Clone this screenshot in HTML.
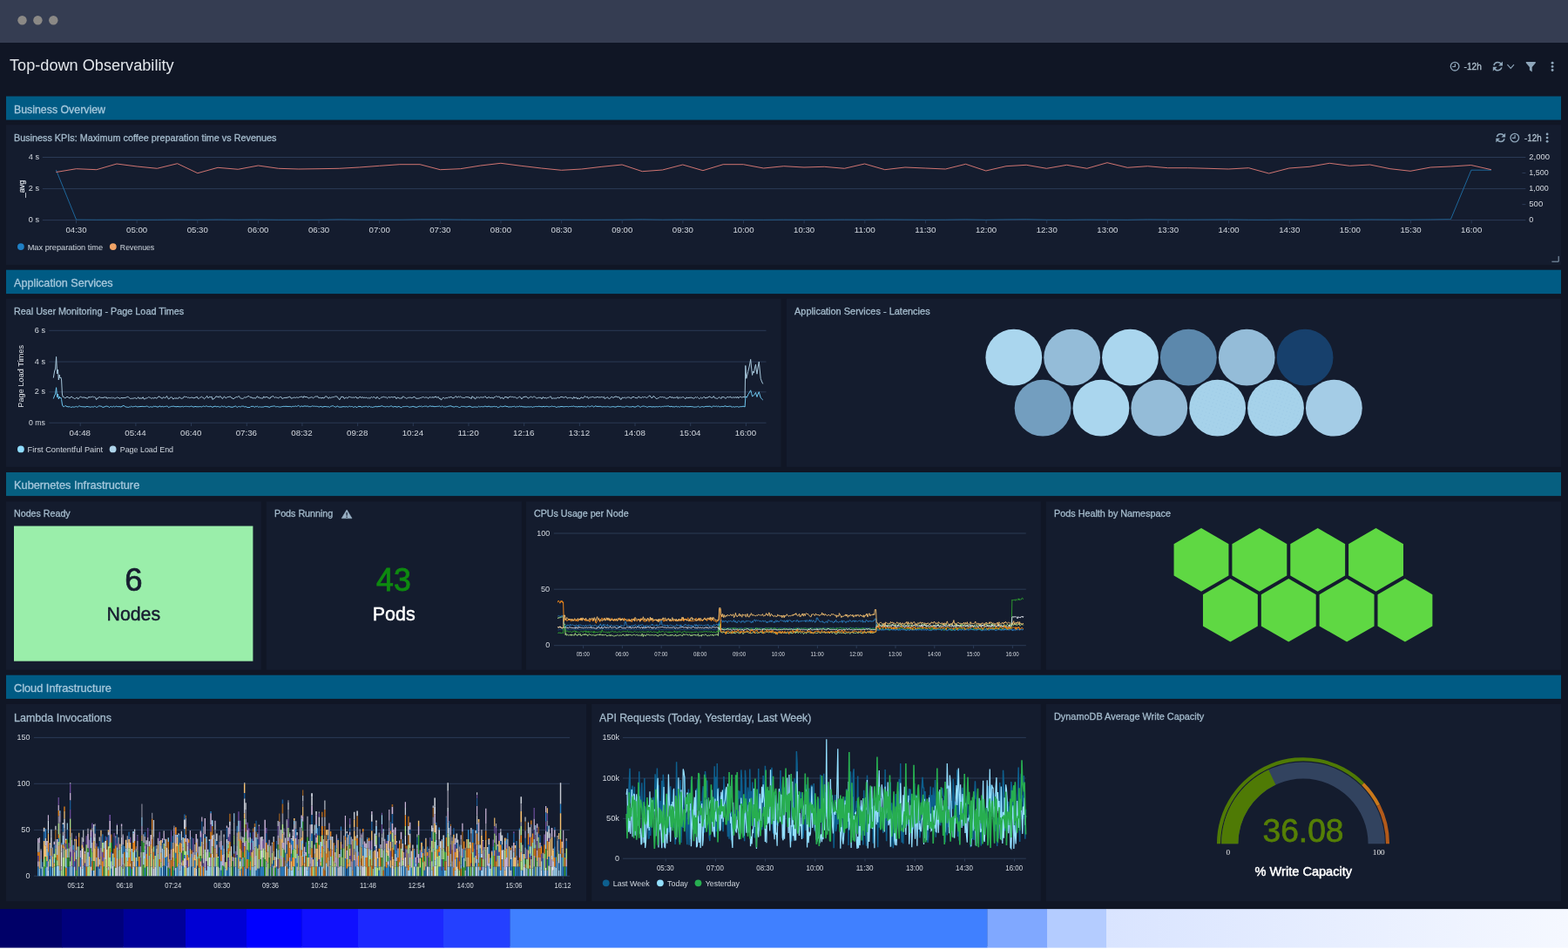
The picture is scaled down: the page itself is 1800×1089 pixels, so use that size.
<!DOCTYPE html>
<html lang="en"><head><meta charset="utf-8"><title>Top-down Observability</title>
<style>
*{box-sizing:border-box;margin:0;padding:0}
html,body{width:1800px;height:1089px;overflow:hidden;background:#101625}
body{position:relative;font-family:"Liberation Sans",sans-serif;color:#d3d8df}
#app{position:absolute;left:0;top:0;width:1800px;height:1089px;will-change:transform}
.t{position:absolute;white-space:nowrap;transform-origin:0 50%}
.abs{position:absolute}
h1,h2,h3{font-weight:400}
h2,h3{-webkit-text-stroke:.3px currentColor}
#bgl{position:absolute;left:0;top:0}
.sec{position:absolute;left:7px;width:1785px;height:27px}
.panel{position:absolute}
svg{position:absolute;left:0;top:0;overflow:visible}
svg text{font-family:"Liberation Sans",sans-serif}
svg text.sf{font-family:"Liberation Serif",serif}
</style></head>
<body><div id="app">
<svg id="bgl" width="1800" height="1089" viewBox="0 0 1800 1089" aria-hidden="true"><rect x="0" y="0" width="1800" height="49" fill="#353d52"/><circle cx="25.5" cy="23.3" r="5.2" fill="#8b8986"/><circle cx="43.4" cy="23.3" r="5.2" fill="#8b8986"/><circle cx="61.3" cy="23.3" r="5.2" fill="#8b8986"/><rect x="7" y="110.5" width="1785" height="27.1" fill="#005b84"/><rect x="7" y="309.7" width="1785" height="27.4" fill="#005b84"/><rect x="7" y="542" width="1785" height="27.1" fill="#065f80"/><rect x="7" y="774.7" width="1785" height="27.2" fill="#005b84"/><rect x="7" y="143.2" width="1785" height="160.7" fill="#141c2e"/><rect x="7" y="342.7" width="889.5" height="193.1" fill="#141c2e"/><rect x="902.8" y="342.7" width="889.2" height="193.1" fill="#141c2e"/><rect x="7" y="575.4" width="292.8" height="193.3" fill="#141c2e"/><rect x="305.7" y="575.4" width="293.1" height="193.3" fill="#141c2e"/><rect x="604" y="575.4" width="590.8" height="193.3" fill="#141c2e"/><rect x="1200.8" y="575.4" width="591.2" height="193.3" fill="#141c2e"/><rect x="7" y="807.9" width="666.2" height="226.4" fill="#141c2e"/><rect x="679.2" y="807.9" width="515.6" height="226.4" fill="#141c2e"/><rect x="1200.8" y="807.9" width="591.2" height="226.4" fill="#141c2e"/><defs><linearGradient id="lg" x1="0" x2="1" y1="0" y2="0"><stop offset="0" stop-color="#d9e4ff"/><stop offset="1" stop-color="#f5f8ff"/></linearGradient></defs><rect x="0" y="1086" width="1800" height="3" fill="#ffffff"/><rect x="0" y="1043.1" width="71.3" height="44.5" fill="#000068"/><rect x="71" y="1043.1" width="70.8" height="44.5" fill="#00007c"/><rect x="141.5" y="1043.1" width="71.8" height="44.5" fill="#000098"/><rect x="213" y="1043.1" width="70.3" height="44.5" fill="#0000d4"/><rect x="283" y="1043.1" width="63.8" height="44.5" fill="#0000ff"/><rect x="346.5" y="1043.1" width="64.8" height="44.5" fill="#1010ff"/><rect x="411" y="1043.1" width="98.3" height="44.5" fill="#1c28ff"/><rect x="509" y="1043.1" width="76.8" height="44.5" fill="#2440ff"/><rect x="585.5" y="1043.1" width="548.3" height="44.5" fill="#4080ff"/><rect x="1133.5" y="1043.1" width="68.8" height="44.5" fill="#80a8ff"/><rect x="1202" y="1043.1" width="68.3" height="44.5" fill="#b4ccff"/><rect x="1270" y="1043.1" width="530" height="44.5" fill="url(#lg)"/></svg>
<header id="hdr">
<h1 class="t" style="left:10.6px;top:65px;font-size:18px;line-height:20px;color:#e2e6eb;transform:scaleX(1.008);">Top-down Observability</h1>
<svg width="1800" height="110" viewBox="0 0 1800 110">
<g fill="none" stroke="#8ea6ba" stroke-width="1.3"><circle cx="1670.1" cy="76.2" r="4.8"/><path d="M1670.4 73.22V76.5H1667.22" stroke-width="1.17"/></g>
<text transform="translate(1680.6 80) scale(0.922 1)" font-size="11" fill="#b0c1ce" stroke="#b0c1ce" stroke-width="0.3">-12h</text>
<g fill="none" stroke="#8ea6ba" stroke-width="1.5"><path d="M1714.96 75.01A4.59 4.59 0 0 1 1723.56 74.26"/><path d="M1723.84 77.39A4.59 4.59 0 0 1 1715.24 78.14"/></g><path d="M1725 70.6V75.53H1720.07Z" fill="#8ea6ba"/><path d="M1713.8 81.8V76.87H1718.73Z" fill="#8ea6ba"/>
<path d="M1730.4 74.2L1734.2 78.4L1738 74.2" fill="none" stroke="#8ea6ba" stroke-width="1.1"/>
<path d="M1751.8 71H1762.8V72.37L1758.73 76.93V82.4L1755.87 80.46V76.93L1751.8 72.37Z" fill="#8ea6ba"/>
<g fill="#8ea6ba"><circle cx="1782.1" cy="72.3" r="1.45"/><circle cx="1782.1" cy="76.4" r="1.45"/><circle cx="1782.1" cy="80.5" r="1.45"/></g>
</svg>
</header>
<div class="sec" style="top:110px"><h2 class="t" style="left:9.2px;top:9px;font-size:12.6px;line-height:14px;color:#a6c8dc;transform:scaleX(0.98);">Business Overview</h2></div>
<div class="sec" style="top:310px"><h2 class="t" style="left:9.2px;top:8px;font-size:12.6px;line-height:14px;color:#a6c8dc;transform:scaleX(1.002);">Application Services</h2></div>
<div class="sec" style="top:542px"><h2 class="t" style="left:9.2px;top:8px;font-size:12.6px;line-height:14px;color:#a6c8dc;transform:scaleX(1.015);">Kubernetes Infrastructure</h2></div>
<div class="sec" style="top:775px"><h2 class="t" style="left:9.2px;top:8px;font-size:12.6px;line-height:14px;color:#a6c8dc;transform:scaleX(1.012);">Cloud Infrastructure</h2></div>
<section class="panel" id="p1" style="left:7px;top:143px;width:1785px;height:161px">
<h3 class="t" style="left:9.2px;top:9px;font-size:10.8px;line-height:12px;color:#a4bbcc;transform:scaleX(1.001);">Business KPIs: Maximum coffee preparation time vs Revenues</h3>
<svg width="1785" height="161" viewBox="7 143 1785 161">
<g><path d="M48.8 180.5H1751.4" stroke="#2a3a55" stroke-width="1"/><path d="M48.8 216.6H1751.4" stroke="#2a3a55" stroke-width="1"/><path d="M48.8 252.6H1751.4" stroke="#2a3a55" stroke-width="1"/><path d="M1747.5 198.5H1751.4" stroke="#2a3a55" stroke-width="1"/><path d="M1747.5 234.6H1751.4" stroke="#2a3a55" stroke-width="1"/><path d="M87.5 252.6V256.4" stroke="#2a3a55" stroke-width="1"/><path d="M157.14 252.6V256.4" stroke="#2a3a55" stroke-width="1"/><path d="M226.78 252.6V256.4" stroke="#2a3a55" stroke-width="1"/><path d="M296.42 252.6V256.4" stroke="#2a3a55" stroke-width="1"/><path d="M366.06 252.6V256.4" stroke="#2a3a55" stroke-width="1"/><path d="M435.7 252.6V256.4" stroke="#2a3a55" stroke-width="1"/><path d="M505.33 252.6V256.4" stroke="#2a3a55" stroke-width="1"/><path d="M574.97 252.6V256.4" stroke="#2a3a55" stroke-width="1"/><path d="M644.61 252.6V256.4" stroke="#2a3a55" stroke-width="1"/><path d="M714.25 252.6V256.4" stroke="#2a3a55" stroke-width="1"/><path d="M783.89 252.6V256.4" stroke="#2a3a55" stroke-width="1"/><path d="M853.53 252.6V256.4" stroke="#2a3a55" stroke-width="1"/><path d="M923.17 252.6V256.4" stroke="#2a3a55" stroke-width="1"/><path d="M992.81 252.6V256.4" stroke="#2a3a55" stroke-width="1"/><path d="M1062.45 252.6V256.4" stroke="#2a3a55" stroke-width="1"/><path d="M1132.09 252.6V256.4" stroke="#2a3a55" stroke-width="1"/><path d="M1201.73 252.6V256.4" stroke="#2a3a55" stroke-width="1"/><path d="M1271.37 252.6V256.4" stroke="#2a3a55" stroke-width="1"/><path d="M1341 252.6V256.4" stroke="#2a3a55" stroke-width="1"/><path d="M1410.64 252.6V256.4" stroke="#2a3a55" stroke-width="1"/><path d="M1480.28 252.6V256.4" stroke="#2a3a55" stroke-width="1"/><path d="M1549.92 252.6V256.4" stroke="#2a3a55" stroke-width="1"/><path d="M1619.56 252.6V256.4" stroke="#2a3a55" stroke-width="1"/><path d="M1689.2 252.6V256.4" stroke="#2a3a55" stroke-width="1"/></g>
<polyline points="64.4,195 87.5,252" fill="none" stroke="#1f7ab8" stroke-width="0.8"/>
<polyline points="87.5,252 110.81,252.21 134.01,252.12 157.22,252.22 180.42,252.19 203.63,251.97 226.83,252.23 250.03,251.91 273.24,252.15 296.44,251.94 319.65,252.21 342.85,252.16 366.05,252.24 389.26,251.72 412.46,252 435.67,252.12 458.87,252.13 482.08,251.71 505.28,251.69 528.48,251.99 551.69,252.14 574.89,252.19 598.1,252.28 621.3,252.12 644.51,252.08 667.71,252.19 690.91,252.16 714.12,252.07 737.32,251.7 760.53,252.11 783.73,251.88 806.94,252.08 830.14,252.04 853.34,252.18 876.55,252.26 899.75,252.08 922.96,252.21 946.16,252.14 969.36,251.97 992.57,252.12 1015.77,251.87 1038.98,252.02 1062.18,252.21 1085.39,252.15 1108.59,251.78 1131.79,252.28 1155,251.84 1178.2,251.59 1201.41,252.19 1224.61,252.26 1247.82,252.01 1271.02,252.13 1294.22,252.28 1317.43,251.79 1340.63,252.01 1363.84,252.07 1387.04,251.97 1410.25,251.8 1433.45,252.17 1456.65,252.26 1479.86,251.85 1503.06,252.08 1526.27,252.09 1549.47,252.14 1572.67,251.86 1595.88,251.96 1619.08,252.11 1642.29,251.85 1665.5,251.4" fill="none" stroke="#1f7ab8" stroke-width="0.55" stroke-linejoin="round"/>
<polyline points="1665.5,251.4 1688.9,195.2 1711.9,195.2" fill="none" stroke="#1f7ab8" stroke-width="0.8" stroke-linejoin="round"/>
<polyline points="64.4,197.5 87.6,193.7 110.81,194.7 134.01,188 157.22,191 180.42,193.3 203.63,187.7 226.83,198.7 250.03,192.3 273.24,194.3 296.44,190 319.65,193.3 342.85,194 366.05,193.7 389.26,193.3 412.46,192 435.67,190.3 458.87,188.7 482.08,188.7 505.28,194.7 528.48,193.7 551.69,190 574.89,187.3 598.1,190.3 621.3,193 644.51,195.3 667.71,194 690.91,191.3 714.12,189 737.32,196.7 760.53,195 783.73,189 806.94,195.7 830.14,188.7 853.34,188.7 876.55,193 899.75,190.7 922.96,192 946.16,191.3 969.36,193.3 992.57,188 1015.77,194.7 1038.98,192 1062.18,193 1085.39,194 1108.59,188.3 1131.79,196 1155,190.7 1178.2,189.3 1201.41,193.3 1224.61,189.3 1247.82,193.3 1271.02,186.7 1294.22,192.3 1317.43,190.7 1340.63,192.7 1363.84,192.7 1387.04,193.3 1410.25,194 1433.45,192.7 1456.65,199 1479.86,193 1503.06,191.3 1526.27,187.3 1549.47,190.3 1572.67,189 1595.88,193.7 1619.08,196.3 1642.29,192 1665.49,191 1688.7,189.5 1711.9,194.7" fill="none" stroke="#da7975" stroke-width="0.95" stroke-linejoin="round"/>
<g><text transform="translate(75.4 267.4) scale(1.074 1)" font-size="9" fill="#d3d8df">04:30</text><text transform="translate(145.04 267.4) scale(1.074 1)" font-size="9" fill="#d3d8df">05:00</text><text transform="translate(214.68 267.4) scale(1.074 1)" font-size="9" fill="#d3d8df">05:30</text><text transform="translate(284.32 267.4) scale(1.074 1)" font-size="9" fill="#d3d8df">06:00</text><text transform="translate(353.96 267.4) scale(1.074 1)" font-size="9" fill="#d3d8df">06:30</text><text transform="translate(423.6 267.4) scale(1.074 1)" font-size="9" fill="#d3d8df">07:00</text><text transform="translate(493.23 267.4) scale(1.074 1)" font-size="9" fill="#d3d8df">07:30</text><text transform="translate(562.87 267.4) scale(1.074 1)" font-size="9" fill="#d3d8df">08:00</text><text transform="translate(632.51 267.4) scale(1.074 1)" font-size="9" fill="#d3d8df">08:30</text><text transform="translate(702.15 267.4) scale(1.074 1)" font-size="9" fill="#d3d8df">09:00</text><text transform="translate(771.79 267.4) scale(1.074 1)" font-size="9" fill="#d3d8df">09:30</text><text transform="translate(841.43 267.4) scale(1.074 1)" font-size="9" fill="#d3d8df">10:00</text><text transform="translate(911.07 267.4) scale(1.074 1)" font-size="9" fill="#d3d8df">10:30</text><text transform="translate(980.71 267.4) scale(1.107 1)" font-size="9" fill="#d3d8df">11:00</text><text transform="translate(1050.35 267.4) scale(1.107 1)" font-size="9" fill="#d3d8df">11:30</text><text transform="translate(1119.99 267.4) scale(1.074 1)" font-size="9" fill="#d3d8df">12:00</text><text transform="translate(1189.63 267.4) scale(1.074 1)" font-size="9" fill="#d3d8df">12:30</text><text transform="translate(1259.27 267.4) scale(1.074 1)" font-size="9" fill="#d3d8df">13:00</text><text transform="translate(1328.9 267.4) scale(1.074 1)" font-size="9" fill="#d3d8df">13:30</text><text transform="translate(1398.54 267.4) scale(1.074 1)" font-size="9" fill="#d3d8df">14:00</text><text transform="translate(1468.18 267.4) scale(1.074 1)" font-size="9" fill="#d3d8df">14:30</text><text transform="translate(1537.82 267.4) scale(1.074 1)" font-size="9" fill="#d3d8df">15:00</text><text transform="translate(1607.46 267.4) scale(1.074 1)" font-size="9" fill="#d3d8df">15:30</text><text transform="translate(1677.1 267.4) scale(1.074 1)" font-size="9" fill="#d3d8df">16:00</text><text transform="translate(32.8 183) scale(1.016 1)" font-size="9" fill="#d3d8df">4 s</text><text transform="translate(32.8 219.1) scale(1.016 1)" font-size="9" fill="#d3d8df">2 s</text><text transform="translate(32.8 255.1) scale(1.016 1)" font-size="9" fill="#d3d8df">0 s</text><text transform="translate(1755.3 183) scale(1.052 1)" font-size="9" fill="#d3d8df">2,000</text><text transform="translate(1755.3 201) scale(0.999 1)" font-size="9" fill="#d3d8df">1,500</text><text transform="translate(1755.3 219.1) scale(0.999 1)" font-size="9" fill="#d3d8df">1,000</text><text transform="translate(1755.3 237.1) scale(1.065 1)" font-size="9" fill="#d3d8df">500</text><text x="1755.3" y="255.1" font-size="9" fill="#d3d8df">0</text><text transform="translate(28 216.5) rotate(-90)" text-anchor="middle" font-size="9.2" stroke="#d3d8df" stroke-width="0.3" fill="#d3d8df">_avg</text></g>
<circle cx="23.9" cy="283.1" r="3.9" fill="#1f7fc4"/>
<text transform="translate(31.7 286.9) scale(1.024 1)" font-size="9" fill="#cfd6de">Max preparation time</text>
<circle cx="129.8" cy="283.1" r="3.9" fill="#f5aa6c"/><circle cx="129.8" cy="283.1" r="3.4" fill="url(#dots2)"/>
<text transform="translate(137.8 286.9) scale(0.975 1)" font-size="9" fill="#cfd6de">Revenues</text>
<g fill="none" stroke="#8ea6ba" stroke-width="1.5"><path d="M1718.42 156.95A4.43 4.43 0 0 1 1726.71 156.23"/><path d="M1726.98 159.25A4.43 4.43 0 0 1 1718.69 159.97"/></g><path d="M1728.1 152.7V157.45H1723.35Z" fill="#8ea6ba"/><path d="M1717.3 163.5V158.75H1722.05Z" fill="#8ea6ba"/>
<g fill="none" stroke="#8ea6ba" stroke-width="1.3"><circle cx="1738.8" cy="158.1" r="4.8"/><path d="M1739.1 155.12V158.4H1735.92" stroke-width="1.17"/></g>
<text transform="translate(1750 162) scale(0.89 1)" font-size="11" fill="#b0c1ce" stroke="#b0c1ce" stroke-width="0.3">-12h</text>
<g fill="#8ea6ba"><circle cx="1776.1" cy="153.9" r="1.4"/><circle cx="1776.1" cy="158.1" r="1.4"/><circle cx="1776.1" cy="162.3" r="1.4"/></g>
<path d="M1781.4 300.2H1789.2V293.9" fill="none" stroke="#8ea6ba" stroke-width="1"/>
</svg></section>
<section class="panel" id="p2" style="left:7px;top:343px;width:889px;height:193px">
<h3 class="t" style="left:9.2px;top:8px;font-size:10.8px;line-height:12px;color:#a4bbcc;transform:scaleX(1.001);">Real User Monitoring - Page Load Times</h3>
<svg width="889" height="193" viewBox="7 343 889 193">
<g><path d="M56.4 379.3H879.5" stroke="#2a3a55" stroke-width="1"/><path d="M56.4 415.1H879.5" stroke="#2a3a55" stroke-width="1"/><path d="M56.4 449.8H879.5" stroke="#2a3a55" stroke-width="1"/><path d="M56.4 485.2H879.5" stroke="#2a3a55" stroke-width="1"/><path d="M92.2 485.2V489" stroke="#2a3a55" stroke-width="1"/><path d="M155.88 485.2V489" stroke="#2a3a55" stroke-width="1"/><path d="M219.57 485.2V489" stroke="#2a3a55" stroke-width="1"/><path d="M283.25 485.2V489" stroke="#2a3a55" stroke-width="1"/><path d="M346.93 485.2V489" stroke="#2a3a55" stroke-width="1"/><path d="M410.62 485.2V489" stroke="#2a3a55" stroke-width="1"/><path d="M474.3 485.2V489" stroke="#2a3a55" stroke-width="1"/><path d="M537.98 485.2V489" stroke="#2a3a55" stroke-width="1"/><path d="M601.67 485.2V489" stroke="#2a3a55" stroke-width="1"/><path d="M665.35 485.2V489" stroke="#2a3a55" stroke-width="1"/><path d="M729.03 485.2V489" stroke="#2a3a55" stroke-width="1"/><path d="M792.72 485.2V489" stroke="#2a3a55" stroke-width="1"/><path d="M856.4 485.2V489" stroke="#2a3a55" stroke-width="1"/></g>
<polyline points="61.3,433.6 62.6,426 63.6,423 64.6,409.4 65.6,429 66.5,424 67.3,436 68.2,430 69,434 69.8,433 70.6,436 71.4,452 72.2,455.5 72.8,455.28 73.85,456.21 74.9,456.95 75.95,456.04 77,455.16 78.05,455.84 79.1,456.45 80.15,457.1 81.2,455.56 82.25,455.04 83.3,456.38 84.35,456.61 85.4,457.47 86.45,457.32 87.5,456.46 88.55,456.07 89.6,458.09 90.65,456.55 91.7,455.72 92.75,455.2 93.8,455.97 94.85,456.24 95.9,455.95 96.95,456.08 98,456.37 99.05,456.77 100.1,457.19 101.15,456.66 102.2,454.99 103.25,456.36 104.3,455.18 105.35,455.77 106.4,454.96 107.45,455.83 108.5,455.51 109.55,456.15 110.6,458.66 111.65,456.9 112.7,457.04 113.75,455.46 114.8,455.76 115.85,456.57 116.9,456.24 117.95,456.49 119,456.36 120.05,455.49 121.1,456.41 122.15,455.65 123.2,457.44 124.25,456.19 125.3,456.71 126.35,456.36 127.4,456.96 128.45,455.98 129.5,456.88 130.55,456.31 131.6,457.18 132.65,456.96 133.7,456.53 134.75,455.72 135.8,456.63 136.85,456.68 137.9,457.58 138.95,456.33 140,456.66 141.05,456.72 142.1,456.57 143.15,456.47 144.2,456.42 145.25,455.82 146.3,455.32 147.35,455.64 148.4,456.48 149.45,457.42 150.5,457.3 151.55,457.32 152.6,457.12 153.65,457 154.7,456.58 155.75,456.89 156.8,457.74 157.85,456.42 158.9,455.74 159.95,457.53 161,456.78 162.05,457.1 163.1,457.13 164.15,455.63 165.2,457.85 166.25,458.03 167.3,456.88 168.35,456.97 169.4,456.53 170.45,455.63 171.5,455.95 172.55,456.4 173.6,457.1 174.65,457 175.7,456.49 176.75,457.3 177.8,455.96 178.85,456.72 179.9,457.19 180.95,456.28 182,454.88 183.05,455.12 184.1,456.06 185.15,456.55 186.2,457.47 187.25,455.83 188.3,456.09 189.35,456.65 190.4,456.22 191.45,454.43 192.5,456.27 193.55,457.96 194.6,457.48 195.65,455.9 196.7,455.8 197.75,456.25 198.8,458.08 199.85,457.23 200.9,456.59 201.95,457.49 203,456.52 204.05,457.69 205.1,456.13 206.15,455.82 207.2,456.63 208.25,457.4 209.3,457.05 210.35,456.68 211.4,454.98 212.45,455.3 213.5,455.47 214.55,455.58 215.6,456.45 216.65,456.02 217.7,456.74 218.75,456.42 219.8,456.02 220.85,456.23 221.9,456.53 222.95,456.94 224,456.06 225.05,455.98 226.1,455.11 227.15,457.08 228.2,457.55 229.25,456.47 230.3,455.92 231.35,455.19 232.4,456.02 233.45,456.3 234.5,457.87 235.55,456.88 236.6,455.82 237.65,454.25 238.7,456.67 239.75,456.48 240.8,455.08 241.85,456 242.9,454.93 243.95,458.43 245,457.71 246.05,457.08 247.1,456.33 248.15,454.64 249.2,455.64 250.25,454.86 251.3,456.25 252.35,454.61 253.4,455.04 254.45,456.77 255.5,457.6 256.55,455.74 257.6,454.91 258.65,456.47 259.7,456.92 260.75,455.68 261.8,455.52 262.85,455.48 263.9,455.09 264.95,455.36 266,456.89 267.05,456.92 268.1,457.96 269.15,456.66 270.2,456.24 271.25,455.47 272.3,455.89 273.35,455.12 274.4,454.54 275.45,456.23 276.5,457.29 277.55,457.15 278.6,457.49 279.65,456.77 280.7,455.83 281.75,456.15 282.8,455.91 283.85,455.28 284.9,454.65 285.95,454.62 287,455.72 288.05,456.17 289.1,455.84 290.15,457.16 291.2,456.62 292.25,456.76 293.3,457.28 294.35,455.91 295.4,454.64 296.45,456.29 297.5,455.71 298.55,457.04 299.6,456.7 300.65,457.11 301.7,457.04 302.75,454.89 303.8,456.35 304.85,455.74 305.9,455.49 306.95,455.66 308,456.61 309.05,456.99 310.1,457.19 311.15,455.25 312.2,455.47 313.25,454.2 314.3,455.52 315.35,456.45 316.4,455.7 317.45,456.23 318.5,456.38 319.55,457.01 320.6,455.83 321.65,455.47 322.7,455.41 323.75,457.28 324.8,457.34 325.85,456.45 326.9,456.44 327.95,456.36 329,456.4 330.05,456.1 331.1,455.92 332.15,455.17 333.2,455.41 334.25,457.2 335.3,456.9 336.35,456.46 337.4,456.12 338.45,456.22 339.5,456.47 340.55,455.8 341.6,456.23 342.65,456.39 343.7,455.69 344.75,455.46 345.8,455.23 346.85,455.11 347.9,456.54 348.95,454.53 350,455.5 351.05,455.53 352.1,455.53 353.15,456.07 354.2,457.01 355.25,456.5 356.3,456.18 357.35,455.74 358.4,455.96 359.45,456.81 360.5,456.09 361.55,455.31 362.6,454.98 363.65,455.01 364.7,454.8 365.75,456.6 366.8,456.59 367.85,456.14 368.9,457.28 369.95,456.03 371,456.71 372.05,456.95 373.1,455.27 374.15,454.75 375.2,455.07 376.25,456.54 377.3,457.27 378.35,455.6 379.4,456.81 380.45,456.09 381.5,455.87 382.55,455.69 383.6,455.8 384.65,454.72 385.7,455 386.75,454.91 387.8,456.18 388.85,457.76 389.9,458.72 390.95,456.7 392,455.06 393.05,455.55 394.1,455.3 395.15,457.42 396.2,456.99 397.25,455.89 398.3,456.81 399.35,456.78 400.4,455.16 401.45,455.49 402.5,455.81 403.55,456.1 404.6,456.27 405.65,455.97 406.7,456.27 407.75,455.78 408.8,455.4 409.85,457.1 410.9,456.74 411.95,456.69 413,455.15 414.05,455.76 415.1,456.68 416.15,455.38 417.2,456.78 418.25,456.08 419.3,456.47 420.35,456.18 421.4,456.36 422.45,457.15 423.5,456.18 424.55,457.37 425.6,455.96 426.65,455.43 427.7,456.5 428.75,455.49 429.8,455.71 430.85,456.73 431.9,457.27 432.95,455.19 434,456.28 435.05,457.64 436.1,457.53 437.15,456.42 438.2,455.81 439.25,455.86 440.3,455.23 441.35,455.71 442.4,455.91 443.45,456 444.5,457.03 445.55,456.28 446.6,455.13 447.65,456.67 448.7,455.54 449.75,455.67 450.8,455.94 451.85,455.86 452.9,455.35 453.95,455.76 455,457.71 456.05,456.2 457.1,456.1 458.15,457.01 459.2,457 460.25,457.01 461.3,457.09 462.35,454.99 463.4,455.19 464.45,455.99 465.5,456.51 466.55,457.26 467.6,456.87 468.65,456.22 469.7,456.24 470.75,456.05 471.8,456.34 472.85,456.75 473.9,456.11 474.95,455.56 476,455.37 477.05,456.77 478.1,457.33 479.15,457.28 480.2,457.17 481.25,457.12 482.3,456.47 483.35,456.78 484.4,455.58 485.45,455.86 486.5,455.55 487.55,456.55 488.6,455.87 489.65,456.02 490.7,456.45 491.75,457.29 492.8,455.93 493.85,455.42 494.9,456.58 495.95,455.48 497,456.32 498.05,455.81 499.1,456 500.15,454.78 501.2,456.31 502.25,455.86 503.3,455.42 504.35,457.52 505.4,457.13 506.45,459.11 507.5,457.38 508.55,456.29 509.6,456.31 510.65,457.44 511.7,456.55 512.75,456.64 513.8,456.72 514.85,455.67 515.9,456.14 516.95,455.8 518,455.15 519.05,456.54 520.1,456.8 521.15,456.44 522.2,455.59 523.25,454.51 524.3,456.06 525.35,456.08 526.4,454.9 527.45,455.77 528.5,454.93 529.55,455.8 530.6,456.19 531.65,456.46 532.7,456.44 533.75,456.4 534.8,455.41 535.85,455.67 536.9,455.66 537.95,455.86 539,456.3 540.05,456.69 541.1,457.57 542.15,454.69 543.2,456.05 544.25,456.01 545.3,457.85 546.35,457.39 547.4,455.32 548.45,456.24 549.5,455.82 550.55,456.83 551.6,455.6 552.65,455.94 553.7,456.02 554.75,456.07 555.8,455.72 556.85,454.68 557.9,456.09 558.95,456.92 560,456.36 561.05,455.49 562.1,456.14 563.15,456.61 564.2,456.19 565.25,456.19 566.3,457.25 567.35,455.68 568.4,455.62 569.45,454.6 570.5,455.19 571.55,455.34 572.6,455.22 573.65,455.39 574.7,457.3 575.75,456.38 576.8,456.17 577.85,457.84 578.9,456.65 579.95,455.03 581,456.15 582.05,455.48 583.1,457.21 584.15,455.57 585.2,455.58 586.25,454.81 587.3,455.86 588.35,455.33 589.4,455.89 590.45,455.82 591.5,455.63 592.55,456.74 593.6,457.06 594.65,456.51 595.7,455.62 596.75,455.22 597.8,456.11 598.85,457.97 599.9,456.39 600.95,455.67 602,455.52 603.05,455.17 604.1,455.16 605.15,455.74 606.2,457.14 607.25,456.48 608.3,455.9 609.35,454.9 610.4,455.97 611.45,456.11 612.5,455.25 613.55,455.1 614.6,455.84 615.65,456.85 616.7,456.87 617.75,456.55 618.8,456.06 619.85,456.4 620.9,456.25 621.95,457.84 623,455.84 624.05,455.82 625.1,457.04 626.15,456.25 627.2,457.28 628.25,456.49 629.3,456.4 630.35,455.98 631.4,455.1 632.45,455.14 633.5,457.54 634.55,457.09 635.6,456.92 636.65,457.13 637.7,456.91 638.75,457.18 639.8,456.29 640.85,456.06 641.9,456.9 642.95,456.14 644,455.19 645.05,455.73 646.1,455.65 647.15,456.49 648.2,455.75 649.25,455.27 650.3,455.67 651.35,457.21 652.4,456.47 653.45,456.4 654.5,456.27 655.55,456.44 656.6,456.97 657.65,457.48 658.7,455.35 659.75,456.97 660.8,456.43 661.85,456.03 662.9,457.95 663.95,456.6 665,457.78 666.05,457.4 667.1,455.79 668.15,456.44 669.2,456.83 670.25,456.29 671.3,454.48 672.35,455.43 673.4,455.82 674.45,455.26 675.5,457.29 676.55,456.34 677.6,455.95 678.65,455.9 679.7,455.52 680.75,455.41 681.8,456.03 682.85,456.39 683.9,455.88 684.95,456.03 686,455.11 687.05,456.26 688.1,455.66 689.15,456.2 690.2,455.52 691.25,455.61 692.3,456.18 693.35,455.29 694.4,457.78 695.45,456.65 696.5,456.28 697.55,455.67 698.6,457.24 699.65,457.55 700.7,456.83 701.75,455.36 702.8,455.57 703.85,456.47 704.9,455.9 705.95,455.22 707,455.02 708.05,455.27 709.1,455.93 710.15,455.63 711.2,456.04 712.25,458.25 713.3,458.14 714.35,456 715.4,456.4 716.45,456.32 717.5,456.13 718.55,456.96 719.6,456.18 720.65,455.95 721.7,455.84 722.75,456.02 723.8,457.11 724.85,457.06 725.9,455.45 726.95,455.64 728,455.43 729.05,456.58 730.1,456.48 731.15,456.95 732.2,456.38 733.25,454.82 734.3,456.12 735.35,456.35 736.4,456.63 737.45,455.35 738.5,456.01 739.55,455.63 740.6,455.51 741.65,456.26 742.7,456.48 743.75,455.62 744.8,454.74 745.85,453.91 746.9,455.08 747.95,456.71 749,456.31 750.05,454.54 751.1,455.06 752.15,456.17 753.2,457.45 754.25,457.45 755.3,456.85 756.35,456.54 757.4,455.51 758.45,455.65 759.5,455.79 760.55,455.5 761.6,456.04 762.65,455.86 763.7,456.35 764.75,457.32 765.8,457.09 766.85,456.78 767.9,456.19 768.95,455.06 770,455.77 771.05,456.48 772.1,455.53 773.15,456.94 774.2,456.17 775.25,456.47 776.3,456.03 777.35,455.21 778.4,457.45 779.45,455.71 780.5,456.74 781.55,455.95 782.6,456.33 783.65,455.64 784.7,455.72 785.75,456.75 786.8,457.82 787.85,456.05 788.9,456.16 789.95,456.9 791,455.94 792.05,456.65 793.1,455.75 794.15,456.52 795.2,456.62 796.25,457.24 797.3,456.78 798.35,455.48 799.4,456.48 800.45,455.46 801.5,456.54 802.55,457.44 803.6,457.02 804.65,456.03 805.7,457.04 806.75,456.58 807.8,455.38 808.85,455.69 809.9,457.11 810.95,456.25 812,456.3 813.05,455.97 814.1,454.87 815.15,455.42 816.2,456.23 817.25,456.37 818.3,456.12 819.35,454.57 820.4,456.63 821.45,456.87 822.5,457.17 823.55,457.47 824.6,456.25 825.65,455.76 826.7,456.3 827.75,457.49 828.8,455.32 829.85,455.76 830.9,455.53 831.95,456.42 833,457.36 834.05,456.33 835.1,455.31 836.15,455.97 837.2,455.92 838.25,454.96 839.3,456.49 840.35,455.89 841.4,456.62 842.45,455.34 843.5,456.76 844.55,455.29 845.6,456.72 846.65,455 847.7,456.87 848.75,456.12 849.8,455.01 850.85,455.67 851.9,456.29 852.95,455.49 854,455.62 855.1,456 855.8,419.5 856.8,434.3 858.7,426.6 860.3,420 861.7,412.4 862.6,422 863.6,430.5 864.6,426 865.5,427.9 866.5,422 867.5,418.2 868.2,424 869,429.2 870.2,421 871.3,415 872.2,424 873.2,434.3 874.5,438 875.8,440.5" fill="none" stroke="#a6c6da" stroke-width="1" stroke-linejoin="round"/>
<polyline points="61.3,457.5 62.6,454 63.6,452 64.6,444.7 65.6,456 66.5,452 67.3,458 68.2,455 69,457 69.8,456 70.6,458.5 71.4,464 72.2,466.2 72.8,466.7 73.85,466.57 74.9,465.43 75.95,466.08 77,466.61 78.05,466.72 79.1,467.02 80.15,466.46 81.2,467.53 82.25,467.18 83.3,466.89 84.35,467.1 85.4,467.11 86.45,466.79 87.5,466.42 88.55,466.94 89.6,466.86 90.65,465.96 91.7,465.99 92.75,466.59 93.8,466.64 94.85,466.72 95.9,466.88 96.95,466.74 98,467.24 99.05,466.57 100.1,466.44 101.15,466.67 102.2,466.91 103.25,466.99 104.3,467.28 105.35,466.62 106.4,467.05 107.45,466.91 108.5,466.3 109.55,466.46 110.6,467.35 111.65,467.12 112.7,466.58 113.75,465.68 114.8,466.05 115.85,466.17 116.9,466.5 117.95,467.45 119,467.14 120.05,466.88 121.1,466.33 122.15,466.07 123.2,466.36 124.25,466.35 125.3,467.67 126.35,466.77 127.4,466.42 128.45,466.97 129.5,466.74 130.55,466.17 131.6,466.96 132.65,466.59 133.7,466.09 134.75,466.57 135.8,466.78 136.85,466.52 137.9,466.84 138.95,466.98 140,466.38 141.05,465.75 142.1,465.44 143.15,466.2 144.2,466.95 145.25,467.09 146.3,467.27 147.35,467.51 148.4,466.88 149.45,467.08 150.5,466.16 151.55,466.73 152.6,466.79 153.65,466.62 154.7,466.44 155.75,466.13 156.8,466.51 157.85,467.06 158.9,466.6 159.95,466.8 161,466.41 162.05,466.64 163.1,466.23 164.15,466.63 165.2,466.53 166.25,466.7 167.3,466.4 168.35,466.09 169.4,466.32 170.45,466.91 171.5,467.29 172.55,466.68 173.6,466.93 174.65,466.99 175.7,466.87 176.75,466.09 177.8,466.57 178.85,466.22 179.9,466.93 180.95,467 182,466.95 183.05,465.74 184.1,466.58 185.15,466.86 186.2,466.19 187.25,466.85 188.3,466.7 189.35,466.56 190.4,466.32 191.45,466.13 192.5,466.29 193.55,467.68 194.6,467 195.65,466.8 196.7,466.41 197.75,466.31 198.8,466.3 199.85,466.17 200.9,466.8 201.95,466.56 203,466.92 204.05,466.26 205.1,466.85 206.15,466.66 207.2,466.87 208.25,466.64 209.3,466.28 210.35,466.96 211.4,466.54 212.45,466.53 213.5,466.24 214.55,466.57 215.6,466.44 216.65,466.66 217.7,466.75 218.75,466.38 219.8,466 220.85,466.58 221.9,466.94 222.95,466.97 224,466.28 225.05,466.73 226.1,466.79 227.15,466.76 228.2,466.81 229.25,466.54 230.3,466.66 231.35,466.97 232.4,466.52 233.45,466.03 234.5,466.39 235.55,466.61 236.6,465.9 237.65,466.13 238.7,466.68 239.75,466.57 240.8,466.63 241.85,466.13 242.9,466.8 243.95,467.33 245,466.74 246.05,466.36 247.1,466.09 248.15,466.79 249.2,466.7 250.25,466.33 251.3,466.98 252.35,467 253.4,466.95 254.45,466.04 255.5,466.39 256.55,466.78 257.6,466.19 258.65,466.83 259.7,467.21 260.75,467.18 261.8,466.5 262.85,466.3 263.9,466.87 264.95,467.06 266,467.2 267.05,467.24 268.1,466.75 269.15,466.49 270.2,465.86 271.25,466.68 272.3,467.49 273.35,466.69 274.4,466.45 275.45,466.8 276.5,466.8 277.55,466.14 278.6,466.19 279.65,466.06 280.7,467.21 281.75,466.51 282.8,466.9 283.85,467.42 284.9,467.57 285.95,467.43 287,467.47 288.05,466.39 289.1,466.41 290.15,466.27 291.2,466.39 292.25,467.53 293.3,466.24 294.35,466.7 295.4,466.16 296.45,466.98 297.5,467.21 298.55,466.59 299.6,467.38 300.65,466.86 301.7,467.17 302.75,466.89 303.8,466.47 304.85,466.42 305.9,466.5 306.95,466.8 308,466.71 309.05,467.53 310.1,466.81 311.15,466.48 312.2,466.29 313.25,466.21 314.3,465.94 315.35,466.03 316.4,466.77 317.45,466.67 318.5,466.56 319.55,466.72 320.6,467.04 321.65,466.97 322.7,467 323.75,466.51 324.8,466.47 325.85,466.27 326.9,466.46 327.95,466.25 329,466.35 330.05,466.46 331.1,466.48 332.15,466.46 333.2,466.37 334.25,467.03 335.3,466.6 336.35,466.22 337.4,466.56 338.45,466.17 339.5,466.06 340.55,466.47 341.6,465.93 342.65,465.17 343.7,466.28 344.75,466.9 345.8,466.05 346.85,466.1 347.9,466.67 348.95,465.87 350,466.05 351.05,465.98 352.1,466.34 353.15,465.77 354.2,466.69 355.25,466.57 356.3,466.71 357.35,466.51 358.4,465.77 359.45,466.29 360.5,466 361.55,466.42 362.6,466.22 363.65,466.37 364.7,466.45 365.75,466.85 366.8,466.97 367.85,466.33 368.9,466.51 369.95,467.13 371,466.95 372.05,466.43 373.1,466.5 374.15,466.44 375.2,466.91 376.25,466.71 377.3,466.77 378.35,467.49 379.4,466.34 380.45,466.14 381.5,465.8 382.55,465.76 383.6,466.67 384.65,466.73 385.7,467.26 386.75,466.05 387.8,466.1 388.85,467 389.9,467.11 390.95,467.09 392,467.08 393.05,466.76 394.1,466.64 395.15,466.63 396.2,466.93 397.25,466.64 398.3,466.73 399.35,467.19 400.4,466.35 401.45,466.24 402.5,466.71 403.55,466.53 404.6,466.52 405.65,467.37 406.7,466.99 407.75,466.56 408.8,467 409.85,467.68 410.9,466.5 411.95,466.32 413,466.56 414.05,466.35 415.1,467.35 416.15,467.02 417.2,466.58 418.25,466.78 419.3,466.35 420.35,466.3 421.4,466.55 422.45,467.49 423.5,466.01 424.55,466.58 425.6,467.11 426.65,467.03 427.7,467.46 428.75,467.03 429.8,466.78 430.85,466.61 431.9,466.28 432.95,467.12 434,466.31 435.05,466.47 436.1,466.36 437.15,466.23 438.2,465.64 439.25,466.17 440.3,466.52 441.35,466.63 442.4,466.93 443.45,466.64 444.5,466.37 445.55,466.65 446.6,466.87 447.65,466.34 448.7,465.94 449.75,466.01 450.8,466.83 451.85,467.05 452.9,466.4 453.95,466.58 455,466.91 456.05,467.2 457.1,466.53 458.15,466.49 459.2,467.1 460.25,467.67 461.3,467.5 462.35,466.44 463.4,466.72 464.45,466.52 465.5,466.55 466.55,466.33 467.6,466.34 468.65,466.52 469.7,467.26 470.75,467.06 471.8,466.9 472.85,466.7 473.9,466.34 474.95,466.44 476,467.02 477.05,467.04 478.1,467.48 479.15,466.96 480.2,466.7 481.25,466.02 482.3,466.58 483.35,465.94 484.4,466.98 485.45,466.47 486.5,466.56 487.55,466.08 488.6,466.25 489.65,466.14 490.7,466.89 491.75,466.78 492.8,466.21 493.85,465.75 494.9,466.32 495.95,466.33 497,466.1 498.05,466.67 499.1,466.55 500.15,466.63 501.2,466.38 502.25,466.32 503.3,466.34 504.35,465.91 505.4,466.63 506.45,466.76 507.5,465.99 508.55,466.46 509.6,467 510.65,466.81 511.7,467.16 512.75,466.66 513.8,466.62 514.85,466.11 515.9,466.11 516.95,465.76 518,466.01 519.05,466.52 520.1,466.77 521.15,467.09 522.2,466.8 523.25,466.28 524.3,466.67 525.35,466.57 526.4,467.27 527.45,467.54 528.5,467.25 529.55,466.36 530.6,466.33 531.65,466.59 532.7,466.33 533.75,466.72 534.8,466.9 535.85,467.01 536.9,466.81 537.95,466.33 539,466.2 540.05,466.43 541.1,467.05 542.15,467.33 543.2,467.19 544.25,466.92 545.3,466.95 546.35,467.02 547.4,467.22 548.45,467.11 549.5,466.17 550.55,466.83 551.6,466.82 552.65,466.49 553.7,466.77 554.75,466.76 555.8,466.63 556.85,465.97 557.9,466.45 558.95,466.77 560,466.63 561.05,466.01 562.1,466.6 563.15,466.87 564.2,466.75 565.25,466.81 566.3,466.53 567.35,466.33 568.4,466.72 569.45,466.5 570.5,466.64 571.55,467.85 572.6,467.25 573.65,466.85 574.7,466.06 575.75,466.47 576.8,466.85 577.85,466.41 578.9,466.45 579.95,465.7 581,466.54 582.05,466.36 583.1,466.79 584.15,467.17 585.2,466.71 586.25,467.01 587.3,466.82 588.35,466.59 589.4,466.49 590.45,466.24 591.5,466.98 592.55,467.05 593.6,466.35 594.65,466.85 595.7,466.4 596.75,465.97 597.8,466.87 598.85,466.19 599.9,466.93 600.95,466.77 602,467 603.05,466.91 604.1,467.13 605.15,466.89 606.2,466.91 607.25,466.79 608.3,467.07 609.35,466.59 610.4,466.98 611.45,467.29 612.5,466.78 613.55,466.82 614.6,466.47 615.65,466.45 616.7,466.65 617.75,466.49 618.8,466.23 619.85,466.48 620.9,466.64 621.95,466.73 623,466.91 624.05,466.02 625.1,466.96 626.15,466.64 627.2,466.32 628.25,466.37 629.3,466.7 630.35,466.96 631.4,466.57 632.45,466.65 633.5,466.01 634.55,466.49 635.6,466.52 636.65,466.41 637.7,466.88 638.75,467.37 639.8,467.22 640.85,466.49 641.9,467.15 642.95,466.64 644,466.6 645.05,466.38 646.1,466.71 647.15,466.84 648.2,466.73 649.25,466.56 650.3,466.53 651.35,466.43 652.4,466.92 653.45,466.5 654.5,466.51 655.55,466.49 656.6,466.28 657.65,466.42 658.7,465.99 659.75,466.57 660.8,466.8 661.85,466.55 662.9,467.17 663.95,466.46 665,466.77 666.05,466.83 667.1,466.47 668.15,466.47 669.2,466.9 670.25,466.71 671.3,466.74 672.35,467.17 673.4,466.85 674.45,466.04 675.5,466.15 676.55,466.78 677.6,466.61 678.65,466.19 679.7,465.73 680.75,466.46 681.8,467.13 682.85,466.28 683.9,465.69 684.95,466.51 686,466.37 687.05,466.42 688.1,466.42 689.15,466.21 690.2,466.65 691.25,466.96 692.3,466.85 693.35,466.46 694.4,466.95 695.45,466.66 696.5,466.84 697.55,466.32 698.6,466.76 699.65,466.93 700.7,467.19 701.75,466.79 702.8,466.82 703.85,466.45 704.9,466.89 705.95,466.98 707,467.12 708.05,466.61 709.1,466.14 710.15,466.44 711.2,466.47 712.25,466.28 713.3,466.73 714.35,467 715.4,466.87 716.45,467.1 717.5,466.9 718.55,466.32 719.6,466.3 720.65,466.38 721.7,466.79 722.75,467 723.8,466.77 724.85,467.03 725.9,466.42 726.95,466.5 728,467.13 729.05,466.93 730.1,467.09 731.15,466.04 732.2,465.81 733.25,466.04 734.3,466.81 735.35,467.27 736.4,466.57 737.45,466.22 738.5,466.11 739.55,466.12 740.6,466.66 741.65,466.5 742.7,467.28 743.75,467.07 744.8,466.49 745.85,466.66 746.9,466.56 747.95,466.88 749,467.03 750.05,466.6 751.1,466.93 752.15,466.91 753.2,466.66 754.25,466.72 755.3,466.89 756.35,466.57 757.4,466.34 758.45,467 759.5,466.72 760.55,466.42 761.6,466.72 762.65,466.09 763.7,466.47 764.75,466.05 765.8,466.28 766.85,465.84 767.9,466.1 768.95,466.79 770,466.59 771.05,466.14 772.1,467.11 773.15,466.52 774.2,467.13 775.25,466.56 776.3,466.04 777.35,467.12 778.4,466.6 779.45,466.88 780.5,467.13 781.55,466.27 782.6,466.53 783.65,466.37 784.7,466.76 785.75,466.64 786.8,466.14 787.85,466.49 788.9,466.85 789.95,466.57 791,466.8 792.05,466.46 793.1,466.54 794.15,466.71 795.2,466.69 796.25,467.1 797.3,467.11 798.35,467.07 799.4,467.01 800.45,466.78 801.5,466.22 802.55,466.89 803.6,467.34 804.65,466.91 805.7,466.6 806.75,466.59 807.8,467.05 808.85,466.84 809.9,466.31 810.95,466.45 812,466.27 813.05,466.43 814.1,466.22 815.15,466.16 816.2,467.02 817.25,467.12 818.3,466.16 819.35,466.11 820.4,466.29 821.45,466.36 822.5,466.02 823.55,466.76 824.6,466.05 825.65,466.7 826.7,466.89 827.75,466.55 828.8,466.35 829.85,466.55 830.9,466.64 831.95,465.84 833,465.91 834.05,466.59 835.1,466.56 836.15,466.44 837.2,466.18 838.25,466.22 839.3,466.2 840.35,467.52 841.4,466.41 842.45,467.12 843.5,466.94 844.55,466.78 845.6,466.73 846.65,466.5 847.7,467.17 848.75,466.96 849.8,466.7 850.85,466.59 851.9,466.67 852.95,466.2 854,466.36 855.1,467 855.9,454.9 857.2,456.2 859.1,452.3 860.5,450 861.7,447.8 862.7,451.5 863.6,454.9 865.5,453.6 866.5,452 867.5,450.4 868.2,453 869,455.5 870.2,452 871.3,449.7 872.2,453 873.2,456.2 874.5,457.8 875.8,459" fill="none" stroke="#6ec6ee" stroke-width="1" stroke-linejoin="round"/>
<g><text transform="translate(79.6 499.7) scale(1.083 1)" font-size="9" fill="#d3d8df">04:48</text><text transform="translate(143.28 499.7) scale(1.083 1)" font-size="9" fill="#d3d8df">05:44</text><text transform="translate(206.97 499.7) scale(1.083 1)" font-size="9" fill="#d3d8df">06:40</text><text transform="translate(270.65 499.7) scale(1.083 1)" font-size="9" fill="#d3d8df">07:36</text><text transform="translate(334.33 499.7) scale(1.083 1)" font-size="9" fill="#d3d8df">08:32</text><text transform="translate(398.02 499.7) scale(1.083 1)" font-size="9" fill="#d3d8df">09:28</text><text transform="translate(461.7 499.7) scale(1.083 1)" font-size="9" fill="#d3d8df">10:24</text><text transform="translate(525.38 499.7) scale(1.116 1)" font-size="9" fill="#d3d8df">11:20</text><text transform="translate(589.07 499.7) scale(1.083 1)" font-size="9" fill="#d3d8df">12:16</text><text transform="translate(652.75 499.7) scale(1.083 1)" font-size="9" fill="#d3d8df">13:12</text><text transform="translate(716.43 499.7) scale(1.083 1)" font-size="9" fill="#d3d8df">14:08</text><text transform="translate(780.12 499.7) scale(1.083 1)" font-size="9" fill="#d3d8df">15:04</text><text transform="translate(843.8 499.7) scale(1.083 1)" font-size="9" fill="#d3d8df">16:00</text><text transform="translate(39.8 381.9) scale(1.016 1)" font-size="9" fill="#d3d8df">6 s</text><text transform="translate(39.8 417.6) scale(1.016 1)" font-size="9" fill="#d3d8df">4 s</text><text transform="translate(39.8 452.3) scale(1.016 1)" font-size="9" fill="#d3d8df">2 s</text><text transform="translate(33 487.7) scale(0.974 1)" font-size="9" fill="#d3d8df">0 ms</text><text transform="translate(27 431.8) rotate(-90)" text-anchor="middle" font-size="9.05" letter-spacing="0.1" fill="#e3e7ec">Page Load Times</text></g>
<circle cx="23.9" cy="515.4" r="3.9" fill="#8fdcff"/>
<text transform="translate(31.6 519) scale(1.029 1)" font-size="9" fill="#cfd6de">First Contentful Paint</text>
<circle cx="129.6" cy="515.4" r="3.9" fill="#aed4ea"/>
<text transform="translate(137.7 519) scale(0.991 1)" font-size="9" fill="#cfd6de">Page Load End</text>
</svg></section>
<section class="panel" id="p3" style="left:903px;top:343px;width:889px;height:193px">
<h3 class="t" style="left:9.1px;top:8px;font-size:10.8px;line-height:12px;color:#a4bbcc;transform:scaleX(1.017);">Application Services - Latencies</h3>
<svg width="889" height="193" viewBox="903 343 889 193">
<circle cx="1163.8" cy="410.2" r="32.4" fill="#aad6ee"/>
<circle cx="1230.65" cy="410.2" r="32.4" fill="#94bcd8"/>
<circle cx="1297.5" cy="410.2" r="32.4" fill="#aad6ee"/>
<circle cx="1364.35" cy="410.2" r="32.4" fill="#5c88ac"/>
<circle cx="1431.2" cy="410.2" r="32.4" fill="#94bcd8"/>
<circle cx="1498.05" cy="410.2" r="32.4" fill="#17406c"/>
<defs><pattern id="dots" width="4.2" height="4.2" patternUnits="userSpaceOnUse" patternTransform="rotate(18)"><circle cx="1" cy="1" r="0.5" fill="#96c4e1"/></pattern><pattern id="dots2" width="2.2" height="2.2" patternUnits="userSpaceOnUse" patternTransform="rotate(30)"><circle cx="0.7" cy="0.7" r="0.45" fill="#d9743c"/></pattern></defs>
<circle cx="1197.1" cy="468.2" r="32.4" fill="#739ebf"/>
<circle cx="1263.95" cy="468.2" r="32.4" fill="#aad6ee"/>
<circle cx="1330.8" cy="468.2" r="32.4" fill="#94bcd8"/>
<circle cx="1397.65" cy="468.2" r="32.4" fill="#a6d2ea"/>
<circle cx="1397.65" cy="468.2" r="31.8" fill="url(#dots)"/>
<circle cx="1464.5" cy="468.2" r="32.4" fill="#a6d2ea"/>
<circle cx="1464.5" cy="468.2" r="31.8" fill="url(#dots)"/>
<circle cx="1531.35" cy="468.2" r="32.4" fill="#a4cce6"/>
</svg></section>
<section class="panel" id="p4" style="left:7px;top:575px;width:293px;height:194px">
<h3 class="t" style="left:9.2px;top:8px;font-size:10.8px;line-height:12px;color:#a4bbcc;transform:scaleX(0.989);">Nodes Ready</h3>
<svg width="293" height="194" viewBox="7 575 293 194">
<rect x="16" y="603.6" width="274.4" height="155.1" fill="#9aeeaa"/>
<text x="153.4" y="678.3" font-size="36.6" fill="#171c30" text-anchor="middle" stroke="#171c30" stroke-width="0.7">6</text>
<text transform="translate(122.5 711.9) scale(1.005 1)" font-size="21.2" fill="#171c30" stroke="#171c30" stroke-width="0.45">Nodes</text>
</svg></section>
<section class="panel" id="p5" style="left:306px;top:575px;width:293px;height:194px">
<h3 class="t" style="left:8.9px;top:8px;font-size:10.8px;line-height:12px;color:#a4bbcc;transform:scaleX(0.992);">Pods Running</h3>
<svg width="293" height="194" viewBox="306 575 293 194">
<text transform="translate(432.1 678.3) scale(0.973 1)" font-size="36.6" fill="#0e8a10" stroke="#0e8a10" stroke-width="0.9">43</text>
<text transform="translate(427.7 711.9) scale(1.014 1)" font-size="21.2" fill="#ffffff" stroke="#ffffff" stroke-width="0.45">Pods</text>
<path d="M398.1 585L404 594.8H392.2Z" fill="#9bb2c6" stroke="#9bb2c6" stroke-width="0.6" stroke-linejoin="round"/>
<path d="M398.1 588V591.7M398.1 592.8V594" stroke="#141c2e" stroke-width="1.2"/>
</svg></section>
<section class="panel" id="p6" style="left:604px;top:575px;width:591px;height:194px">
<h3 class="t" style="left:9px;top:8px;font-size:10.8px;line-height:12px;color:#a4bbcc;transform:scaleX(0.989);">CPUs Usage per Node</h3>
<svg width="591" height="194" viewBox="604 575 591 194">
<g><path d="M635.8 612H1177.8" stroke="#2a3a55" stroke-width="1"/><path d="M635.8 676.2H1177.8" stroke="#2a3a55" stroke-width="1"/><path d="M635.8 740.7H1177.8" stroke="#2a3a55" stroke-width="1"/><path d="M669.6 740.7V744" stroke="#2a3a55" stroke-width="1"/><path d="M714.4 740.7V744" stroke="#2a3a55" stroke-width="1"/><path d="M759.2 740.7V744" stroke="#2a3a55" stroke-width="1"/><path d="M804 740.7V744" stroke="#2a3a55" stroke-width="1"/><path d="M848.8 740.7V744" stroke="#2a3a55" stroke-width="1"/><path d="M893.6 740.7V744" stroke="#2a3a55" stroke-width="1"/><path d="M938.4 740.7V744" stroke="#2a3a55" stroke-width="1"/><path d="M983.2 740.7V744" stroke="#2a3a55" stroke-width="1"/><path d="M1028 740.7V744" stroke="#2a3a55" stroke-width="1"/><path d="M1072.8 740.7V744" stroke="#2a3a55" stroke-width="1"/><path d="M1117.6 740.7V744" stroke="#2a3a55" stroke-width="1"/><path d="M1162.4 740.7V744" stroke="#2a3a55" stroke-width="1"/></g>
<g><polyline points="640.4,722.95 641.02,723.1 641.64,722.64 642.26,722.26 642.88,722.07 643.5,722.42 644.12,722.13 644.74,721.92 645.36,722.45 645.98,722.54 646.6,722.7 647.22,722.02 647.84,722.25 648.46,722.27 649.08,721.77 649.7,722.38 650.32,722.43 650.94,723.16 651.56,722.54 652.18,722.3 652.8,722.73 653.42,722.46 654.04,722.65 654.66,722.24 655.28,722.36 655.9,722.67 656.52,722.62 657.14,722.41 657.76,721.94 658.38,722.38 659,722.34 659.62,722.56 660.24,722.43 660.86,722.71 661.48,722.36 662.1,722.38 662.72,722.55 663.34,721.97 663.96,722.09 664.58,722.08 665.2,722.95 665.82,722.4 666.44,722.55 667.06,722.57 667.68,722.25 668.3,721.75 668.92,722.53 669.54,722.2 670.16,722.53 670.78,721.89 671.4,722.06 672.02,722.69 672.64,722.88 673.26,721.96 673.88,721.77 674.5,722.18 675.12,722.53 675.74,722.4 676.36,722.43 676.98,721.98 677.6,722.44 678.22,722.72 678.84,722.23 679.46,721.78 680.08,721.93 680.7,722.49 681.32,721.73 681.94,722.15 682.56,721.92 683.18,722.18 683.8,722.19 684.42,722.28 685.04,722.82 685.66,722.55 686.28,722.82 686.9,722.35 687.52,722.14 688.14,722.4 688.76,721.33 689.38,722.09 690,722.31 690.62,721.87 691.24,722.38 691.86,722.12 692.48,721.4 693.1,722.05 693.72,721.91 694.34,722.04 694.96,722.19 695.58,722.72 696.2,722.42 696.82,722.31 697.44,722.44 698.06,721.69 698.68,722.61 699.3,721.99 699.92,722.39 700.54,721.92 701.16,721.88 701.78,722.08 702.4,722.92 703.02,722.67 703.64,722.16 704.26,722.17 704.88,721.87 705.5,722.2 706.12,722.08 706.74,722.51 707.36,721.87 707.98,722.1 708.6,721.96 709.22,721.98 709.84,722.49 710.46,722.38 711.08,722.52 711.7,722.76 712.32,722.79 712.94,721.92 713.56,722.41 714.18,721.71 714.8,722.16 715.42,722.94 716.04,722.36 716.66,722.18 717.28,722.34 717.9,722.31 718.52,722.31 719.14,722.04 719.76,722.63 720.38,722.68 721,722.3 721.62,722.41 722.24,722.55 722.86,722.71 723.48,722.52 724.1,722.59 724.72,722.27 725.34,721.92 725.96,722.05 726.58,722.61 727.2,722.7 727.82,722.43 728.44,722.13 729.06,722.37 729.68,722.9 730.3,722.89 730.92,722.18 731.54,722.26 732.16,721.78 732.78,721.8 733.4,722.27 734.02,722.3 734.64,722.64 735.26,722.81 735.88,722.69 736.5,722.84 737.12,722.22 737.74,721.89 738.36,722.39 738.98,723.26 739.6,722.62 740.22,721.96 740.84,722.32 741.46,722.8 742.08,722.04 742.7,722.53 743.32,722.13 743.94,722.71 744.56,722.66 745.18,722.48 745.8,723.04 746.42,722.3 747.04,722.06 747.66,722.9 748.28,722.11 748.9,723.03 749.52,722.43 750.14,721.96 750.76,722.23 751.38,722.33 752,722.38 752.62,722.25 753.24,722.67 753.86,721.56 754.48,721.96 755.1,722.14 755.72,722.9 756.34,721.72 756.96,722.07 757.58,721.85 758.2,721.98 758.82,722.46 759.44,722.48 760.06,722.84 760.68,722.2 761.3,722.37 761.92,722.73 762.54,722.7 763.16,722.26 763.78,722.69 764.4,722.05 765.02,722.88 765.64,722.47 766.26,722.29 766.88,722.39 767.5,722.62 768.12,722.97 768.74,722.38 769.36,722.19 769.98,722.48 770.6,722.03 771.22,721.65 771.84,722.46 772.46,722.2 773.08,722.67 773.7,722.02 774.32,721.23 774.94,722.18 775.56,722.33 776.18,722.87 776.8,722.6 777.42,722.47 778.04,722.54 778.66,722.22 779.28,722.31 779.9,721.83 780.52,722.39 781.14,722.04 781.76,722.09 782.38,722.5 783,722.66 783.62,722.02 784.24,722.95 784.86,722.22 785.48,722.58 786.1,722.69 786.72,722.46 787.34,722.39 787.96,722.95 788.58,722.74 789.2,722.54 789.82,721.71 790.44,721.92 791.06,722.63 791.68,722.43 792.3,721.99 792.92,722.01 793.54,722.14 794.16,722.51 794.78,722.48 795.4,722.68 796.02,722.09 796.64,722.6 797.26,722.19 797.88,722.17 798.5,722.88 799.12,722.44 799.74,722.28 800.36,722.22 800.98,722.15 801.6,722.82 802.22,722.88 802.84,722.67 803.46,722.44 804.08,722.69 804.7,722.35 805.32,722.47 805.94,722.47 806.56,722.37 807.18,722.89 807.8,723.03 808.42,722.91 809.04,721.75 809.66,722.83 810.28,722.65 810.9,722.21 811.52,722.27 812.14,722.69 812.76,722.79 813.38,722.7 814,722.43 814.62,722.34 815.24,722.6 815.86,722.33 816.48,721.99 817.1,722.02 817.72,722.2 818.34,722.4 818.96,723.11 819.58,721.98 820.2,722.4 820.82,722.29 821.44,722.4 822.06,722.79 822.68,722.83 823.3,722.35 823.92,722.12 824.54,721.79 825.16,722.17 825.78,721.21 826.4,720.79 827.02,721.04 827.64,721.1 828.26,721 828.88,721.22 829.5,720.84 830.12,720.52 830.74,720.33 831.36,721.03 831.98,720.72 832.6,720.68 833.22,721.07 833.84,720.58 834.46,721.38 835.08,721.15 835.7,720.69 836.32,720.56 836.94,721.13 837.56,720.45 838.18,720.51 838.8,720.74 839.42,720.86 840.04,720.82 840.66,720.94 841.28,720.7 841.9,720.74 842.52,721.23 843.14,721.11 843.76,720.71 844.38,721.38 845,720.22 845.62,720.71 846.24,721.02 846.86,721.18 847.48,720.92 848.1,720.69 848.72,720.98 849.34,720.77 849.96,720.96 850.58,719.83 851.2,720.74 851.82,720.51 852.44,721.07 853.06,721.12 853.68,721.12 854.3,720.72 854.92,720.94 855.54,720.71 856.16,720.86 856.78,720.76 857.4,720.49 858.02,721.43 858.64,721.18 859.26,720.16 859.88,720.98 860.5,720.35 861.12,720.63 861.74,720.56 862.36,720.57 862.98,720.84 863.6,720.69 864.22,720.27 864.84,720.69 865.46,720.91 866.08,721.44 866.7,720.78 867.32,720.38 867.94,720.58 868.56,720.99 869.18,720.53 869.8,720.49 870.42,720.93 871.04,720.82 871.66,720.88 872.28,720.6 872.9,720.47 873.52,720.62 874.14,720.71 874.76,720.67 875.38,720.92 876,721.02 876.62,721.04 877.24,721.01 877.86,720.53 878.48,720.35 879.1,720.99 879.72,720.84 880.34,720.85 880.96,720.4 881.58,720.65 882.2,720.55 882.82,720.45 883.44,720.51 884.06,720.22 884.68,720.71 885.3,721.19 885.92,720.63 886.54,720.8 887.16,720.42 887.78,720.96 888.4,721.48 889.02,720.51 889.64,720.66 890.26,721.27 890.88,721.02 891.5,720.88 892.12,720.1 892.74,720.61 893.36,721.08 893.98,721.36 894.6,721.14 895.22,720.66 895.84,720.53 896.46,720.11 897.08,720.29 897.7,721.09 898.32,720.82 898.94,720.33 899.56,721.17 900.18,720.29 900.8,721.14 901.42,720.75 902.04,720.91 902.66,721.06 903.28,720.94 903.9,721.27 904.52,720.9 905.14,720.71 905.76,720.55 906.38,720.24 907,720.45 907.62,721.07 908.24,721.14 908.86,721.36 909.48,721.87 910.1,721.26 910.72,721.07 911.34,720.39 911.96,720.63 912.58,721.54 913.2,721.13 913.82,720.82 914.44,720.91 915.06,720.16 915.68,720.38 916.3,720.26 916.92,719.94 917.54,720.9 918.16,721.16 918.78,720.81 919.4,720.92 920.02,720.47 920.64,720.89 921.26,721.09 921.88,721.39 922.5,721.47 923.12,721.1 923.74,720.82 924.36,720.51 924.98,720.53 925.6,720.96 926.22,721.03 926.84,720.85 927.46,721.39 928.08,721.15 928.7,720.87 929.32,720.75 929.94,720.82 930.56,720.47 931.18,720.39 931.8,720.84 932.42,720.6 933.04,720.67 933.66,721.2 934.28,720.81 934.9,721.26 935.52,720.89 936.14,721.35 936.76,721.07 937.38,720.24 938,721.12 938.62,720.79 939.24,720.11 939.86,720.7 940.48,720.83 941.1,720.36 941.72,720.5 942.34,720.93 942.96,721.32 943.58,721.3 944.2,721.33 944.82,721.3 945.44,720.03 946.06,720.39 946.68,720.78 947.3,719.86 947.92,720.88 948.54,721.13 949.16,720.59 949.78,720.63 950.4,720.44 951.02,720.72 951.64,720.77 952.26,720.79 952.88,720.44 953.5,720.86 954.12,720.69 954.74,721.11 955.36,720.97 955.98,720.31 956.6,720.2 957.22,720.7 957.84,720.61 958.46,720.93 959.08,721.11 959.7,720.87 960.32,720.22 960.94,720.27 961.56,720.89 962.18,720.45 962.8,721.12 963.42,720.83 964.04,720.99 964.66,720.53 965.28,720.71 965.9,719.75 966.52,720.52 967.14,720.94 967.76,720.51 968.38,720.45 969,720.71 969.62,720.8 970.24,720.52 970.86,720.98 971.48,720.26 972.1,721.08 972.72,720.37 973.34,720.42 973.96,721.19 974.58,720.53 975.2,720.17 975.82,720.7 976.44,720.46 977.06,720.34 977.68,720.46 978.3,720.47 978.92,720.39 979.54,720.36 980.16,721.28 980.78,720.66 981.4,721.11 982.02,720.37 982.64,720.9 983.26,720.38 983.88,720.56 984.5,720.97 985.12,720.65 985.74,720.08 986.36,720.46 986.98,720.68 987.6,720.98 988.22,720.49 988.84,720.63 989.46,720.79 990.08,720.22 990.7,720.65 991.32,720.48 991.94,720.89 992.56,720.78 993.18,720.74 993.8,719.94 994.42,720.59 995.04,720.63 995.66,720.44 996.28,720.55 996.9,720.31 997.52,720.76 998.14,721.02 998.76,721.05 999.38,720.67 1000,721.36 1000.62,721.21 1001.24,720.55 1001.86,720.7 1002.48,720.21 1003.1,720.64 1003.72,721.02 1004.34,721.29 1004.96,720.75 1005.58,720.16 1006.2,722.39 1006.82,723.24 1007.44,722.8 1008.06,723.28 1008.68,723.15 1009.3,723.49 1009.92,723.08 1010.54,722.36 1011.16,722.78 1011.78,723.9 1012.4,722.6 1013.02,721.67 1013.64,723.47 1014.26,722.98 1014.88,722.36 1015.5,722.25 1016.12,721.76 1016.74,722.78 1017.36,722.71 1017.98,722.31 1018.6,722.33 1019.22,722.33 1019.84,723.08 1020.46,722.6 1021.08,723.29 1021.7,722.32 1022.32,722.24 1022.94,722.29 1023.56,722.27 1024.18,722.49 1024.8,723.09 1025.42,723.3 1026.04,722.2 1026.66,723.16 1027.28,722.76 1027.9,723.43 1028.52,722.68 1029.14,722.2 1029.76,722.91 1030.38,722.97 1031,722.45 1031.62,722.58 1032.24,722.66 1032.86,722.77 1033.48,721.78 1034.1,721.83 1034.72,722.47 1035.34,722.7 1035.96,722.36 1036.58,721.67 1037.2,723.09 1037.82,722.54 1038.44,722.07 1039.06,723.29 1039.68,723.3 1040.3,723.26 1040.92,723.15 1041.54,722.99 1042.16,722.19 1042.78,722.53 1043.4,722.76 1044.02,722.95 1044.64,722.91 1045.26,722.16 1045.88,722.21 1046.5,722.36 1047.12,722.45 1047.74,722.13 1048.36,721.6 1048.98,721.79 1049.6,722.59 1050.22,722.59 1050.84,722.89 1051.46,721.71 1052.08,722.21 1052.7,722.97 1053.32,721.69 1053.94,721.88 1054.56,721.62 1055.18,723.01 1055.8,722.7 1056.42,722.33 1057.04,722.62 1057.66,722.56 1058.28,723.04 1058.9,723.27 1059.52,723.19 1060.14,722.89 1060.76,723.04 1061.38,723.09 1062,723.28 1062.62,721.82 1063.24,722.62 1063.86,722.64 1064.48,722.69 1065.1,722.49 1065.72,722.54 1066.34,722.84 1066.96,722.75 1067.58,722.69 1068.2,722.08 1068.82,721.87 1069.44,722.08 1070.06,721.6 1070.68,722.14 1071.3,722.08 1071.92,721.6 1072.54,721.43 1073.16,722.13 1073.78,722.22 1074.4,723.61 1075.02,723.23 1075.64,722.34 1076.26,722.3 1076.88,722.03 1077.5,722.09 1078.12,722.32 1078.74,722.52 1079.36,722.27 1079.98,722.95 1080.6,722.99 1081.22,723.66 1081.84,722.16 1082.46,722.85 1083.08,722.46 1083.7,721.77 1084.32,722.28 1084.94,721.72 1085.56,722.41 1086.18,723.93 1086.8,723.52 1087.42,723.69 1088.04,723.42 1088.66,721.99 1089.28,722.68 1089.9,722.69 1090.52,722.83 1091.14,722.13 1091.76,721.51 1092.38,723.44 1093,723.36 1093.62,722.91 1094.24,722.42 1094.86,722.65 1095.48,721.99 1096.1,722.96 1096.72,722.75 1097.34,722.56 1097.96,722.38 1098.58,722.52 1099.2,722.65 1099.82,722.41 1100.44,723.04 1101.06,722.79 1101.68,722.59 1102.3,722.17 1102.92,723.12 1103.54,723.35 1104.16,723.1 1104.78,721.78 1105.4,722.26 1106.02,723.03 1106.64,722.7 1107.26,723.26 1107.88,722.51 1108.5,722.98 1109.12,722.94 1109.74,721.44 1110.36,722.17 1110.98,722.39 1111.6,722.25 1112.22,722.08 1112.84,723.29 1113.46,722.68 1114.08,723.01 1114.7,722.01 1115.32,721.44 1115.94,722.13 1116.56,722.71 1117.18,722.26 1117.8,722.8 1118.42,723.04 1119.04,722.46 1119.66,722.54 1120.28,722.22 1120.9,723.06 1121.52,723.58 1122.14,723.04 1122.76,722.44 1123.38,722.21 1124,722.38 1124.62,723 1125.24,722.3 1125.86,723.28 1126.48,722.12 1127.1,722.5 1127.72,723.24 1128.34,723.62 1128.96,722.6 1129.58,723 1130.2,723.94 1130.82,723.45 1131.44,721.67 1132.06,722.56 1132.68,723.78 1133.3,722.25 1133.92,722.99 1134.54,721.63 1135.16,723.2 1135.78,722.3 1136.4,722.94 1137.02,723.12 1137.64,721.31 1138.26,721.63 1138.88,722.57 1139.5,721.83 1140.12,722.44 1140.74,722.09 1141.36,723.17 1141.98,722.46 1142.6,722.11 1143.22,722.82 1143.84,723.26 1144.46,722.65 1145.08,722.75 1145.7,722.88 1146.32,722.41 1146.94,721.97 1147.56,722.74 1148.18,722.45 1148.8,721.89 1149.42,722.88 1150.04,722.87 1150.66,722.73 1151.28,722.25 1151.9,722.42 1152.52,722.87 1153.14,722.9 1153.76,722.25 1154.38,722.08 1155,722.67 1155.62,722.71 1156.24,723.05 1156.86,722.11 1157.48,722.96 1158.1,723.55 1158.72,723.27 1159.34,722.8 1159.96,723.09 1160.58,722.06 1161.2,722.27 1161.82,723.56 1162.44,721.98 1163.06,721.9 1163.68,722.87 1164.3,722.33 1164.92,722.26 1165.54,721.97 1166.16,723.32 1166.78,722.44 1167.4,722.43 1168.02,721.66 1168.64,722.8 1169.26,722.63 1169.88,722.86 1170.5,723.44 1171.12,722.84 1171.74,722.05 1172.36,721.98 1172.98,722.52 1173.6,723.24 1174.22,722.13 1174.84,722.38" fill="none" stroke="#1a5a96" stroke-width="0.8" stroke-linejoin="round"/><polyline points="640.4,710 641.02,708.48 641.64,708.81 642.26,708.73 642.88,709.13 643.5,707.86 644.12,708.2 644.74,708.07 645.36,707.85 645.98,707.94 646.6,708.16 647.22,716 647.84,716 648.46,716 649.08,728.5 649.7,726.82 650.32,729.12 650.94,728.63 651.56,728.32 652.18,728.86 652.8,728.95 653.42,728.86 654.04,728.3 654.66,728.81 655.28,727.88 655.9,729.48 656.52,728.18 657.14,728.55 657.76,728.76 658.38,728.92 659,728.68 659.62,729.07 660.24,726.67 660.86,728.23 661.48,728.51 662.1,728.4 662.72,729.56 663.34,728.29 663.96,728.57 664.58,727.45 665.2,728.62 665.82,727.71 666.44,727.56 667.06,729.89 667.68,729.36 668.3,728.83 668.92,728.83 669.54,727.86 670.16,727.89 670.78,728.8 671.4,727.44 672.02,728.61 672.64,727.63 673.26,728.56 673.88,728 674.5,729.63 675.12,729.5 675.74,728.55 676.36,727.52 676.98,727.99 677.6,728.52 678.22,728.06 678.84,728.75 679.46,729.31 680.08,728.79 680.7,728.45 681.32,729.13 681.94,728.61 682.56,729.2 683.18,728.61 683.8,729.67 684.42,728.72 685.04,728.06 685.66,728.63 686.28,728.3 686.9,728.05 687.52,728.49 688.14,729.12 688.76,727.47 689.38,728.43 690,728.56 690.62,728.59 691.24,729.17 691.86,728 692.48,728.97 693.1,728.62 693.72,728.76 694.34,728.58 694.96,728.48 695.58,728.34 696.2,728.89 696.82,730.03 697.44,729.62 698.06,729.42 698.68,729.2 699.3,728.52 699.92,729.05 700.54,730.05 701.16,728.21 701.78,729.13 702.4,729.42 703.02,729.04 703.64,729.27 704.26,729.69 704.88,730.27 705.5,729.84 706.12,729.97 706.74,729.19 707.36,729.33 707.98,728.97 708.6,728.97 709.22,728.51 709.84,729.11 710.46,729.7 711.08,728.85 711.7,728.93 712.32,729.17 712.94,728.85 713.56,729.35 714.18,729.03 714.8,728.11 715.42,728.01 716.04,729.05 716.66,729.21 717.28,729.52 717.9,729.07 718.52,728.95 719.14,727.85 719.76,729.43 720.38,728.34 721,729.32 721.62,728.19 722.24,728.26 722.86,728.76 723.48,728.51 724.1,728.3 724.72,729.22 725.34,729.28 725.96,729.12 726.58,728.64 727.2,728.25 727.82,728.39 728.44,728.38 729.06,728.69 729.68,729.23 730.3,728.77 730.92,728.3 731.54,728.31 732.16,729.46 732.78,729.02 733.4,728.97 734.02,728.99 734.64,729.19 735.26,728.95 735.88,729.53 736.5,729.43 737.12,727.21 737.74,728.39 738.36,730.49 738.98,728.36 739.6,728.78 740.22,729.44 740.84,728.92 741.46,729.63 742.08,728.2 742.7,727.92 743.32,728.51 743.94,728.29 744.56,728.05 745.18,728.99 745.8,729 746.42,728.84 747.04,728.56 747.66,728.91 748.28,728.75 748.9,728.35 749.52,729.02 750.14,729.07 750.76,728.9 751.38,729.24 752,728.22 752.62,728.6 753.24,728.44 753.86,729.53 754.48,729.25 755.1,730.16 755.72,730.02 756.34,728.82 756.96,728.15 757.58,728.96 758.2,728.66 758.82,728.68 759.44,728.14 760.06,729.03 760.68,728.96 761.3,729.07 761.92,729.04 762.54,728.31 763.16,727.36 763.78,728.35 764.4,728.33 765.02,728.39 765.64,729.29 766.26,728.84 766.88,729.71 767.5,729.09 768.12,729.27 768.74,729.2 769.36,729.36 769.98,728.16 770.6,729.33 771.22,728.97 771.84,728.25 772.46,729.06 773.08,729.06 773.7,729.62 774.32,729.4 774.94,729.14 775.56,727.89 776.18,729.62 776.8,729.86 777.42,729.48 778.04,729.21 778.66,729.61 779.28,728.44 779.9,729.15 780.52,728.88 781.14,728.22 781.76,728.9 782.38,729.03 783,729.87 783.62,729.58 784.24,727.99 784.86,727.46 785.48,728.48 786.1,728.61 786.72,728.2 787.34,727.81 787.96,728.48 788.58,728.04 789.2,728.23 789.82,729.2 790.44,729.02 791.06,728.39 791.68,728.04 792.3,728.54 792.92,729.79 793.54,728.69 794.16,729.82 794.78,728.53 795.4,728.62 796.02,729.18 796.64,728.41 797.26,728.76 797.88,727.98 798.5,729.03 799.12,729.54 799.74,728.56 800.36,728.86 800.98,728.57 801.6,727.46 802.22,730.18 802.84,729.45 803.46,729.43 804.08,729.16 804.7,728.98 805.32,730.26 805.94,728 806.56,728.45 807.18,728.48 807.8,728.61 808.42,729.18 809.04,728.44 809.66,727.93 810.28,727.95 810.9,728.9 811.52,729.39 812.14,729.4 812.76,729.88 813.38,728.7 814,729.38 814.62,729.33 815.24,728.81 815.86,728.35 816.48,729.24 817.1,728.48 817.72,728.56 818.34,728.17 818.96,729.72 819.58,728.95 820.2,728.53 820.82,728.6 821.44,728.62 822.06,728.82 822.68,727.78 823.3,727.9 823.92,728.92 824.54,729.47 825.16,716 825.78,716 826.4,716 827.02,724.56 827.64,725.52 828.26,725.25 828.88,726.37 829.5,725.95 830.12,725.97 830.74,725.11 831.36,725.91 831.98,724.81 832.6,725.89 833.22,726.8 833.84,725.43 834.46,726.4 835.08,726.92 835.7,726.06 836.32,726.68 836.94,726.19 837.56,725.74 838.18,724.74 838.8,725.1 839.42,724.93 840.04,727.21 840.66,726.4 841.28,725.97 841.9,725.18 842.52,726.87 843.14,725.47 843.76,726.79 844.38,726.81 845,726.2 845.62,725.64 846.24,725.9 846.86,725.18 847.48,726.23 848.1,727.06 848.72,726.75 849.34,726.78 849.96,725.74 850.58,726.13 851.2,725.41 851.82,725.61 852.44,726.36 853.06,727.58 853.68,726.36 854.3,726.09 854.92,724.88 855.54,725.88 856.16,725.43 856.78,725.04 857.4,724.91 858.02,725.87 858.64,725.73 859.26,726.35 859.88,725.93 860.5,725.98 861.12,726.88 861.74,726.66 862.36,726.59 862.98,727.01 863.6,726.33 864.22,725.47 864.84,725.41 865.46,724.94 866.08,726 866.7,725.76 867.32,726.26 867.94,726.55 868.56,725.62 869.18,726.03 869.8,726.77 870.42,726.2 871.04,726.6 871.66,726 872.28,725.43 872.9,725.75 873.52,724.81 874.14,726.19 874.76,725.73 875.38,726.76 876,725.41 876.62,725.96 877.24,726.2 877.86,725.92 878.48,726.21 879.1,725.59 879.72,725.27 880.34,725 880.96,725.46 881.58,725.4 882.2,726.02 882.82,725.78 883.44,725.56 884.06,725.47 884.68,724.74 885.3,725.53 885.92,726.16 886.54,725.22 887.16,725.69 887.78,726.35 888.4,725.65 889.02,726.04 889.64,725.75 890.26,727.44 890.88,727.13 891.5,726.94 892.12,725.77 892.74,726.35 893.36,725.97 893.98,726.21 894.6,725.69 895.22,726.03 895.84,725.54 896.46,726.09 897.08,727.09 897.7,725.38 898.32,725.08 898.94,726.12 899.56,726.51 900.18,725.87 900.8,726.33 901.42,726.33 902.04,726.4 902.66,726.92 903.28,725.79 903.9,726.36 904.52,726.19 905.14,725.62 905.76,726.23 906.38,725.25 907,724.95 907.62,726.44 908.24,725.41 908.86,726.91 909.48,726.82 910.1,725.85 910.72,725.43 911.34,724.53 911.96,725.66 912.58,724.93 913.2,726.74 913.82,725.12 914.44,725.86 915.06,724.3 915.68,725.44 916.3,726.7 916.92,725.87 917.54,725.47 918.16,725.6 918.78,726.15 919.4,726.57 920.02,725.97 920.64,724.74 921.26,725.93 921.88,726.58 922.5,727.52 923.12,726.4 923.74,726.18 924.36,725.7 924.98,726.4 925.6,727.16 926.22,725.62 926.84,725.97 927.46,725.35 928.08,725.45 928.7,725.77 929.32,726.25 929.94,725.53 930.56,725.72 931.18,726.78 931.8,726.46 932.42,726.52 933.04,726.34 933.66,725.95 934.28,726.24 934.9,726.36 935.52,726.07 936.14,726.64 936.76,726.13 937.38,726.58 938,726.12 938.62,726.47 939.24,725.68 939.86,725.59 940.48,725.2 941.1,726.58 941.72,726.42 942.34,726.21 942.96,726.42 943.58,725.57 944.2,725.97 944.82,725.68 945.44,724.79 946.06,725.59 946.68,725.38 947.3,726.75 947.92,725.69 948.54,725.55 949.16,726.51 949.78,726.09 950.4,725.2 951.02,725.98 951.64,725.53 952.26,726.95 952.88,725.54 953.5,725.45 954.12,724.2 954.74,725.22 955.36,726.99 955.98,726.12 956.6,725.43 957.22,726.06 957.84,725.83 958.46,725.94 959.08,727.51 959.7,727.54 960.32,727.29 960.94,727.28 961.56,725.69 962.18,724.73 962.8,726.2 963.42,726.28 964.04,726.08 964.66,725.94 965.28,726.43 965.9,726.43 966.52,726.24 967.14,726.35 967.76,725.94 968.38,725.76 969,726.81 969.62,726.01 970.24,727.22 970.86,726.64 971.48,726.16 972.1,726.72 972.72,725.84 973.34,725.85 973.96,725.76 974.58,725.95 975.2,726.41 975.82,727.36 976.44,726.59 977.06,725.46 977.68,725.38 978.3,724.76 978.92,726.2 979.54,726.58 980.16,726.32 980.78,726.28 981.4,726.38 982.02,726.34 982.64,726.46 983.26,726.23 983.88,725.44 984.5,726.46 985.12,726.91 985.74,725.17 986.36,725.69 986.98,725.24 987.6,726.16 988.22,725.85 988.84,726.84 989.46,726.85 990.08,725.88 990.7,725.68 991.32,725.57 991.94,726.27 992.56,725.48 993.18,726.16 993.8,725.17 994.42,726.47 995.04,726.39 995.66,725.36 996.28,725.39 996.9,725.96 997.52,726.16 998.14,724.27 998.76,725.78 999.38,726.88 1000,725.9 1000.62,725.15 1001.24,726.58 1001.86,726.26 1002.48,726.17 1003.1,726.41 1003.72,725.32 1004.34,725.45 1004.96,725.19 1005.58,725.14 1006.2,716.96 1006.82,716.44 1007.44,718.52 1008.06,718.03 1008.68,718.2 1009.3,716.2 1009.92,716.98 1010.54,717.19 1011.16,717.49 1011.78,717.78 1012.4,716.82 1013.02,716.53 1013.64,718 1014.26,719.36 1014.88,719.49 1015.5,717.58 1016.12,716.79 1016.74,717.43 1017.36,717.79 1017.98,718.92 1018.6,717.51 1019.22,716.81 1019.84,718.13 1020.46,716.95 1021.08,716.6 1021.7,717.67 1022.32,717.29 1022.94,716.51 1023.56,717 1024.18,716.98 1024.8,717.13 1025.42,716.74 1026.04,717.74 1026.66,717.17 1027.28,716.86 1027.9,718.15 1028.52,716.79 1029.14,717.89 1029.76,717.97 1030.38,717.27 1031,717.54 1031.62,716.21 1032.24,717.36 1032.86,716.54 1033.48,716.52 1034.1,717.43 1034.72,716.8 1035.34,717.38 1035.96,717.73 1036.58,718.31 1037.2,717.9 1037.82,718.34 1038.44,716.97 1039.06,717.01 1039.68,717.84 1040.3,718.45 1040.92,717.97 1041.54,717.08 1042.16,716.46 1042.78,716.43 1043.4,718.11 1044.02,716.74 1044.64,717.07 1045.26,717.84 1045.88,717.84 1046.5,716.91 1047.12,718.91 1047.74,717.83 1048.36,717.71 1048.98,718.12 1049.6,717.29 1050.22,717.94 1050.84,717.39 1051.46,716.67 1052.08,716.48 1052.7,717.52 1053.32,717.5 1053.94,717.29 1054.56,717 1055.18,717.12 1055.8,717.98 1056.42,718.4 1057.04,717.39 1057.66,717.6 1058.28,715.93 1058.9,716.17 1059.52,716.58 1060.14,716.5 1060.76,717.78 1061.38,715.79 1062,717.47 1062.62,717.96 1063.24,719.29 1063.86,717.38 1064.48,717.76 1065.1,718.67 1065.72,718.41 1066.34,716.84 1066.96,717 1067.58,716.39 1068.2,717.25 1068.82,717.92 1069.44,718.6 1070.06,718.09 1070.68,718.26 1071.3,718.42 1071.92,716.94 1072.54,717.85 1073.16,718.27 1073.78,717.43 1074.4,716.63 1075.02,717.37 1075.64,717.52 1076.26,717.98 1076.88,716.07 1077.5,716.83 1078.12,718.91 1078.74,718.74 1079.36,717.55 1079.98,717.19 1080.6,717.14 1081.22,716.57 1081.84,716.87 1082.46,717.26 1083.08,716.4 1083.7,717.14 1084.32,717.56 1084.94,716.4 1085.56,716.83 1086.18,716.04 1086.8,717.16 1087.42,717.53 1088.04,717.01 1088.66,717.38 1089.28,717.84 1089.9,718.04 1090.52,716.45 1091.14,716.95 1091.76,716.15 1092.38,715.63 1093,717.86 1093.62,718.1 1094.24,718.56 1094.86,718.25 1095.48,717.16 1096.1,717.52 1096.72,716.99 1097.34,718.41 1097.96,715.71 1098.58,717.38 1099.2,716.95 1099.82,717.89 1100.44,718.46 1101.06,717.1 1101.68,718.44 1102.3,718.48 1102.92,716.35 1103.54,718.66 1104.16,716.7 1104.78,716.17 1105.4,717.91 1106.02,716.92 1106.64,717.48 1107.26,717.38 1107.88,716.58 1108.5,718.52 1109.12,718.82 1109.74,717.75 1110.36,718.74 1110.98,717.66 1111.6,717.66 1112.22,717.21 1112.84,716.3 1113.46,716.9 1114.08,716.53 1114.7,717.56 1115.32,717.55 1115.94,716.97 1116.56,718.34 1117.18,717.89 1117.8,718.96 1118.42,717.4 1119.04,717.09 1119.66,716.75 1120.28,717.46 1120.9,717.28 1121.52,717.41 1122.14,718.81 1122.76,718.32 1123.38,717.09 1124,717.66 1124.62,717.24 1125.24,717.12 1125.86,717.17 1126.48,717.41 1127.1,717.92 1127.72,718.32 1128.34,717.62 1128.96,716.79 1129.58,717.28 1130.2,717.22 1130.82,717.15 1131.44,716.38 1132.06,717.09 1132.68,715.88 1133.3,718.11 1133.92,718.13 1134.54,718.15 1135.16,716.8 1135.78,717.47 1136.4,718.44 1137.02,717.44 1137.64,716.55 1138.26,717.14 1138.88,715.53 1139.5,717.78 1140.12,717.83 1140.74,716.38 1141.36,717.76 1141.98,718.39 1142.6,718.11 1143.22,718.08 1143.84,718.77 1144.46,717.85 1145.08,718.62 1145.7,717.48 1146.32,716.87 1146.94,717.04 1147.56,716.49 1148.18,717.53 1148.8,716.87 1149.42,717.59 1150.04,717.69 1150.66,718.77 1151.28,719.09 1151.9,717.3 1152.52,717.24 1153.14,717.24 1153.76,716.87 1154.38,718.74 1155,718.66 1155.62,717.48 1156.24,716.31 1156.86,716.67 1157.48,717.28 1158.1,718.64 1158.72,716.62 1159.34,718.41 1159.96,716.45 1160.58,717.49 1161.2,716.49 1161.82,716.88 1162.44,715.38 1163.06,717.48 1163.68,717.44 1164.3,716.57 1164.92,715.53 1165.54,716.97 1166.16,717.29 1166.78,716.21 1167.4,717.55 1168.02,717.33 1168.64,716.47 1169.26,716.57 1169.88,715.26 1170.5,717.55 1171.12,718.21 1171.74,717.4 1172.36,716.39 1172.98,716.29 1173.6,716.93 1174.22,716.59 1174.84,717.46" fill="none" stroke="#b4e68c" stroke-width="0.9" stroke-linejoin="round"/><polyline points="640.4,726.06 641.02,726.76 641.64,725.59 642.26,726.51 642.88,725.95 643.5,725.83 644.12,727.11 644.74,726.32 645.36,726.04 645.98,726.45 646.6,726.77 647.22,717 647.84,717 648.46,717 649.08,724.88 649.7,724.87 650.32,724.34 650.94,724.12 651.56,724.01 652.18,724.82 652.8,725.02 653.42,724.97 654.04,725.2 654.66,724.4 655.28,724.99 655.9,725.3 656.52,725.67 657.14,724.79 657.76,724.88 658.38,723.93 659,724.64 659.62,723.77 660.24,724.06 660.86,725.63 661.48,723.97 662.1,725.43 662.72,725.44 663.34,725.06 663.96,725.45 664.58,725.57 665.2,725.9 665.82,725.2 666.44,724.85 667.06,724.77 667.68,724.52 668.3,725.04 668.92,724.7 669.54,725.74 670.16,724.19 670.78,724.34 671.4,724.46 672.02,723.8 672.64,726.06 673.26,723.93 673.88,724.78 674.5,724.8 675.12,726.11 675.74,724.19 676.36,725.64 676.98,724.85 677.6,725.04 678.22,724.76 678.84,725.5 679.46,724.58 680.08,725.03 680.7,725.38 681.32,726.34 681.94,723.98 682.56,725.87 683.18,725.9 683.8,725.05 684.42,725.35 685.04,724.95 685.66,726.14 686.28,725.51 686.9,725.13 687.52,725.05 688.14,725.05 688.76,725.06 689.38,724.65 690,726.32 690.62,724.28 691.24,722.85 691.86,724.66 692.48,725 693.1,725.38 693.72,725.11 694.34,725.09 694.96,725.38 695.58,725.82 696.2,725.05 696.82,724.95 697.44,726.31 698.06,725.74 698.68,724.72 699.3,726.5 699.92,725.93 700.54,724.99 701.16,724.45 701.78,725.23 702.4,724.71 703.02,724.47 703.64,724.28 704.26,724.71 704.88,725.77 705.5,725.05 706.12,724.3 706.74,725.42 707.36,725.28 707.98,725.72 708.6,726.03 709.22,725.26 709.84,725.13 710.46,725.16 711.08,724.51 711.7,725.46 712.32,726.08 712.94,725.48 713.56,725.11 714.18,725.03 714.8,724.7 715.42,724.62 716.04,724.84 716.66,724.62 717.28,724.82 717.9,724.18 718.52,725.21 719.14,725.23 719.76,724.51 720.38,723.68 721,724.89 721.62,725.8 722.24,724.88 722.86,724.85 723.48,724.79 724.1,725.51 724.72,724.71 725.34,725.69 725.96,725.12 726.58,725.74 727.2,725.33 727.82,725.09 728.44,724.29 729.06,724.61 729.68,724.92 730.3,725.54 730.92,725.42 731.54,724.82 732.16,725.37 732.78,725.83 733.4,725.24 734.02,724.94 734.64,724.91 735.26,725.63 735.88,725.61 736.5,724.72 737.12,725.33 737.74,724.94 738.36,724.7 738.98,725.84 739.6,725.82 740.22,724.89 740.84,725.19 741.46,725.5 742.08,724.88 742.7,725.06 743.32,725.57 743.94,724.2 744.56,725.2 745.18,725.64 745.8,725.59 746.42,724.47 747.04,725.25 747.66,724.69 748.28,725.44 748.9,725.61 749.52,725.41 750.14,724.78 750.76,724.76 751.38,725.62 752,724.75 752.62,725.41 753.24,725.55 753.86,725.1 754.48,726.62 755.1,725.53 755.72,726.55 756.34,724.26 756.96,723.67 757.58,725.48 758.2,725.64 758.82,725.1 759.44,725.15 760.06,724.05 760.68,724.59 761.3,724.46 761.92,724.92 762.54,725.68 763.16,725.33 763.78,725.45 764.4,724.83 765.02,724.87 765.64,725.2 766.26,725.03 766.88,725.92 767.5,724.82 768.12,726.26 768.74,724.82 769.36,725.76 769.98,724.85 770.6,726.12 771.22,725.47 771.84,725.49 772.46,725.71 773.08,724.92 773.7,724.52 774.32,723.85 774.94,725.66 775.56,724.87 776.18,724.78 776.8,725.1 777.42,726.37 778.04,724.4 778.66,725.19 779.28,724.96 779.9,725.47 780.52,724.17 781.14,724.76 781.76,725.62 782.38,726.22 783,726.36 783.62,724.92 784.24,725.18 784.86,725.13 785.48,724.36 786.1,724.17 786.72,725.45 787.34,725.4 787.96,725.15 788.58,725.92 789.2,724.74 789.82,725.42 790.44,725.25 791.06,725.17 791.68,725.49 792.3,725.36 792.92,725.39 793.54,725.4 794.16,726.4 794.78,725.25 795.4,725.82 796.02,725.69 796.64,725.09 797.26,725.66 797.88,724.78 798.5,725.81 799.12,724.84 799.74,724.83 800.36,725.32 800.98,725.72 801.6,725.85 802.22,725.87 802.84,725.21 803.46,724.63 804.08,725.42 804.7,725.42 805.32,724.67 805.94,725.68 806.56,725.42 807.18,724.67 807.8,725.36 808.42,724.44 809.04,724.52 809.66,725.31 810.28,724.29 810.9,725.04 811.52,724.36 812.14,725.47 812.76,724.82 813.38,725.23 814,724.31 814.62,724.81 815.24,725.69 815.86,725.57 816.48,724.17 817.1,725.55 817.72,725.81 818.34,725.1 818.96,726.03 819.58,724.73 820.2,725.05 820.82,725.84 821.44,726.11 822.06,726.15 822.68,724.73 823.3,724.04 823.92,725.2 824.54,724.34 825.16,724.95 825.78,715 826.4,715 827.02,715 827.64,721.95 828.26,721.6 828.88,721.55 829.5,721.33 830.12,721.7 830.74,721.69 831.36,721.81 831.98,721.31 832.6,722.6 833.22,721.89 833.84,722.41 834.46,722.48 835.08,721.17 835.7,720.42 836.32,722.04 836.94,721.38 837.56,721.52 838.18,721.35 838.8,721.55 839.42,720.8 840.04,721.3 840.66,721.18 841.28,721.43 841.9,720.08 842.52,721.71 843.14,721.74 843.76,720.51 844.38,720.86 845,721.39 845.62,721.86 846.24,721.57 846.86,722.34 847.48,721.68 848.1,720.94 848.72,720.98 849.34,721.84 849.96,721.2 850.58,721.94 851.2,722.2 851.82,721.99 852.44,722.21 853.06,721.54 853.68,721.5 854.3,721.15 854.92,721.06 855.54,720.47 856.16,720.96 856.78,720.75 857.4,720.49 858.02,721.39 858.64,721.75 859.26,721.34 859.88,722.29 860.5,722.22 861.12,722.27 861.74,721.29 862.36,720.56 862.98,721.65 863.6,721.71 864.22,721.98 864.84,721.85 865.46,722.33 866.08,721.49 866.7,721.9 867.32,721.04 867.94,720.02 868.56,720.94 869.18,722.29 869.8,720.65 870.42,721.94 871.04,721.18 871.66,721.2 872.28,721.47 872.9,721.62 873.52,720.94 874.14,721.46 874.76,721.76 875.38,722.05 876,721.16 876.62,722.36 877.24,722.82 877.86,723.21 878.48,721.04 879.1,721.51 879.72,720.39 880.34,721.5 880.96,721.83 881.58,720.88 882.2,720.42 882.82,721.4 883.44,721.86 884.06,721.1 884.68,721.26 885.3,719.94 885.92,720.76 886.54,721.44 887.16,721.58 887.78,722.47 888.4,721.01 889.02,720.05 889.64,721.48 890.26,721.14 890.88,721.6 891.5,721.95 892.12,721.95 892.74,722.46 893.36,722.5 893.98,720.7 894.6,721.3 895.22,722.66 895.84,721.49 896.46,722.08 897.08,721.58 897.7,721.26 898.32,722.4 898.94,722.31 899.56,721.51 900.18,722.05 900.8,720.82 901.42,720.93 902.04,721.93 902.66,721.61 903.28,720.88 903.9,721.65 904.52,721.73 905.14,722.32 905.76,722.24 906.38,721.48 907,721.21 907.62,721.36 908.24,721.33 908.86,722.34 909.48,722.62 910.1,722.54 910.72,721.94 911.34,721.44 911.96,722.03 912.58,721.4 913.2,721.62 913.82,720.52 914.44,721.05 915.06,722.27 915.68,721.04 916.3,720.51 916.92,721.2 917.54,722.44 918.16,722.56 918.78,721.5 919.4,721.21 920.02,721.38 920.64,720.92 921.26,721.4 921.88,721.3 922.5,720.57 923.12,720.97 923.74,721.24 924.36,720.93 924.98,720.71 925.6,721.89 926.22,722.71 926.84,721.57 927.46,721.26 928.08,721.75 928.7,721.41 929.32,721.01 929.94,722.24 930.56,721.02 931.18,720.97 931.8,720.99 932.42,720.87 933.04,721.23 933.66,721.79 934.28,722.42 934.9,722.08 935.52,721.64 936.14,720.78 936.76,721.32 937.38,720.9 938,721.32 938.62,722.05 939.24,721.73 939.86,721.42 940.48,721.03 941.1,721.39 941.72,721.55 942.34,720.95 942.96,721.09 943.58,721.95 944.2,720.59 944.82,721.05 945.44,720.71 946.06,722.27 946.68,722.02 947.3,721.91 947.92,721.82 948.54,721.74 949.16,721.72 949.78,720.59 950.4,721.47 951.02,721.85 951.64,720.71 952.26,721.84 952.88,721.97 953.5,720.68 954.12,721.05 954.74,721.23 955.36,721.13 955.98,721.66 956.6,720.77 957.22,721.22 957.84,721.58 958.46,721.95 959.08,721.62 959.7,721.38 960.32,721.89 960.94,720.38 961.56,721.84 962.18,721.38 962.8,720.73 963.42,721.09 964.04,720.32 964.66,720.04 965.28,721.01 965.9,720.94 966.52,721.83 967.14,721.03 967.76,720.63 968.38,720.75 969,722.38 969.62,721.69 970.24,721.17 970.86,720.84 971.48,720.71 972.1,721.24 972.72,721.71 973.34,722.23 973.96,722.33 974.58,721.83 975.2,721.17 975.82,720.92 976.44,720 977.06,720.59 977.68,721.57 978.3,721.31 978.92,721.68 979.54,720.73 980.16,721.88 980.78,721.75 981.4,721.58 982.02,721.76 982.64,720.21 983.26,720.91 983.88,720.84 984.5,722.46 985.12,721.58 985.74,721.21 986.36,721.95 986.98,720.96 987.6,722.25 988.22,721.23 988.84,721.41 989.46,720.93 990.08,721.87 990.7,720.27 991.32,721.67 991.94,721.04 992.56,721.44 993.18,720.8 993.8,721.5 994.42,721.61 995.04,721.88 995.66,721.76 996.28,721.93 996.9,722.18 997.52,721.4 998.14,720.77 998.76,720.59 999.38,721.73 1000,721.32 1000.62,722.1 1001.24,721.65 1001.86,720.92 1002.48,721.93 1003.1,722.75 1003.72,721.64 1004.34,720.96 1004.96,720.89 1005.58,721.91 1006.2,721.11 1006.82,721.1 1007.44,721.97 1008.06,721.6 1008.68,721.61 1009.3,721.09 1009.92,720.91 1010.54,721.51 1011.16,721.63 1011.78,722 1012.4,721.2 1013.02,721.72 1013.64,721.92 1014.26,721.65 1014.88,721.99 1015.5,722.41 1016.12,721.84 1016.74,721.63 1017.36,720.75 1017.98,721.61 1018.6,721.45 1019.22,721.24 1019.84,720.79 1020.46,721.82 1021.08,723.61 1021.7,722.27 1022.32,721.72 1022.94,721.89 1023.56,721.1 1024.18,721.5 1024.8,720.97 1025.42,720.88 1026.04,721.56 1026.66,721.7 1027.28,721.45 1027.9,720.85 1028.52,721.58 1029.14,720.65 1029.76,721.95 1030.38,721.31 1031,721.46 1031.62,722.12 1032.24,722.07 1032.86,720.58 1033.48,721.12 1034.1,721.72 1034.72,720.67 1035.34,719.41 1035.96,721.02 1036.58,721.37 1037.2,721.82 1037.82,721.63 1038.44,721.63 1039.06,721.72 1039.68,722.64 1040.3,722.12 1040.92,722.06 1041.54,721.3 1042.16,722.36 1042.78,721.52 1043.4,722.09 1044.02,719.93 1044.64,721.38 1045.26,721.4 1045.88,721.11 1046.5,722.45 1047.12,722.01 1047.74,721.49 1048.36,721.08 1048.98,722.92 1049.6,722.38 1050.22,722.2 1050.84,721.03 1051.46,722.45 1052.08,722.14 1052.7,721.41 1053.32,721.4 1053.94,720.18 1054.56,721.76 1055.18,720.68 1055.8,722.01 1056.42,721.25 1057.04,720.95 1057.66,721.69 1058.28,721.71 1058.9,720.64 1059.52,721.27 1060.14,721.94 1060.76,721.39 1061.38,720.4 1062,721.09 1062.62,720.65 1063.24,720.87 1063.86,721.41 1064.48,721.44 1065.1,721.32 1065.72,720.14 1066.34,721.51 1066.96,721.34 1067.58,721.14 1068.2,721.55 1068.82,723.05 1069.44,720.78 1070.06,720.08 1070.68,721.82 1071.3,720.94 1071.92,722.42 1072.54,720.9 1073.16,720.99 1073.78,722.06 1074.4,722.34 1075.02,722.02 1075.64,721.97 1076.26,721.49 1076.88,721.15 1077.5,721.27 1078.12,722.46 1078.74,722.26 1079.36,721.67 1079.98,721.79 1080.6,722.22 1081.22,722.59 1081.84,721.61 1082.46,721.46 1083.08,721.76 1083.7,723.63 1084.32,722.12 1084.94,722.63 1085.56,720.51 1086.18,721.98 1086.8,720.48 1087.42,720.44 1088.04,720.78 1088.66,721.24 1089.28,721.59 1089.9,721.81 1090.52,721.74 1091.14,721.2 1091.76,723.5 1092.38,722.21 1093,722.17 1093.62,723.24 1094.24,722.62 1094.86,722.18 1095.48,721.89 1096.1,723.06 1096.72,720.95 1097.34,720.63 1097.96,721.44 1098.58,719.87 1099.2,720.56 1099.82,722.21 1100.44,721.28 1101.06,721.59 1101.68,722.07 1102.3,720.69 1102.92,721.55 1103.54,721.01 1104.16,720.54 1104.78,721.09 1105.4,721.37 1106.02,721.16 1106.64,720.91 1107.26,722.14 1107.88,722.54 1108.5,722.15 1109.12,721.55 1109.74,720.68 1110.36,720.68 1110.98,720.46 1111.6,721.46 1112.22,722.22 1112.84,722.37 1113.46,721.65 1114.08,721.23 1114.7,721.59 1115.32,721.61 1115.94,721.99 1116.56,722.77 1117.18,721.21 1117.8,723.1 1118.42,720.16 1119.04,719.82 1119.66,719.96 1120.28,720.38 1120.9,721.09 1121.52,723.06 1122.14,721.26 1122.76,722.33 1123.38,721.38 1124,721.6 1124.62,720.71 1125.24,723.14 1125.86,721.8 1126.48,721.07 1127.1,723.22 1127.72,721.99 1128.34,721.93 1128.96,721.47 1129.58,720.84 1130.2,720.23 1130.82,721.11 1131.44,722.7 1132.06,722.07 1132.68,721.48 1133.3,722.34 1133.92,720.93 1134.54,722.48 1135.16,721.68 1135.78,720.88 1136.4,721.91 1137.02,721.99 1137.64,721.33 1138.26,721.64 1138.88,722.3 1139.5,722.77 1140.12,721.08 1140.74,719.33 1141.36,722.69 1141.98,721.53 1142.6,721.18 1143.22,721.78 1143.84,721.22 1144.46,722.27 1145.08,720.67 1145.7,721.17 1146.32,720.44 1146.94,722.5 1147.56,721.5 1148.18,722.37 1148.8,722.77 1149.42,720.81 1150.04,721.19 1150.66,722.01 1151.28,721.64 1151.9,721.42 1152.52,722.15 1153.14,722.35 1153.76,721.2 1154.38,721.33 1155,721.98 1155.62,721.76 1156.24,721.67 1156.86,720.64 1157.48,722.72 1158.1,721.56 1158.72,721.72 1159.34,721.52 1159.96,721.56 1160.58,721.63 1161.2,720.86 1161.82,688.07 1162.44,688.89 1163.06,688.42 1163.68,688.58 1164.3,688.42 1164.92,688.03 1165.54,689.37 1166.16,687.65 1166.78,688.16 1167.4,688.77 1168.02,688.3 1168.64,687.15 1169.26,686.89 1169.88,688.94 1170.5,687.35 1171.12,687.8 1171.74,688.31 1172.36,688.06 1172.98,686.52 1173.6,686.12 1174.22,687.46 1174.84,687.2" fill="none" stroke="#2fa02f" stroke-width="0.9" stroke-linejoin="round"/><polyline points="640.4,706.83 641.02,707.15 641.64,706.53 642.26,707.01 642.88,707.54 643.5,707.26 644.12,708.06 644.74,706.39 645.36,706.77 645.98,706.26 646.6,706.11 647.22,717.52 647.84,717.91 648.46,718.14 649.08,718.25 649.7,719.56 650.32,718.8 650.94,716.8 651.56,717.75 652.18,717.32 652.8,717.32 653.42,718.68 654.04,717.81 654.66,716.34 655.28,717.74 655.9,717.57 656.52,716.87 657.14,716.92 657.76,717.16 658.38,717.65 659,717.45 659.62,717.78 660.24,719.17 660.86,717.47 661.48,717.13 662.1,717.48 662.72,718.56 663.34,717.42 663.96,718.8 664.58,717.02 665.2,716.87 665.82,717.57 666.44,717.11 667.06,717.2 667.68,718.02 668.3,718.39 668.92,718 669.54,717.63 670.16,718.78 670.78,718.3 671.4,717.72 672.02,718.7 672.64,717.3 673.26,717.82 673.88,718.3 674.5,717.89 675.12,717.39 675.74,717.98 676.36,717.43 676.98,717.28 677.6,716.93 678.22,718.6 678.84,717.55 679.46,718.62 680.08,718.25 680.7,717.69 681.32,718.28 681.94,718.1 682.56,717.96 683.18,716.8 683.8,717.65 684.42,718.44 685.04,718.29 685.66,718.65 686.28,719.09 686.9,718.37 687.52,719.39 688.14,716.98 688.76,717.46 689.38,715.84 690,718.02 690.62,717.92 691.24,719.09 691.86,717.78 692.48,716.28 693.1,718.45 693.72,716.92 694.34,716.67 694.96,717.44 695.58,718.2 696.2,717.5 696.82,717.88 697.44,716.41 698.06,718.82 698.68,717.95 699.3,717.92 699.92,718.26 700.54,718.02 701.16,717.99 701.78,717.14 702.4,717.58 703.02,718.08 703.64,718.64 704.26,717.88 704.88,717.88 705.5,718.07 706.12,718.28 706.74,718.05 707.36,717.66 707.98,717.39 708.6,718.56 709.22,718.17 709.84,717.89 710.46,720.43 711.08,718.99 711.7,718.68 712.32,718.09 712.94,717.1 713.56,718.51 714.18,717.88 714.8,717.85 715.42,718.58 716.04,718.72 716.66,718.16 717.28,713.5 717.9,713.5 718.52,713.5 719.14,717.18 719.76,718.24 720.38,718 721,717.86 721.62,718.32 722.24,718.08 722.86,719.36 723.48,718.27 724.1,718.08 724.72,718.73 725.34,717.56 725.96,718.51 726.58,717.9 727.2,718.71 727.82,717.34 728.44,718.02 729.06,716.65 729.68,717.24 730.3,717.7 730.92,718.15 731.54,719.35 732.16,719.49 732.78,717.13 733.4,717.1 734.02,718.6 734.64,718.29 735.26,716.87 735.88,717.98 736.5,716.99 737.12,717 737.74,716.7 738.36,717.38 738.98,719.4 739.6,718.4 740.22,717.84 740.84,719.69 741.46,717.83 742.08,717.7 742.7,717.58 743.32,718.07 743.94,717.62 744.56,718.86 745.18,717.79 745.8,718.22 746.42,718.05 747.04,717.21 747.66,716.95 748.28,717.59 748.9,716.04 749.52,717.46 750.14,717.79 750.76,717.91 751.38,717.76 752,718.06 752.62,717.59 753.24,718.24 753.86,716.67 754.48,718.26 755.1,717.23 755.72,718.05 756.34,717.5 756.96,717.42 757.58,717.13 758.2,712.5 758.82,712.5 759.44,712.5 760.06,717.76 760.68,717.99 761.3,717.87 761.92,717.09 762.54,717.17 763.16,718.35 763.78,717.14 764.4,718.13 765.02,718.41 765.64,718.02 766.26,716.94 766.88,719.05 767.5,718.15 768.12,718.02 768.74,717.56 769.36,717.05 769.98,717.45 770.6,717.88 771.22,717.19 771.84,717.77 772.46,718.65 773.08,718.3 773.7,717.83 774.32,718.59 774.94,718.65 775.56,718.64 776.18,717.38 776.8,716.36 777.42,718.11 778.04,717.91 778.66,717.55 779.28,718.11 779.9,717.53 780.52,717.28 781.14,719.05 781.76,716.86 782.38,718.24 783,718.65 783.62,719.3 784.24,718.29 784.86,718.28 785.48,717.21 786.1,717.71 786.72,716.21 787.34,717.06 787.96,717.63 788.58,717.69 789.2,717.42 789.82,718.6 790.44,716.77 791.06,717.7 791.68,717.48 792.3,717.77 792.92,717.83 793.54,719.26 794.16,717.3 794.78,718.7 795.4,719.03 796.02,717.95 796.64,717.37 797.26,716.79 797.88,716.96 798.5,719.16 799.12,716.46 799.74,717.87 800.36,717.3 800.98,719.12 801.6,718.3 802.22,716.89 802.84,717.23 803.46,717.83 804.08,717.9 804.7,717.12 805.32,717.45 805.94,717.39 806.56,718.08 807.18,718.06 807.8,718.02 808.42,717.41 809.04,718.31 809.66,717.48 810.28,717.12 810.9,717.34 811.52,717.47 812.14,717.5 812.76,716.3 813.38,718.51 814,718.41 814.62,718.91 815.24,717.73 815.86,718.35 816.48,718.06 817.1,717.87 817.72,719.16 818.34,717.63 818.96,718.2 819.58,716.59 820.2,717.98 820.82,717.71 821.44,717.02 822.06,717.2 822.68,716.1 823.3,716.67 823.92,717.7 824.54,715.81 825.16,718.21 825.78,713.61 826.4,712.4 827.02,711.61 827.64,711.52 828.26,711.59 828.88,712 829.5,714.27 830.12,712.25 830.74,713.25 831.36,713.82 831.98,712.3 832.6,712.5 833.22,713.25 833.84,712.4 834.46,713.65 835.08,714.58 835.7,713.12 836.32,712.25 836.94,713.14 837.56,713.12 838.18,712.31 838.8,712.6 839.42,712.82 840.04,713.18 840.66,713.73 841.28,712.63 841.9,711.79 842.52,711.39 843.14,713.9 843.76,712.71 844.38,712.48 845,714.58 845.62,713.99 846.24,714.72 846.86,713.05 847.48,712.34 848.1,712.31 848.72,713.19 849.34,713.19 849.96,713.18 850.58,714.57 851.2,714.17 851.82,712.26 852.44,713.02 853.06,713.29 853.68,712.34 854.3,714.45 854.92,713.82 855.54,714.14 856.16,712.67 856.78,711.92 857.4,713.19 858.02,712.73 858.64,712.35 859.26,712.64 859.88,712.93 860.5,712.93 861.12,712.67 861.74,713.12 862.36,715.04 862.98,714.13 863.6,712.68 864.22,714.31 864.84,712.74 865.46,711.63 866.08,711.53 866.7,711.01 867.32,713.31 867.94,712.07 868.56,711.58 869.18,712.13 869.8,712.51 870.42,711.8 871.04,712.17 871.66,712.67 872.28,713.26 872.9,712.18 873.52,713.09 874.14,713.05 874.76,713.26 875.38,712.48 876,711.86 876.62,713.33 877.24,713.34 877.86,712.4 878.48,712.12 879.1,713.18 879.72,714.39 880.34,713.39 880.96,714.81 881.58,713.43 882.2,713.18 882.82,713.23 883.44,713.7 884.06,711.84 884.68,712.72 885.3,713.73 885.92,711.8 886.54,712.78 887.16,713.35 887.78,714.2 888.4,714.25 889.02,713.06 889.64,714.41 890.26,712.28 890.88,711.64 891.5,713.57 892.12,713.45 892.74,712.07 893.36,713.47 893.98,713.58 894.6,713.5 895.22,712.6 895.84,711.79 896.46,711.32 897.08,712.34 897.7,712.59 898.32,712.37 898.94,712.29 899.56,713.39 900.18,712.06 900.8,712.09 901.42,714.15 902.04,712.59 902.66,712.27 903.28,713.49 903.9,711.57 904.52,713.77 905.14,712.03 905.76,712.01 906.38,711.67 907,711.85 907.62,712.05 908.24,713.35 908.86,712.85 909.48,713.84 910.1,713.59 910.72,712.02 911.34,712.65 911.96,712.31 912.58,712.37 913.2,712.8 913.82,713.08 914.44,713.18 915.06,711.27 915.68,712.37 916.3,712.36 916.92,714.1 917.54,712.87 918.16,712.78 918.78,712.79 919.4,713.38 920.02,712.05 920.64,712.55 921.26,712.65 921.88,712.75 922.5,712.59 923.12,712.34 923.74,712.77 924.36,711.79 924.98,713.81 925.6,712.99 926.22,711.46 926.84,712.31 927.46,713.41 928.08,712.77 928.7,712.67 929.32,711.04 929.94,713.51 930.56,712.98 931.18,711.34 931.8,712.16 932.42,713.77 933.04,713.28 933.66,711.76 934.28,712.16 934.9,712.85 935.52,714.37 936.14,713.29 936.76,713.45 937.38,709 938,709 938.62,709 939.24,711.64 939.86,711.53 940.48,712.1 941.1,713.6 941.72,712.93 942.34,713.72 942.96,713.56 943.58,713.06 944.2,712.47 944.82,714.35 945.44,713.96 946.06,713.97 946.68,714.91 947.3,714.36 947.92,713.28 948.54,713.18 949.16,713.29 949.78,714.59 950.4,712.39 951.02,711.34 951.64,712.14 952.26,712.67 952.88,712.33 953.5,713.4 954.12,713.37 954.74,712.89 955.36,712.87 955.98,714.26 956.6,714.6 957.22,714.47 957.84,712.85 958.46,713.74 959.08,712.12 959.7,711.28 960.32,713.79 960.94,713.66 961.56,713.49 962.18,714.02 962.8,714.3 963.42,713.32 964.04,713.12 964.66,713.33 965.28,713.55 965.9,713.1 966.52,711.85 967.14,714.5 967.76,712.58 968.38,712.31 969,713.16 969.62,712.84 970.24,713.22 970.86,714.71 971.48,714.27 972.1,712.75 972.72,713.05 973.34,712.81 973.96,713.77 974.58,712.33 975.2,711.99 975.82,711.38 976.44,712.91 977.06,713.13 977.68,713.42 978.3,713.58 978.92,712.06 979.54,712.38 980.16,711.91 980.78,713.57 981.4,713.62 982.02,711.89 982.64,713.04 983.26,712.95 983.88,712.94 984.5,713.37 985.12,712.47 985.74,712.51 986.36,712.25 986.98,712.2 987.6,711.91 988.22,713.51 988.84,713.4 989.46,712.75 990.08,711.56 990.7,714.28 991.32,713.14 991.94,713.04 992.56,713.35 993.18,714.22 993.8,712.88 994.42,711.06 995.04,712.23 995.66,712.69 996.28,712.36 996.9,713.83 997.52,712.69 998.14,713.03 998.76,712.25 999.38,713.28 1000,712.39 1000.62,713.36 1001.24,713.03 1001.86,712.99 1002.48,713.09 1003.1,711.67 1003.72,712.25 1004.34,710 1004.96,710 1005.58,710 1006.2,723.23 1006.82,722.37 1007.44,723.16 1008.06,722.61 1008.68,722.89 1009.3,723.29 1009.92,722.19 1010.54,722.12 1011.16,722.49 1011.78,722.47 1012.4,721.75 1013.02,722.78 1013.64,722.73 1014.26,722.74 1014.88,722.8 1015.5,723.01 1016.12,722.28 1016.74,722.71 1017.36,722.42 1017.98,722.34 1018.6,722.12 1019.22,723.12 1019.84,721.49 1020.46,722.03 1021.08,722.84 1021.7,722.5 1022.32,722.26 1022.94,723.07 1023.56,722.23 1024.18,722.4 1024.8,722.77 1025.42,722.38 1026.04,722.31 1026.66,722.59 1027.28,723.1 1027.9,722.25 1028.52,722.81 1029.14,722.62 1029.76,722.44 1030.38,721.91 1031,723.34 1031.62,723.04 1032.24,722.83 1032.86,722.5 1033.48,723.4 1034.1,722.45 1034.72,722.07 1035.34,722.11 1035.96,722.49 1036.58,722.75 1037.2,721.64 1037.82,722.56 1038.44,722.74 1039.06,723.17 1039.68,722.56 1040.3,723.34 1040.92,723.76 1041.54,722.57 1042.16,722.47 1042.78,723.08 1043.4,723.31 1044.02,722.75 1044.64,723.22 1045.26,721.96 1045.88,722.95 1046.5,722.9 1047.12,723.12 1047.74,722.96 1048.36,723.02 1048.98,722.47 1049.6,723.28 1050.22,721.71 1050.84,722.56 1051.46,722.29 1052.08,723.52 1052.7,722.23 1053.32,722.6 1053.94,722.6 1054.56,723.01 1055.18,722.69 1055.8,722.1 1056.42,722.44 1057.04,723.17 1057.66,723.11 1058.28,722.35 1058.9,721.94 1059.52,721.84 1060.14,722.41 1060.76,722.49 1061.38,722.41 1062,722.31 1062.62,722.65 1063.24,723.28 1063.86,723.25 1064.48,722.53 1065.1,722.99 1065.72,722.57 1066.34,723.25 1066.96,723.26 1067.58,723.22 1068.2,723.85 1068.82,723.38 1069.44,723.23 1070.06,723.44 1070.68,722.26 1071.3,722.39 1071.92,722.4 1072.54,723 1073.16,722.71 1073.78,722.01 1074.4,722.12 1075.02,722.42 1075.64,722.35 1076.26,722.33 1076.88,721.83 1077.5,722.52 1078.12,721.95 1078.74,722.29 1079.36,722.24 1079.98,722.39 1080.6,723.29 1081.22,722.54 1081.84,722.4 1082.46,721.33 1083.08,721.92 1083.7,722.6 1084.32,722.45 1084.94,722.98 1085.56,722.54 1086.18,723 1086.8,722.83 1087.42,723.2 1088.04,722.6 1088.66,723.06 1089.28,722.47 1089.9,722.2 1090.52,723.1 1091.14,722.02 1091.76,722.04 1092.38,723.32 1093,722.84 1093.62,722.85 1094.24,722.78 1094.86,722.63 1095.48,723.61 1096.1,722.84 1096.72,723.38 1097.34,722.77 1097.96,722.3 1098.58,722.42 1099.2,722.6 1099.82,723.91 1100.44,722.57 1101.06,722.82 1101.68,721.89 1102.3,722.75 1102.92,722.58 1103.54,722.8 1104.16,722.7 1104.78,722.4 1105.4,722.61 1106.02,722.62 1106.64,723.14 1107.26,722.69 1107.88,722.57 1108.5,721.96 1109.12,722.92 1109.74,722.59 1110.36,722.16 1110.98,723.13 1111.6,723.18 1112.22,722.72 1112.84,722.66 1113.46,721.96 1114.08,721.3 1114.7,722.41 1115.32,721.82 1115.94,722.78 1116.56,722.47 1117.18,722.71 1117.8,722.36 1118.42,722.78 1119.04,723.04 1119.66,722.76 1120.28,723.02 1120.9,723.08 1121.52,722.63 1122.14,721.77 1122.76,722.76 1123.38,722.34 1124,722.04 1124.62,721.57 1125.24,721.52 1125.86,723.06 1126.48,723.59 1127.1,723.48 1127.72,723.8 1128.34,721.89 1128.96,722.84 1129.58,721.96 1130.2,721.74 1130.82,722.74 1131.44,723.1 1132.06,722.25 1132.68,721.71 1133.3,721.64 1133.92,722.31 1134.54,722.98 1135.16,723.68 1135.78,723.04 1136.4,722.18 1137.02,721.97 1137.64,722.5 1138.26,722.9 1138.88,721.65 1139.5,722.55 1140.12,722.27 1140.74,722.95 1141.36,721.83 1141.98,722.92 1142.6,723.38 1143.22,723.46 1143.84,723.54 1144.46,722.85 1145.08,722.7 1145.7,722.06 1146.32,722.47 1146.94,722.17 1147.56,722.81 1148.18,723.01 1148.8,722.61 1149.42,723.39 1150.04,722.08 1150.66,722.21 1151.28,723.37 1151.9,722.62 1152.52,722.95 1153.14,721.39 1153.76,723.1 1154.38,722.34 1155,722.21 1155.62,723.01 1156.24,722.71 1156.86,721.74 1157.48,723.09 1158.1,722.21 1158.72,722.34 1159.34,722.21 1159.96,722.29 1160.58,722.32 1161.2,722.36 1161.82,722.3 1162.44,723.78 1163.06,722.97 1163.68,722.97 1164.3,722.36 1164.92,723.44 1165.54,723.03 1166.16,722.72 1166.78,722.34 1167.4,722.94 1168.02,721.8 1168.64,722.08 1169.26,722.32 1169.88,722.71 1170.5,722.69 1171.12,721.87 1171.74,722.74 1172.36,722.4 1172.98,722.29 1173.6,722.59 1174.22,722.43 1174.84,722.33" fill="none" stroke="#2a80c4" stroke-width="0.9" stroke-linejoin="round"/><polyline points="640.4,719.67 641.02,719.58 641.64,720.38 642.26,719.2 642.88,719.94 643.5,719.13 644.12,720.48 644.74,720.35 645.36,720.84 645.98,720.1 646.6,720.36 647.22,720.1 647.84,719.85 648.46,720.2 649.08,719.63 649.7,719.93 650.32,720.46 650.94,720.28 651.56,720.03 652.18,721.15 652.8,720.42 653.42,719.98 654.04,720.23 654.66,719.97 655.28,719.98 655.9,720 656.52,721.07 657.14,720.38 657.76,720.32 658.38,720.53 659,721.17 659.62,720.29 660.24,719.94 660.86,721.26 661.48,719.76 662.1,719.95 662.72,720.45 663.34,721.28 663.96,719.99 664.58,719.07 665.2,720.27 665.82,719.98 666.44,719.98 667.06,720.36 667.68,720.33 668.3,720.36 668.92,720.04 669.54,720.75 670.16,720.99 670.78,720.37 671.4,720.03 672.02,720.5 672.64,720.47 673.26,719.79 673.88,719.91 674.5,720.61 675.12,720.24 675.74,720.06 676.36,720.27 676.98,720.2 677.6,720.2 678.22,719.33 678.84,720.81 679.46,720.41 680.08,719.85 680.7,720.57 681.32,720.41 681.94,720.25 682.56,720.68 683.18,721.31 683.8,720.67 684.42,721.01 685.04,721.33 685.66,719.97 686.28,719.92 686.9,720.49 687.52,719.49 688.14,719.94 688.76,720.73 689.38,720.78 690,720.58 690.62,719.42 691.24,721.1 691.86,720.63 692.48,720.63 693.1,720.51 693.72,719.49 694.34,719.41 694.96,719.49 695.58,720.92 696.2,719.97 696.82,720.05 697.44,720.05 698.06,720.43 698.68,720.47 699.3,720.37 699.92,719.67 700.54,718.68 701.16,719.97 701.78,720.27 702.4,720.77 703.02,720.27 703.64,719.94 704.26,720.33 704.88,719.53 705.5,719.6 706.12,719.63 706.74,720.21 707.36,721.14 707.98,720.73 708.6,720.82 709.22,720.43 709.84,720.37 710.46,720.03 711.08,720.04 711.7,719.07 712.32,719.43 712.94,719.47 713.56,720.43 714.18,720.54 714.8,720.78 715.42,721.02 716.04,720.23 716.66,720.68 717.28,721.18 717.9,720.39 718.52,720.73 719.14,720.23 719.76,719.48 720.38,720.11 721,719.81 721.62,720.17 722.24,719.99 722.86,720.3 723.48,719.26 724.1,720.95 724.72,720.96 725.34,720.19 725.96,719.79 726.58,720.12 727.2,720.49 727.82,720.45 728.44,720.43 729.06,719.36 729.68,719.52 730.3,720.67 730.92,720.4 731.54,719.56 732.16,719.68 732.78,719.44 733.4,719.59 734.02,720.61 734.64,720.18 735.26,720.71 735.88,720.39 736.5,719.55 737.12,719.78 737.74,721.16 738.36,720.04 738.98,719.69 739.6,720.66 740.22,720.33 740.84,720.22 741.46,720.88 742.08,719.53 742.7,720.26 743.32,719.73 743.94,719.46 744.56,719.68 745.18,720.62 745.8,720.22 746.42,719.36 747.04,719.52 747.66,720.76 748.28,720.78 748.9,719.82 749.52,721.24 750.14,720.24 750.76,719.66 751.38,720.03 752,720.6 752.62,721.02 753.24,720.84 753.86,720.13 754.48,719.93 755.1,719.48 755.72,720.02 756.34,719.89 756.96,720.25 757.58,719.63 758.2,719.85 758.82,719.72 759.44,719.55 760.06,719.53 760.68,719.6 761.3,719.53 761.92,720.33 762.54,720.27 763.16,719.61 763.78,720.32 764.4,720.36 765.02,720.9 765.64,720.25 766.26,720.11 766.88,719.87 767.5,720.19 768.12,720.43 768.74,720.33 769.36,720.11 769.98,720.44 770.6,720.29 771.22,720.33 771.84,719.8 772.46,720.21 773.08,719.74 773.7,719.72 774.32,720.18 774.94,721.17 775.56,720.85 776.18,720.33 776.8,720.14 777.42,720.64 778.04,720.93 778.66,720.91 779.28,720.26 779.9,720.3 780.52,720.07 781.14,720.04 781.76,719.78 782.38,720 783,719.17 783.62,719.44 784.24,720.24 784.86,719.78 785.48,720.37 786.1,719.64 786.72,719.92 787.34,720.33 787.96,719.75 788.58,719.78 789.2,721.25 789.82,720.1 790.44,719.85 791.06,719.87 791.68,720.15 792.3,720.18 792.92,720.65 793.54,720.65 794.16,720.11 794.78,720.02 795.4,719.51 796.02,719.37 796.64,719.69 797.26,720.44 797.88,720.3 798.5,720.59 799.12,720.71 799.74,720.23 800.36,721.17 800.98,720.15 801.6,719.9 802.22,719.94 802.84,720.67 803.46,720.23 804.08,719.87 804.7,720.33 805.32,720.75 805.94,720.26 806.56,720.1 807.18,720.68 807.8,720.75 808.42,720.74 809.04,719.96 809.66,720.28 810.28,720.38 810.9,719.41 811.52,720.6 812.14,720.33 812.76,720.07 813.38,721.21 814,720.47 814.62,719.92 815.24,720.12 815.86,720.44 816.48,720.62 817.1,720.26 817.72,719.81 818.34,719.8 818.96,719.74 819.58,719.63 820.2,720.08 820.82,719.95 821.44,720.17 822.06,719.82 822.68,719.72 823.3,720.02 823.92,720 824.54,720.69 825.16,719.88 825.78,722.43 826.4,722.39 827.02,721.8 827.64,722.61 828.26,722.52 828.88,721.46 829.5,722.49 830.12,722.85 830.74,722.12 831.36,723.12 831.98,722.62 832.6,721.91 833.22,722.56 833.84,722.27 834.46,721.76 835.08,721.29 835.7,722.29 836.32,722.04 836.94,722.62 837.56,722.62 838.18,722.21 838.8,722.12 839.42,723.15 840.04,723.33 840.66,722.93 841.28,722.34 841.9,721.94 842.52,722.13 843.14,723.11 843.76,722.75 844.38,722.34 845,721.82 845.62,722.36 846.24,721.99 846.86,722.32 847.48,722.73 848.1,722.96 848.72,722.58 849.34,722.28 849.96,722.48 850.58,723.24 851.2,722.74 851.82,721.83 852.44,723 853.06,722.63 853.68,724.04 854.3,722.51 854.92,722.38 855.54,722.26 856.16,722.55 856.78,722.16 857.4,721.68 858.02,721.38 858.64,722.14 859.26,722.11 859.88,722.08 860.5,723.31 861.12,722.95 861.74,723.01 862.36,722.29 862.98,722.52 863.6,722.33 864.22,722.29 864.84,722.72 865.46,722.74 866.08,722.61 866.7,722.51 867.32,721.76 867.94,721.93 868.56,722.48 869.18,722.25 869.8,722.01 870.42,722.49 871.04,722 871.66,722.01 872.28,722.73 872.9,722.3 873.52,723.03 874.14,722.77 874.76,722.84 875.38,723.01 876,721.53 876.62,722.19 877.24,721.77 877.86,722.06 878.48,722.28 879.1,722.95 879.72,722.49 880.34,723.17 880.96,722.31 881.58,722.36 882.2,722.43 882.82,722.84 883.44,722.46 884.06,722.13 884.68,722.2 885.3,721.72 885.92,722.84 886.54,722.83 887.16,722.68 887.78,722.58 888.4,722.16 889.02,722.17 889.64,722.72 890.26,722.1 890.88,721.98 891.5,723.04 892.12,723.24 892.74,722.7 893.36,722.7 893.98,722.55 894.6,723.08 895.22,722.33 895.84,722.42 896.46,722.63 897.08,723.1 897.7,722.43 898.32,722.51 898.94,722.2 899.56,722.06 900.18,722.04 900.8,722.37 901.42,722.8 902.04,722.16 902.66,722.08 903.28,722.15 903.9,722.51 904.52,722.74 905.14,721.9 905.76,722.46 906.38,721.96 907,722.64 907.62,722.01 908.24,721.83 908.86,721.96 909.48,722.28 910.1,721.93 910.72,722.4 911.34,722.47 911.96,722.45 912.58,722.53 913.2,722.82 913.82,722.15 914.44,722.35 915.06,722.38 915.68,721.47 916.3,722.39 916.92,722.05 917.54,722.01 918.16,722.12 918.78,722.39 919.4,722.55 920.02,722.65 920.64,722.14 921.26,722.66 921.88,722.64 922.5,722.27 923.12,722.37 923.74,722.76 924.36,722.67 924.98,722.77 925.6,722.52 926.22,722.94 926.84,723.51 927.46,722.83 928.08,721.76 928.7,723.05 929.32,722.27 929.94,721.75 930.56,721.2 931.18,722.35 931.8,722.88 932.42,722.95 933.04,722.34 933.66,723.04 934.28,722.49 934.9,722.15 935.52,722.38 936.14,722.49 936.76,722.44 937.38,722.59 938,721.45 938.62,722.92 939.24,722.25 939.86,722.66 940.48,722.09 941.1,722.41 941.72,722.32 942.34,721.67 942.96,722.43 943.58,722.69 944.2,721.96 944.82,721.37 945.44,721.9 946.06,721.92 946.68,722.35 947.3,722.38 947.92,723.12 948.54,722.84 949.16,722.37 949.78,722.47 950.4,721.12 951.02,721.74 951.64,721.85 952.26,722.24 952.88,722.51 953.5,722.52 954.12,722.84 954.74,722.18 955.36,722.49 955.98,722.36 956.6,722.4 957.22,722.54 957.84,722.3 958.46,722.48 959.08,722.4 959.7,722.86 960.32,722.44 960.94,722.55 961.56,723.6 962.18,722.92 962.8,722.73 963.42,722.95 964.04,722.06 964.66,722.65 965.28,722.79 965.9,722.67 966.52,722.89 967.14,722.85 967.76,723.03 968.38,722.24 969,722.56 969.62,722.19 970.24,722.91 970.86,722.56 971.48,721.85 972.1,722.34 972.72,721.94 973.34,722.75 973.96,722.32 974.58,721.4 975.2,722.03 975.82,722.78 976.44,722.62 977.06,722.16 977.68,722.64 978.3,722.71 978.92,723.12 979.54,722.95 980.16,722.67 980.78,722.1 981.4,722.47 982.02,722.55 982.64,722.44 983.26,722.6 983.88,721.91 984.5,722.56 985.12,722.44 985.74,722.57 986.36,722.39 986.98,722.26 987.6,722.49 988.22,722.77 988.84,722.33 989.46,722.53 990.08,722.08 990.7,722.52 991.32,722.43 991.94,721.83 992.56,722.81 993.18,722.08 993.8,722.37 994.42,721.81 995.04,721.51 995.66,722.52 996.28,721.8 996.9,721.35 997.52,722.09 998.14,721.65 998.76,722.16 999.38,723.17 1000,722.38 1000.62,722.56 1001.24,722.68 1001.86,722.57 1002.48,722.38 1003.1,723.07 1003.72,722.5 1004.34,722.58 1004.96,722.49 1005.58,721.84 1006.2,718.71 1006.82,718.66 1007.44,719.06 1008.06,719.17 1008.68,719.8 1009.3,717.52 1009.92,718 1010.54,718.15 1011.16,717.91 1011.78,718.75 1012.4,718.58 1013.02,718.69 1013.64,717.49 1014.26,717.71 1014.88,718.38 1015.5,718.25 1016.12,718.11 1016.74,718.42 1017.36,718.37 1017.98,717.82 1018.6,719.6 1019.22,718.33 1019.84,719 1020.46,719.09 1021.08,719.37 1021.7,718.36 1022.32,717.86 1022.94,718.76 1023.56,718.81 1024.18,717.01 1024.8,716.47 1025.42,717.8 1026.04,718.17 1026.66,718.33 1027.28,718.83 1027.9,717.98 1028.52,720.31 1029.14,719.57 1029.76,719.69 1030.38,719.01 1031,717.24 1031.62,718.49 1032.24,718.2 1032.86,718.82 1033.48,718.57 1034.1,719.06 1034.72,718.08 1035.34,718.25 1035.96,718.53 1036.58,718.07 1037.2,718.18 1037.82,718.94 1038.44,720 1039.06,718.73 1039.68,719.2 1040.3,717.93 1040.92,718.15 1041.54,718.74 1042.16,719.03 1042.78,717.98 1043.4,718.89 1044.02,718.76 1044.64,719.54 1045.26,719.43 1045.88,719.14 1046.5,718.44 1047.12,718.75 1047.74,718.04 1048.36,717.92 1048.98,717.19 1049.6,717.42 1050.22,717.49 1050.84,718.31 1051.46,718.61 1052.08,717.67 1052.7,718.35 1053.32,718.83 1053.94,719.28 1054.56,718.67 1055.18,718.76 1055.8,718.37 1056.42,719.19 1057.04,717.64 1057.66,718.57 1058.28,716.99 1058.9,719.46 1059.52,719.41 1060.14,717.31 1060.76,717.97 1061.38,717.5 1062,717.16 1062.62,718.03 1063.24,717.87 1063.86,719.17 1064.48,718.35 1065.1,717.78 1065.72,718.38 1066.34,718.83 1066.96,719.21 1067.58,719.06 1068.2,717.66 1068.82,717.84 1069.44,718.32 1070.06,717.96 1070.68,718.98 1071.3,718.43 1071.92,718.51 1072.54,718.32 1073.16,718.57 1073.78,717.55 1074.4,719.83 1075.02,718.45 1075.64,718.06 1076.26,717.26 1076.88,718.26 1077.5,717.57 1078.12,718.61 1078.74,719.42 1079.36,719.17 1079.98,718.4 1080.6,719.43 1081.22,718.63 1081.84,718.56 1082.46,718.63 1083.08,718.27 1083.7,718.81 1084.32,717.78 1084.94,717.21 1085.56,719.14 1086.18,718.19 1086.8,718.26 1087.42,718.75 1088.04,718.3 1088.66,717.72 1089.28,718.28 1089.9,717.87 1090.52,718.82 1091.14,718.33 1091.76,718.36 1092.38,719.07 1093,717.62 1093.62,717.37 1094.24,718.84 1094.86,719.51 1095.48,718.83 1096.1,718.15 1096.72,719.35 1097.34,719.1 1097.96,719.39 1098.58,717.5 1099.2,718.28 1099.82,717.82 1100.44,717.68 1101.06,718.8 1101.68,719.13 1102.3,718.37 1102.92,718.37 1103.54,719.49 1104.16,719.22 1104.78,718.63 1105.4,718.95 1106.02,718.74 1106.64,717.75 1107.26,718.06 1107.88,718.68 1108.5,719.03 1109.12,717.85 1109.74,717.89 1110.36,718.04 1110.98,717.44 1111.6,719.11 1112.22,719.01 1112.84,719.57 1113.46,717.28 1114.08,717.77 1114.7,719.67 1115.32,717.84 1115.94,717.18 1116.56,718.46 1117.18,719.64 1117.8,719.24 1118.42,718.06 1119.04,718.86 1119.66,718.92 1120.28,718.84 1120.9,718.9 1121.52,719.22 1122.14,719.51 1122.76,719.72 1123.38,719.55 1124,718.68 1124.62,717.33 1125.24,718.71 1125.86,717.58 1126.48,719.96 1127.1,718.07 1127.72,717.21 1128.34,717.04 1128.96,718.55 1129.58,718.79 1130.2,719.07 1130.82,718.88 1131.44,718.11 1132.06,719.05 1132.68,718.2 1133.3,717.47 1133.92,718.99 1134.54,719.04 1135.16,718.03 1135.78,718.3 1136.4,719.24 1137.02,719.36 1137.64,718 1138.26,719.23 1138.88,716.93 1139.5,718.32 1140.12,718.8 1140.74,718.55 1141.36,718.66 1141.98,717.49 1142.6,718.28 1143.22,718.87 1143.84,718.01 1144.46,718.57 1145.08,718.47 1145.7,717.01 1146.32,717.85 1146.94,718.84 1147.56,717.57 1148.18,718.4 1148.8,718.78 1149.42,717.75 1150.04,718.25 1150.66,719.14 1151.28,719.2 1151.9,718.03 1152.52,719.18 1153.14,718.94 1153.76,718.75 1154.38,719.66 1155,719.31 1155.62,718.99 1156.24,719.33 1156.86,719.2 1157.48,719.59 1158.1,718.71 1158.72,717.39 1159.34,719.43 1159.96,719.32 1160.58,719.1 1161.2,718.73 1161.82,707.96 1162.44,708.06 1163.06,707.35 1163.68,708.4 1164.3,708.13 1164.92,707.36 1165.54,708.05 1166.16,707.78 1166.78,707.93 1167.4,708.36 1168.02,709.93 1168.64,707.65 1169.26,708.21 1169.88,708.53 1170.5,708.4 1171.12,709.1 1171.74,707.92 1172.36,707.75 1172.98,707.94 1173.6,707.04 1174.22,708.57 1174.84,707.25" fill="none" stroke="#e4e8f2" stroke-width="0.9" stroke-linejoin="round"/><polyline points="640.4,691.3 641.02,689.11 641.64,689.69 642.26,690.65 642.88,692.24 643.5,691.09 644.12,689.2 644.74,690.79 645.36,689.6 645.98,691.79 646.6,690.74 647.22,713.17 647.84,711.62 648.46,710.42 649.08,709.73 649.7,710.71 650.32,711.71 650.94,712.65 651.56,711.92 652.18,710.76 652.8,711.77 653.42,710.04 654.04,711.63 654.66,710.7 655.28,712.76 655.9,712.66 656.52,712.02 657.14,710.5 657.76,711.77 658.38,711.84 659,710.94 659.62,710.69 660.24,712.53 660.86,711.22 661.48,711.81 662.1,712.87 662.72,710.21 663.34,712.95 663.96,712.72 664.58,711.02 665.2,710.37 665.82,709.97 666.44,712.05 667.06,708.96 667.68,711.84 668.3,711.66 668.92,710.77 669.54,710.77 670.16,710.91 670.78,711.07 671.4,712.22 672.02,710.73 672.64,712.36 673.26,712.58 673.88,711.38 674.5,712.01 675.12,710.98 675.74,711.37 676.36,711.89 676.98,713.44 677.6,711.76 678.22,711.32 678.84,711.42 679.46,711.22 680.08,710.29 680.7,713.06 681.32,711.11 681.94,710.76 682.56,710.56 683.18,711.92 683.8,714.47 684.42,715.05 685.04,713.12 685.66,712.09 686.28,711.52 686.9,710.42 687.52,711.95 688.14,711.42 688.76,713.5 689.38,711.55 690,710.42 690.62,709.36 691.24,709.21 691.86,711.58 692.48,711.78 693.1,710.32 693.72,709.65 694.34,711.33 694.96,711.03 695.58,711.56 696.2,711.41 696.82,710.62 697.44,709.5 698.06,711.16 698.68,711.45 699.3,711.6 699.92,712.39 700.54,712.53 701.16,711.13 701.78,711.94 702.4,709.32 703.02,711.67 703.64,711.42 704.26,712.43 704.88,712.61 705.5,710.69 706.12,711.13 706.74,712.47 707.36,711.07 707.98,711.41 708.6,710.79 709.22,711.87 709.84,711.79 710.46,710.65 711.08,709.81 711.7,708.85 712.32,711.75 712.94,711.02 713.56,710.62 714.18,710.71 714.8,710.33 715.42,711.88 716.04,712.13 716.66,709.28 717.28,710.95 717.9,711.42 718.52,711.08 719.14,711.44 719.76,713.1 720.38,712.06 721,712.75 721.62,712.7 722.24,710.13 722.86,712.95 723.48,711.93 724.1,711.22 724.72,712.22 725.34,713.83 725.96,711.09 726.58,710.65 727.2,711.62 727.82,709.65 728.44,709.93 729.06,711.16 729.68,712.12 730.3,712.1 730.92,712.4 731.54,712.71 732.16,711.22 732.78,711.02 733.4,711.01 734.02,711 734.64,712.45 735.26,712.5 735.88,709.53 736.5,711.52 737.12,710.35 737.74,710.06 738.36,712.45 738.98,712.96 739.6,712.91 740.22,712.4 740.84,713.45 741.46,710.66 742.08,712.11 742.7,710.86 743.32,710.68 743.94,709.59 744.56,712.6 745.18,713.46 745.8,712.72 746.42,711.08 747.04,711.53 747.66,710.35 748.28,710.93 748.9,712.86 749.52,713.35 750.14,712.49 750.76,712.43 751.38,711.49 752,711.81 752.62,711.33 753.24,711.89 753.86,710.87 754.48,712.33 755.1,711.36 755.72,711.62 756.34,711.32 756.96,712.97 757.58,712.66 758.2,710.85 758.82,710.34 759.44,711.79 760.06,711.6 760.68,711.22 761.3,711.6 761.92,713.14 762.54,711.67 763.16,712.93 763.78,711.22 764.4,711.14 765.02,711.68 765.64,711.4 766.26,710.91 766.88,710.23 767.5,710.84 768.12,710.89 768.74,711.31 769.36,712.47 769.98,712.16 770.6,712.75 771.22,711.9 771.84,711.98 772.46,712.17 773.08,712.31 773.7,712.64 774.32,711.1 774.94,711.8 775.56,711.71 776.18,712.73 776.8,712.55 777.42,711.07 778.04,711.79 778.66,712.22 779.28,711.64 779.9,712.75 780.52,711.96 781.14,710.25 781.76,711.51 782.38,712.24 783,710.78 783.62,712.01 784.24,708.75 784.86,712.95 785.48,710.31 786.1,710.72 786.72,710.96 787.34,709.9 787.96,711.43 788.58,710.5 789.2,709.88 789.82,708.77 790.44,711.59 791.06,712.64 791.68,711.38 792.3,711.63 792.92,713.08 793.54,712.15 794.16,712.74 794.78,712.71 795.4,712.44 796.02,712.17 796.64,712.78 797.26,711.93 797.88,711.67 798.5,710.76 799.12,709.2 799.74,710.06 800.36,710.83 800.98,712.37 801.6,711.27 802.22,709.4 802.84,711.72 803.46,712.75 804.08,712.03 804.7,711.86 805.32,711.81 805.94,711.45 806.56,712.87 807.18,710.89 807.8,710.57 808.42,709.79 809.04,710.6 809.66,710.57 810.28,710.6 810.9,711.47 811.52,712.52 812.14,710.28 812.76,711.34 813.38,710.71 814,710.62 814.62,710.82 815.24,711.7 815.86,709.86 816.48,712.66 817.1,711.6 817.72,710.74 818.34,709.68 818.96,712.18 819.58,712.3 820.2,712.52 820.82,711.82 821.44,713.29 822.06,713.41 822.68,714.02 823.3,712.32 823.92,712.6 824.54,711.3 825.16,711.54 825.78,699 826.4,699 827.02,699 827.64,725.09 828.26,725.05 828.88,725.21 829.5,724.67 830.12,724.26 830.74,724.42 831.36,725.59 831.98,725.89 832.6,726.32 833.22,727.77 833.84,724.55 834.46,725.81 835.08,723.87 835.7,724.23 836.32,724.06 836.94,724.91 837.56,726.35 838.18,726.85 838.8,725.76 839.42,726.17 840.04,725.7 840.66,723.92 841.28,726.51 841.9,724.72 842.52,724.44 843.14,724.84 843.76,724.02 844.38,724.18 845,725.63 845.62,724.19 846.24,724.21 846.86,723.13 847.48,722.74 848.1,724.9 848.72,725.45 849.34,724.75 849.96,726.71 850.58,724.36 851.2,725.43 851.82,724.37 852.44,724.87 853.06,725.51 853.68,723.75 854.3,726.17 854.92,725.17 855.54,725.11 856.16,724.88 856.78,725.37 857.4,723.85 858.02,723.58 858.64,725.1 859.26,724.83 859.88,724.59 860.5,725.27 861.12,726.67 861.74,724.32 862.36,722.4 862.98,724.17 863.6,723.12 864.22,724.4 864.84,723.93 865.46,724.86 866.08,726.89 866.7,725.31 867.32,723.38 867.94,723.58 868.56,723.66 869.18,723.29 869.8,725.14 870.42,725.24 871.04,726.1 871.66,726.08 872.28,725.11 872.9,724.45 873.52,724.4 874.14,724.86 874.76,724.31 875.38,723.26 876,727.04 876.62,726.86 877.24,725.11 877.86,724.58 878.48,724.57 879.1,725.39 879.72,724.77 880.34,722.75 880.96,724.84 881.58,725.54 882.2,723.74 882.82,723.31 883.44,724.59 884.06,723.81 884.68,725.82 885.3,726.05 885.92,723.47 886.54,725.19 887.16,723.57 887.78,724 888.4,726.18 889.02,724.98 889.64,725.68 890.26,724.71 890.88,727.01 891.5,725.42 892.12,728.21 892.74,726.24 893.36,724.91 893.98,725.08 894.6,724.77 895.22,726.53 895.84,724.26 896.46,725.78 897.08,726.68 897.7,726.47 898.32,723.97 898.94,726.15 899.56,726.12 900.18,726.41 900.8,724.28 901.42,725.05 902.04,726.23 902.66,725.4 903.28,725.33 903.9,724.67 904.52,724.78 905.14,725.01 905.76,727.64 906.38,725.43 907,724.59 907.62,723.89 908.24,725.24 908.86,725.26 909.48,724.56 910.1,723.2 910.72,726.63 911.34,725.19 911.96,724.33 912.58,725.16 913.2,724.14 913.82,724.59 914.44,722.92 915.06,724.01 915.68,722.1 916.3,725.24 916.92,724.99 917.54,724.7 918.16,724.91 918.78,723.51 919.4,724.64 920.02,724.87 920.64,725.82 921.26,724.36 921.88,724.28 922.5,724.72 923.12,725.11 923.74,725.06 924.36,725.22 924.98,725.87 925.6,725.37 926.22,725.36 926.84,724.85 927.46,723.43 928.08,725.2 928.7,724.57 929.32,724.73 929.94,723.62 930.56,726.44 931.18,726.38 931.8,724.88 932.42,725.48 933.04,726.02 933.66,727.28 934.28,725.64 934.9,726.1 935.52,724.32 936.14,724.59 936.76,724.68 937.38,724.58 938,723.72 938.62,725.31 939.24,724.06 939.86,723.88 940.48,724.6 941.1,726.34 941.72,726.4 942.34,725.08 942.96,723.84 943.58,723.27 944.2,724.64 944.82,725.71 945.44,725.97 946.06,725.04 946.68,724.15 947.3,725.26 947.92,726.31 948.54,725.21 949.16,725.51 949.78,724.74 950.4,724.7 951.02,726.37 951.64,724.66 952.26,726.27 952.88,724.85 953.5,724.95 954.12,725.81 954.74,725.86 955.36,724.56 955.98,724.78 956.6,724.95 957.22,725.04 957.84,724.92 958.46,725.84 959.08,724.14 959.7,725.69 960.32,726.09 960.94,723.95 961.56,724.74 962.18,724.13 962.8,723.22 963.42,724.69 964.04,725.52 964.66,724.65 965.28,725.25 965.9,725.08 966.52,723 967.14,724.4 967.76,725.88 968.38,726.61 969,724.06 969.62,723.26 970.24,725.04 970.86,724.73 971.48,725.09 972.1,724.5 972.72,725.64 973.34,725.81 973.96,724.78 974.58,724.98 975.2,724.9 975.82,725.59 976.44,725.42 977.06,725.43 977.68,725.78 978.3,725.26 978.92,724.56 979.54,725.84 980.16,724.7 980.78,723.65 981.4,723.85 982.02,724.84 982.64,724.48 983.26,724.46 983.88,725.11 984.5,725.46 985.12,724.83 985.74,724.49 986.36,725.06 986.98,725.93 987.6,723.86 988.22,724.21 988.84,723.72 989.46,724 990.08,725.58 990.7,727.18 991.32,725.35 991.94,724.05 992.56,723.77 993.18,725.55 993.8,726.16 994.42,726.21 995.04,726.02 995.66,724.66 996.28,724.17 996.9,724.84 997.52,725.79 998.14,724.63 998.76,723.92 999.38,726 1000,723.69 1000.62,726.3 1001.24,724.13 1001.86,725.53 1002.48,724.65 1003.1,726.19 1003.72,724.78 1004.34,725.04 1004.96,725.46 1005.58,724.71 1006.2,719.14 1006.82,719.53 1007.44,719.44 1008.06,720.36 1008.68,717.01 1009.3,720.74 1009.92,722.33 1010.54,720.93 1011.16,719.7 1011.78,719.62 1012.4,719.41 1013.02,719.22 1013.64,721.36 1014.26,718.43 1014.88,719.17 1015.5,720.08 1016.12,719.05 1016.74,721.63 1017.36,720.31 1017.98,720.42 1018.6,720.02 1019.22,720.09 1019.84,719.59 1020.46,721.31 1021.08,719.73 1021.7,719.54 1022.32,720.82 1022.94,719.4 1023.56,721.82 1024.18,720.38 1024.8,720.26 1025.42,721.93 1026.04,719.31 1026.66,721.85 1027.28,720 1027.9,719.68 1028.52,721.05 1029.14,722.09 1029.76,720.64 1030.38,720.58 1031,720.47 1031.62,720.32 1032.24,720.6 1032.86,720.5 1033.48,719.71 1034.1,719.35 1034.72,718.1 1035.34,720.16 1035.96,719.75 1036.58,720.38 1037.2,720.83 1037.82,720.48 1038.44,721.02 1039.06,720.72 1039.68,721.39 1040.3,720.46 1040.92,719.87 1041.54,720.97 1042.16,719.48 1042.78,721.31 1043.4,720.11 1044.02,719.79 1044.64,720.88 1045.26,722.04 1045.88,719.74 1046.5,719.87 1047.12,721.04 1047.74,722.88 1048.36,718.91 1048.98,719.74 1049.6,719.68 1050.22,719.12 1050.84,722.11 1051.46,721.05 1052.08,720.75 1052.7,720.19 1053.32,721.53 1053.94,721.29 1054.56,720.29 1055.18,719.86 1055.8,720.7 1056.42,720.44 1057.04,719.47 1057.66,719.78 1058.28,719.63 1058.9,721.42 1059.52,719.17 1060.14,720.71 1060.76,720.48 1061.38,720.29 1062,719.86 1062.62,721.29 1063.24,720.23 1063.86,721.53 1064.48,721.04 1065.1,720.61 1065.72,719.82 1066.34,720.24 1066.96,720.61 1067.58,721.34 1068.2,719.5 1068.82,719.49 1069.44,719.36 1070.06,719.58 1070.68,718.58 1071.3,720.77 1071.92,721.73 1072.54,719.21 1073.16,721.42 1073.78,720.13 1074.4,720.78 1075.02,721.81 1075.64,720.53 1076.26,721.17 1076.88,720.37 1077.5,720.53 1078.12,719.87 1078.74,720.52 1079.36,720.53 1079.98,721.38 1080.6,720.64 1081.22,719.14 1081.84,719.58 1082.46,721.56 1083.08,719.93 1083.7,720.78 1084.32,719.86 1084.94,720.69 1085.56,721.8 1086.18,722.62 1086.8,719.76 1087.42,719.53 1088.04,719.41 1088.66,719.53 1089.28,720.15 1089.9,720.27 1090.52,721.39 1091.14,721.04 1091.76,720.39 1092.38,720.43 1093,720.59 1093.62,721.18 1094.24,722.23 1094.86,720.42 1095.48,721.27 1096.1,720.8 1096.72,720.19 1097.34,720.75 1097.96,719.79 1098.58,722.91 1099.2,721.52 1099.82,720.27 1100.44,720.46 1101.06,719.95 1101.68,720.05 1102.3,720.05 1102.92,719.57 1103.54,719.29 1104.16,721.36 1104.78,720.55 1105.4,721 1106.02,720.17 1106.64,719.92 1107.26,719.87 1107.88,722.62 1108.5,721.92 1109.12,721.53 1109.74,720.77 1110.36,720.23 1110.98,720.92 1111.6,721.44 1112.22,719.43 1112.84,719.35 1113.46,720.97 1114.08,720.66 1114.7,720.18 1115.32,719.37 1115.94,718.73 1116.56,719.2 1117.18,719.49 1117.8,720.22 1118.42,720.91 1119.04,720.88 1119.66,721.25 1120.28,720.22 1120.9,721.89 1121.52,720.95 1122.14,720.9 1122.76,720.79 1123.38,719.54 1124,721.47 1124.62,721.7 1125.24,721.5 1125.86,720.84 1126.48,719.59 1127.1,720.85 1127.72,720.64 1128.34,722.5 1128.96,720.12 1129.58,719.95 1130.2,719.74 1130.82,719.6 1131.44,719.11 1132.06,719.69 1132.68,720.29 1133.3,722.2 1133.92,722.5 1134.54,721.98 1135.16,719.76 1135.78,720.77 1136.4,721.32 1137.02,721.25 1137.64,719.96 1138.26,721.39 1138.88,720.44 1139.5,720.03 1140.12,722.04 1140.74,721.57 1141.36,721.01 1141.98,721.82 1142.6,720.49 1143.22,718.86 1143.84,721.37 1144.46,720.64 1145.08,720.58 1145.7,720.23 1146.32,722.23 1146.94,720.85 1147.56,720.01 1148.18,719 1148.8,720.27 1149.42,719.14 1150.04,720.31 1150.66,720.89 1151.28,721.81 1151.9,720.81 1152.52,719.05 1153.14,717.74 1153.76,719.88 1154.38,720.8 1155,718.93 1155.62,721.59 1156.24,720.79 1156.86,722.33 1157.48,719.79 1158.1,719.11 1158.72,721.36 1159.34,721.67 1159.96,719.46 1160.58,721.08 1161.2,721.26 1161.82,720.8 1162.44,719.82 1163.06,719.99 1163.68,719.9 1164.3,720.2 1164.92,720.3 1165.54,721.66 1166.16,719.47 1166.78,722.4 1167.4,720.29 1168.02,720.95 1168.64,719.47 1169.26,720.96 1169.88,719.51 1170.5,722.52 1171.12,721.19 1171.74,721.7 1172.36,721.15 1172.98,720.04 1173.6,720.44 1174.22,721.48 1174.84,721.64" fill="none" stroke="#f0871a" stroke-width="1" stroke-linejoin="round"/><polyline points="640.4,719.52 641.02,720.31 641.64,719.65 642.26,719.42 642.88,718.7 643.5,719.35 644.12,720.93 644.74,720.49 645.36,721.08 645.98,720.33 646.6,720.34 647.22,706 647.84,706 648.46,706 649.08,711.47 649.7,711.48 650.32,709.08 650.94,708.54 651.56,709.37 652.18,710 652.8,710.98 653.42,710.78 654.04,711.37 654.66,710.21 655.28,711.02 655.9,711.28 656.52,710.17 657.14,712.56 657.76,711.76 658.38,712.31 659,710.42 659.62,709.91 660.24,710.24 660.86,710.57 661.48,711.45 662.1,711.2 662.72,710.39 663.34,709.67 663.96,710 664.58,711.98 665.2,710.15 665.82,710.94 666.44,711.3 667.06,709.26 667.68,710.55 668.3,712.19 668.92,708.86 669.54,710.06 670.16,710.53 670.78,709.85 671.4,711.16 672.02,710.8 672.64,709.19 673.26,711.39 673.88,711.65 674.5,712.01 675.12,712.63 675.74,711.56 676.36,711.08 676.98,709.43 677.6,711.2 678.22,710.21 678.84,710.18 679.46,709.29 680.08,709.43 680.7,709.94 681.32,712.05 681.94,708.81 682.56,708.8 683.18,710.66 683.8,712.36 684.42,711.75 685.04,708.9 685.66,707.65 686.28,710.56 686.9,709.94 687.52,709.4 688.14,711.59 688.76,712.17 689.38,711.25 690,711.16 690.62,711.35 691.24,712.66 691.86,711.85 692.48,711.58 693.1,711.56 693.72,709.23 694.34,711.9 694.96,712.07 695.58,711.64 696.2,708.8 696.82,709.7 697.44,711.51 698.06,708.95 698.68,710.23 699.3,711.81 699.92,709.56 700.54,712.32 701.16,711.71 701.78,710.82 702.4,711.16 703.02,711.59 703.64,711.09 704.26,712.12 704.88,710.34 705.5,710.25 706.12,711.84 706.74,711.04 707.36,709.88 707.98,711.66 708.6,712.58 709.22,710.67 709.84,709.26 710.46,710.34 711.08,710.54 711.7,710.42 712.32,712.27 712.94,709.96 713.56,712.02 714.18,709.65 714.8,709.7 715.42,711.28 716.04,712.14 716.66,712.01 717.28,711.42 717.9,711.08 718.52,711.02 719.14,711.48 719.76,710.74 720.38,711.09 721,711.49 721.62,710.94 722.24,711.67 722.86,711.6 723.48,713.17 724.1,711.63 724.72,710.5 725.34,710.33 725.96,710.69 726.58,711.79 727.2,710.63 727.82,711.19 728.44,712.9 729.06,708.4 729.68,709.08 730.3,710.72 730.92,711.22 731.54,711.15 732.16,710.4 732.78,711.44 733.4,711.24 734.02,710.31 734.64,713.38 735.26,711.71 735.88,710.37 736.5,710.6 737.12,710.51 737.74,710.67 738.36,707.77 738.98,709.66 739.6,711.68 740.22,709.69 740.84,710.5 741.46,711.79 742.08,711.94 742.7,712.67 743.32,709.3 743.94,710.11 744.56,710.29 745.18,711.38 745.8,712.12 746.42,708.11 747.04,711.46 747.66,709.34 748.28,711.26 748.9,709.25 749.52,710.68 750.14,712.09 750.76,710.89 751.38,711.03 752,711.72 752.62,711.14 753.24,710.77 753.86,712.48 754.48,712.29 755.1,710.77 755.72,713.81 756.34,710.14 756.96,711.67 757.58,710.68 758.2,710.92 758.82,711.6 759.44,711.2 760.06,711.58 760.68,709.28 761.3,708.83 761.92,711.08 762.54,709.8 763.16,709.47 763.78,708.92 764.4,711.82 765.02,711.82 765.64,712.63 766.26,710.13 766.88,710.67 767.5,709.52 768.12,711.39 768.74,712.67 769.36,710.19 769.98,712.4 770.6,712.21 771.22,710.89 771.84,708.65 772.46,711.92 773.08,710.92 773.7,710.16 774.32,711.11 774.94,711.31 775.56,712.55 776.18,710.03 776.8,711.9 777.42,712.66 778.04,712.77 778.66,711 779.28,710.02 779.9,711.76 780.52,711.12 781.14,711 781.76,712.41 782.38,710.83 783,708.28 783.62,709.87 784.24,708.57 784.86,711.26 785.48,711.24 786.1,710.22 786.72,710.67 787.34,711.69 787.96,711.06 788.58,712.31 789.2,711.04 789.82,711.99 790.44,712.68 791.06,712.95 791.68,710.49 792.3,711.71 792.92,708.92 793.54,709.23 794.16,708.33 794.78,711.48 795.4,709.58 796.02,710.54 796.64,710.54 797.26,710.72 797.88,710.13 798.5,710.92 799.12,712.8 799.74,711.25 800.36,711.47 800.98,712.04 801.6,710.83 802.22,709.42 802.84,709.91 803.46,711.8 804.08,709.19 804.7,709.82 805.32,711.71 805.94,711.85 806.56,711.02 807.18,711.73 807.8,711.17 808.42,709.58 809.04,708.84 809.66,709.7 810.28,711.6 810.9,710.34 811.52,709.71 812.14,709.73 812.76,708.9 813.38,710.29 814,709.4 814.62,710.92 815.24,708.23 815.86,710.65 816.48,710.06 817.1,708.52 817.72,711.14 818.34,710.57 818.96,708.3 819.58,709.34 820.2,710.83 820.82,710.3 821.44,711.56 822.06,711.77 822.68,711.73 823.3,711.34 823.92,712.38 824.54,711.84 825.16,711.5 825.78,697.5 826.4,697.5 827.02,697.5 827.64,705.98 828.26,705.48 828.88,708.03 829.5,704.47 830.12,706.21 830.74,708.71 831.36,705.52 831.98,706.66 832.6,708.21 833.22,706.31 833.84,706.68 834.46,707.13 835.08,705.23 835.7,705.75 836.32,706.27 836.94,706.96 837.56,706.15 838.18,705.82 838.8,704.85 839.42,705.37 840.04,706.86 840.66,706.28 841.28,705.12 841.9,704.9 842.52,708.71 843.14,707.8 843.76,707.06 844.38,703.36 845,706.16 845.62,706.56 846.24,707.96 846.86,706.86 847.48,706.1 848.1,706.59 848.72,703.98 849.34,706.73 849.96,706.5 850.58,705.33 851.2,707.32 851.82,708.26 852.44,704.91 853.06,705.05 853.68,706.13 854.3,706.23 854.92,705.61 855.54,704.85 856.16,708.1 856.78,707.56 857.4,705 858.02,704.32 858.64,707.54 859.26,707.4 859.88,708.28 860.5,707.35 861.12,705.31 861.74,706.15 862.36,703.65 862.98,704.71 863.6,705.68 864.22,706.51 864.84,705.3 865.46,705.72 866.08,706.45 866.7,706.5 867.32,706.8 867.94,706.39 868.56,705.72 869.18,706.81 869.8,706.22 870.42,705.13 871.04,705.14 871.66,705.83 872.28,705.84 872.9,706.14 873.52,706.03 874.14,706.2 874.76,705.89 875.38,704.59 876,706.18 876.62,707.2 877.24,706.72 877.86,705.94 878.48,706.48 879.1,705.03 879.72,703.72 880.34,705.61 880.96,704.9 881.58,706.59 882.2,704.93 882.82,702.89 883.44,704.24 884.06,707.38 884.68,705.86 885.3,704.46 885.92,704.85 886.54,706.34 887.16,706.62 887.78,706.32 888.4,707.7 889.02,707.12 889.64,706.2 890.26,706.7 890.88,707.96 891.5,707.46 892.12,707.42 892.74,705.09 893.36,705.66 893.98,706.73 894.6,705.82 895.22,707.14 895.84,706.88 896.46,707.18 897.08,706 897.7,708.8 898.32,707.92 898.94,706.15 899.56,706.13 900.18,708.88 900.8,706.2 901.42,707 902.04,707.28 902.66,706.26 903.28,704.77 903.9,705.96 904.52,706.39 905.14,707.32 905.76,707.13 906.38,706.25 907,706.99 907.62,706.79 908.24,706.38 908.86,706.14 909.48,705.76 910.1,706.71 910.72,704.98 911.34,705.1 911.96,705.83 912.58,704.35 913.2,705.19 913.82,703.63 914.44,704.77 915.06,706.38 915.68,706.7 916.3,706.08 916.92,705.76 917.54,704.39 918.16,707.69 918.78,706.91 919.4,707.38 920.02,705.31 920.64,705.66 921.26,703.93 921.88,706.44 922.5,707.12 923.12,704.14 923.74,705.57 924.36,706.61 924.98,704.18 925.6,703.63 926.22,704.35 926.84,704.98 927.46,704.25 928.08,705.69 928.7,706.21 929.32,706.74 929.94,706.92 930.56,707.84 931.18,707.65 931.8,704.89 932.42,705.22 933.04,704.68 933.66,704.55 934.28,705.62 934.9,705.93 935.52,706.53 936.14,704.36 936.76,704.31 937.38,705.64 938,705.71 938.62,705.6 939.24,705.85 939.86,705.13 940.48,706.6 941.1,706.51 941.72,706.01 942.34,705.26 942.96,705.66 943.58,702.94 944.2,704.31 944.82,705.7 945.44,704.29 946.06,705.88 946.68,706.14 947.3,704.51 947.92,705.43 948.54,705.54 949.16,706.41 949.78,706.76 950.4,706.11 951.02,705.09 951.64,705.66 952.26,705.86 952.88,706.78 953.5,706.48 954.12,705.3 954.74,704.37 955.36,705.26 955.98,705.04 956.6,704.58 957.22,705.59 957.84,705.38 958.46,705.99 959.08,706.57 959.7,705.66 960.32,708.49 960.94,706.14 961.56,707.24 962.18,706.38 962.8,707.3 963.42,703.65 964.04,704.7 964.66,706.01 965.28,706.67 965.9,708.7 966.52,706.9 967.14,707.59 967.76,707.16 968.38,707.27 969,706.82 969.62,705.99 970.24,706.56 970.86,704.93 971.48,707.08 972.1,705.1 972.72,706.09 973.34,708.35 973.96,706.22 974.58,706.07 975.2,707.29 975.82,706.29 976.44,705.17 977.06,706.12 977.68,706.66 978.3,706.91 978.92,705.33 979.54,707.79 980.16,708.19 980.78,706.46 981.4,706.39 982.02,705.61 982.64,707.48 983.26,705.52 983.88,706.65 984.5,705.6 985.12,705.16 985.74,706.62 986.36,707.59 986.98,706.31 987.6,705.32 988.22,706.76 988.84,706.1 989.46,706.36 990.08,707.75 990.7,707.59 991.32,705.75 991.94,708.46 992.56,706.5 993.18,706.96 993.8,705.48 994.42,705.85 995.04,704.04 995.66,707.57 996.28,707.82 996.9,705.03 997.52,704.15 998.14,703.85 998.76,706.86 999.38,705.67 1000,705.87 1000.62,705.63 1001.24,705.79 1001.86,704.76 1002.48,705.78 1003.1,704.37 1003.72,705.6 1004.34,699.5 1004.96,699.5 1005.58,699.5 1006.2,714.27 1006.82,715.17 1007.44,714.71 1008.06,716.67 1008.68,716.26 1009.3,715.3 1009.92,714.75 1010.54,714.41 1011.16,714.1 1011.78,714.63 1012.4,715.38 1013.02,715.75 1013.64,715.88 1014.26,717.43 1014.88,714.94 1015.5,715.16 1016.12,717.99 1016.74,713.89 1017.36,714.42 1017.98,715.21 1018.6,715.36 1019.22,715.64 1019.84,715.05 1020.46,715.54 1021.08,715.32 1021.7,716 1022.32,713.47 1022.94,713.97 1023.56,714.95 1024.18,714.12 1024.8,713.94 1025.42,715.58 1026.04,714.63 1026.66,715.72 1027.28,716.05 1027.9,715.68 1028.52,715.8 1029.14,715.22 1029.76,713.79 1030.38,714.89 1031,715.59 1031.62,714.75 1032.24,715.01 1032.86,715.91 1033.48,714.46 1034.1,715.69 1034.72,717.16 1035.34,715.04 1035.96,715.31 1036.58,715.07 1037.2,716.71 1037.82,715.82 1038.44,716.22 1039.06,714.71 1039.68,715.09 1040.3,715.17 1040.92,713.42 1041.54,716.28 1042.16,716.32 1042.78,713.67 1043.4,715.64 1044.02,715.16 1044.64,715.64 1045.26,715.65 1045.88,713.79 1046.5,714.71 1047.12,716.59 1047.74,714.9 1048.36,714.12 1048.98,713.62 1049.6,713.66 1050.22,715.23 1050.84,716.9 1051.46,715.97 1052.08,715.6 1052.7,717.51 1053.32,715.14 1053.94,714.51 1054.56,715.59 1055.18,715.83 1055.8,714.31 1056.42,713.85 1057.04,715.22 1057.66,715.45 1058.28,713.94 1058.9,714.75 1059.52,714.57 1060.14,715.53 1060.76,715.15 1061.38,715.1 1062,714.83 1062.62,716.18 1063.24,716.79 1063.86,715.15 1064.48,716.04 1065.1,714.61 1065.72,715.15 1066.34,715.94 1066.96,716.86 1067.58,715.15 1068.2,715.12 1068.82,715.38 1069.44,713.74 1070.06,714.92 1070.68,714.47 1071.3,715.43 1071.92,714.12 1072.54,713.01 1073.16,714.8 1073.78,715.38 1074.4,714.69 1075.02,715.99 1075.64,715.08 1076.26,714.57 1076.88,715.55 1077.5,713.7 1078.12,714.22 1078.74,714.98 1079.36,716.01 1079.98,715.2 1080.6,715.51 1081.22,714.61 1081.84,715.38 1082.46,716.9 1083.08,714.85 1083.7,717.5 1084.32,715.02 1084.94,715.18 1085.56,715.37 1086.18,716.26 1086.8,714.17 1087.42,712.89 1088.04,715.34 1088.66,716.02 1089.28,715.99 1089.9,717.99 1090.52,715.96 1091.14,715.61 1091.76,716.21 1092.38,715.77 1093,716.98 1093.62,714.32 1094.24,714.65 1094.86,711.64 1095.48,715.3 1096.1,714.85 1096.72,716.05 1097.34,717.52 1097.96,715.66 1098.58,715.04 1099.2,714.67 1099.82,714.26 1100.44,714.38 1101.06,715.68 1101.68,715.33 1102.3,715.29 1102.92,715.05 1103.54,716.08 1104.16,715.87 1104.78,715.19 1105.4,715.86 1106.02,715.18 1106.64,714.04 1107.26,716.42 1107.88,715.91 1108.5,714.38 1109.12,716.12 1109.74,715.73 1110.36,713.74 1110.98,716.52 1111.6,715.8 1112.22,716.21 1112.84,715.6 1113.46,715.13 1114.08,713.64 1114.7,715.86 1115.32,715.36 1115.94,714.95 1116.56,715.5 1117.18,715.34 1117.8,715.9 1118.42,714.97 1119.04,715.12 1119.66,713.04 1120.28,714.35 1120.9,715.7 1121.52,716.64 1122.14,715.12 1122.76,715.06 1123.38,716.76 1124,715.19 1124.62,715.93 1125.24,717.02 1125.86,715.6 1126.48,716.51 1127.1,714.75 1127.72,715.32 1128.34,715.15 1128.96,715.3 1129.58,716.35 1130.2,717.82 1130.82,715.06 1131.44,714.6 1132.06,715.58 1132.68,714.22 1133.3,715.5 1133.92,715.83 1134.54,715.05 1135.16,715.7 1135.78,713.75 1136.4,715.67 1137.02,713.75 1137.64,714.21 1138.26,714.45 1138.88,714.65 1139.5,715.95 1140.12,715.43 1140.74,714.85 1141.36,715.67 1141.98,716.88 1142.6,715.54 1143.22,715.63 1143.84,716.53 1144.46,715.73 1145.08,714.02 1145.7,717.45 1146.32,717.86 1146.94,713.75 1147.56,714.87 1148.18,715.55 1148.8,716.24 1149.42,716.08 1150.04,715.1 1150.66,714.13 1151.28,715.09 1151.9,716.21 1152.52,714.31 1153.14,714 1153.76,714.93 1154.38,713.21 1155,714.54 1155.62,714.63 1156.24,715.54 1156.86,714.57 1157.48,714.19 1158.1,714.6 1158.72,715.03 1159.34,714.5 1159.96,715.07 1160.58,715.92 1161.2,716.53 1161.82,717.17 1162.44,714.81 1163.06,714.7 1163.68,712.62 1164.3,716.58 1164.92,714.75 1165.54,715.08 1166.16,715.7 1166.78,713.94 1167.4,715.41 1168.02,715.22 1168.64,713.38 1169.26,715.13 1169.88,716.38 1170.5,713.57 1171.12,715.68 1171.74,715.51 1172.36,715.74 1172.98,715.75 1173.6,716.61 1174.22,715.26 1174.84,716.09" fill="none" stroke="#f6c272" stroke-width="0.9" stroke-linejoin="round"/></g>
<g><text transform="translate(661.7 752.7) scale(0.844 1)" font-size="7.2" fill="#d3d8df">05:00</text><text transform="translate(706.5 752.7) scale(0.844 1)" font-size="7.2" fill="#d3d8df">06:00</text><text transform="translate(751.3 752.7) scale(0.844 1)" font-size="7.2" fill="#d3d8df">07:00</text><text transform="translate(796.1 752.7) scale(0.844 1)" font-size="7.2" fill="#d3d8df">08:00</text><text transform="translate(840.9 752.7) scale(0.844 1)" font-size="7.2" fill="#d3d8df">09:00</text><text transform="translate(885.7 752.7) scale(0.844 1)" font-size="7.2" fill="#d3d8df">10:00</text><text transform="translate(930.5 752.7) scale(0.869 1)" font-size="7.2" fill="#d3d8df">11:00</text><text transform="translate(975.3 752.7) scale(0.844 1)" font-size="7.2" fill="#d3d8df">12:00</text><text transform="translate(1020.1 752.7) scale(0.844 1)" font-size="7.2" fill="#d3d8df">13:00</text><text transform="translate(1064.9 752.7) scale(0.844 1)" font-size="7.2" fill="#d3d8df">14:00</text><text transform="translate(1109.7 752.7) scale(0.844 1)" font-size="7.2" fill="#d3d8df">15:00</text><text transform="translate(1154.5 752.7) scale(0.844 1)" font-size="7.2" fill="#d3d8df">16:00</text><text transform="translate(616.2 614.6) scale(0.999 1)" font-size="9" fill="#d3d8df">100</text><text transform="translate(621 678.8) scale(1.019 1)" font-size="9" fill="#d3d8df">50</text><text x="631.2" y="743.3" font-size="9" fill="#d3d8df" text-anchor="end">0</text></g>
</svg></section>
<section class="panel" id="p7" style="left:1201px;top:575px;width:591px;height:194px">
<h3 class="t" style="left:8.9px;top:8px;font-size:10.8px;line-height:12px;color:#a4bbcc;transform:scaleX(1.001);">Pods Health by Namespace</h3>
<svg width="591" height="194" viewBox="1201 575 591 194">
<polygon points="1379,606.1 1410.44,624.25 1410.44,660.55 1379,678.7 1347.56,660.55 1347.56,624.25" fill="#5fd843"/>
<polygon points="1445.85,606.1 1477.29,624.25 1477.29,660.55 1445.85,678.7 1414.41,660.55 1414.41,624.25" fill="#5fd843"/>
<polygon points="1512.7,606.1 1544.14,624.25 1544.14,660.55 1512.7,678.7 1481.26,660.55 1481.26,624.25" fill="#5fd843"/>
<polygon points="1579.55,606.1 1610.99,624.25 1610.99,660.55 1579.55,678.7 1548.11,660.55 1548.11,624.25" fill="#5fd843"/>
<polygon points="1412.4,664 1443.84,682.15 1443.84,718.45 1412.4,736.6 1380.96,718.45 1380.96,682.15" fill="#5fd843"/>
<polygon points="1479.25,664 1510.69,682.15 1510.69,718.45 1479.25,736.6 1447.81,718.45 1447.81,682.15" fill="#5fd843"/>
<polygon points="1546.1,664 1577.54,682.15 1577.54,718.45 1546.1,736.6 1514.66,718.45 1514.66,682.15" fill="#5fd843"/>
<polygon points="1612.95,664 1644.39,682.15 1644.39,718.45 1612.95,736.6 1581.51,718.45 1581.51,682.15" fill="#5fd843"/>
</svg></section>
<section class="panel" id="p8" style="left:7px;top:808px;width:666px;height:226px">
<h3 class="t" style="left:9.3px;top:9px;font-size:12.4px;line-height:14px;color:#a4bbcc;transform:scaleX(1.009);">Lambda Invocations</h3>
<svg width="666" height="226" viewBox="7 808 666 226">
<g><path d="M38.8 846.4H654" stroke="#2a3a55" stroke-width="1"/><path d="M38.8 899.3H654" stroke="#2a3a55" stroke-width="1"/><path d="M38.8 952.4H654" stroke="#2a3a55" stroke-width="1"/><path d="M38.8 1005.2H654" stroke="#2a3a55" stroke-width="1"/><path d="M87.3 1005.2V1008.6" stroke="#2a3a55" stroke-width="1"/><path d="M143.2 1005.2V1008.6" stroke="#2a3a55" stroke-width="1"/><path d="M199.1 1005.2V1008.6" stroke="#2a3a55" stroke-width="1"/><path d="M255 1005.2V1008.6" stroke="#2a3a55" stroke-width="1"/><path d="M310.9 1005.2V1008.6" stroke="#2a3a55" stroke-width="1"/><path d="M366.8 1005.2V1008.6" stroke="#2a3a55" stroke-width="1"/><path d="M422.7 1005.2V1008.6" stroke="#2a3a55" stroke-width="1"/><path d="M478.6 1005.2V1008.6" stroke="#2a3a55" stroke-width="1"/><path d="M534.5 1005.2V1008.6" stroke="#2a3a55" stroke-width="1"/><path d="M590.4 1005.2V1008.6" stroke="#2a3a55" stroke-width="1"/><path d="M646.3 1005.2V1008.6" stroke="#2a3a55" stroke-width="1"/></g>
<g><path fill="#2a7fc4" d="M43.10 1005.2V994.6h1.43V1005.2zM46.46 1005.2V996.7h1.26V1005.2zM51.50 1005.2V995.7h1.60V1005.2zM51.50 961.8V951.2h1.60V961.8zM53.18 994.6V988.3h1.60V994.6zM54.86 988.3V977.7h1.11V988.3zM56.54 1005.2V994.6h1.43V1005.2zM58.22 1005.2V994.6h1.26V1005.2zM63.26 1005.2V994.6h1.26V1005.2zM66.62 966.0V961.8h1.26V966.0zM69.98 969.2V967.3h1.26V969.2zM76.70 1005.2V994.6h1.11V1005.2zM78.38 1005.2V994.6h1.26V1005.2zM83.42 1005.2V994.6h1.60V1005.2zM83.42 975.6V969.7h1.60V975.6zM85.10 994.6V988.3h1.11V994.6zM90.14 1005.2V994.6h1.11V1005.2zM91.82 994.6V984.0h1.26V994.6zM96.85 1005.2V994.6h1.26V1005.2zM103.57 994.6V984.0h1.43V994.6zM105.25 1005.2V998.8h1.26V1005.2zM111.97 1005.2V994.6h1.60V1005.2zM111.97 973.4V971.6h1.60V973.4zM127.09 1005.2V996.7h1.43V1005.2zM127.09 988.3V977.7h1.43V988.3zM140.53 979.8V969.2h1.26V979.8zM142.21 977.7V971.1h1.11V977.7zM143.89 1005.2V994.6h1.60V1005.2zM148.93 1005.2V994.6h1.43V1005.2zM153.97 1005.2V994.6h1.26V1005.2zM157.33 994.6V988.3h1.11V994.6zM165.73 1005.2V995.7h1.43V1005.2zM184.21 1005.2V995.7h1.43V1005.2zM187.57 1005.2V993.6h1.26V1005.2zM189.25 994.6V984.0h1.60V994.6zM190.93 993.6V983.0h1.26V993.6zM194.29 1005.2V996.7h1.11V1005.2zM195.96 974.5V966.0h1.11V974.5zM199.32 1005.2V998.8h1.11V1005.2zM201.00 985.1V978.7h1.60V985.1zM202.68 1005.2V994.6h1.60V1005.2zM204.36 969.2V958.6h1.26V969.2zM209.40 1005.2V993.6h1.43V1005.2zM211.08 985.1V980.9h1.60V985.1zM216.12 984.0V975.6h1.26V984.0zM219.48 1005.2V994.6h1.11V1005.2zM222.84 995.7V987.2h1.60V995.7zM229.56 971.3V960.7h1.60V971.3zM241.32 933.2V931.1h1.43V933.2zM246.36 1005.2V994.6h1.26V1005.2zM251.40 995.7V983.0h1.11V995.7zM251.40 983.0V972.4h1.11V983.0zM253.08 1005.2V998.8h1.60V1005.2zM254.76 980.9V970.3h1.60V980.9zM256.44 1005.2V994.6h1.26V1005.2zM259.80 1005.2V998.8h1.26V1005.2zM261.48 1005.2V994.6h1.43V1005.2zM268.20 1005.2V994.6h1.11V1005.2zM271.56 1005.2V993.6h1.11V1005.2zM271.56 993.6V980.9h1.11V993.6zM271.56 955.4V947.8h1.11V955.4zM274.92 988.3V984.0h1.60V988.3zM276.60 1005.2V996.7h1.11V1005.2zM279.96 1005.2V994.6h1.43V1005.2zM283.32 986.1V975.6h1.60V986.1zM285.00 1005.2V994.6h1.43V1005.2zM285.00 986.1V977.7h1.43V986.1zM286.68 960.7V955.4h1.26V960.7zM288.36 967.1V962.5h1.43V967.1zM293.40 1005.2V998.8h1.26V1005.2zM295.08 1005.2V996.7h1.43V1005.2zM298.43 1005.2V994.6h1.60V1005.2zM300.11 1005.2V994.6h1.60V1005.2zM301.79 1005.2V994.6h1.26V1005.2zM311.87 995.7V991.4h1.11V995.7zM313.55 993.6V987.2h1.26V993.6zM316.91 1005.2V994.6h1.26V1005.2zM321.95 1005.2V994.6h1.43V1005.2zM323.63 1005.2V994.6h1.60V1005.2zM325.31 1005.2V994.6h1.26V1005.2zM326.99 987.2V978.7h1.26V987.2zM328.67 979.8V969.2h1.11V979.8zM330.35 996.7V988.3h1.26V996.7zM333.71 988.3V979.8h1.60V988.3zM333.71 969.2V962.9h1.60V969.2zM335.39 975.6V965.0h1.60V975.6zM338.75 1005.2V995.7h1.60V1005.2zM338.75 995.7V985.1h1.60V995.7zM338.75 961.8V951.2h1.60V961.8zM340.43 994.6V990.4h1.26V994.6zM353.87 1005.2V994.6h1.26V1005.2zM353.87 984.0V979.8h1.26V984.0zM357.23 965.0V956.5h1.60V965.0zM363.95 1005.2V994.6h1.11V1005.2zM363.95 958.6V950.2h1.11V958.6zM367.31 1005.2V993.6h1.60V1005.2zM375.71 1005.2V994.6h1.11V1005.2zM375.71 962.9V958.6h1.11V962.9zM377.39 976.6V963.9h1.11V976.6zM385.79 1005.2V994.6h1.11V1005.2zM390.83 953.3V948.6h1.26V953.3zM395.87 1005.2V993.6h1.11V1005.2zM395.87 993.6V985.1h1.11V993.6zM399.22 1005.2V994.6h1.26V1005.2zM400.90 969.2V958.6h1.43V969.2zM405.94 1005.2V993.6h1.43V1005.2zM405.94 993.6V987.2h1.43V993.6zM407.62 1005.2V994.6h1.11V1005.2zM416.02 981.9V969.2h1.43V981.9zM421.06 962.9V960.9h1.11V962.9zM432.82 995.7V985.1h1.26V995.7zM434.50 1005.2V998.8h1.43V1005.2zM441.22 1005.2V994.6h1.11V1005.2zM442.90 1005.2V995.7h1.60V1005.2zM444.58 1005.2V998.8h1.60V1005.2zM444.58 998.8V992.5h1.60V998.8zM444.58 965.0V958.0h1.60V965.0zM446.26 1005.2V994.6h1.11V1005.2zM447.94 1005.2V995.7h1.11V1005.2zM452.98 979.8V969.2h1.60V979.8zM454.66 1005.2V994.6h1.26V1005.2zM454.66 984.0V975.6h1.26V984.0zM461.38 1005.2V993.6h1.60V1005.2zM464.74 1005.2V994.6h1.26V1005.2zM471.46 1005.2V995.7h1.60V1005.2zM474.82 994.6V988.3h1.60V994.6zM474.82 988.3V975.6h1.60V988.3zM476.50 1005.2V994.6h1.60V1005.2zM486.58 1005.2V998.8h1.26V1005.2zM488.26 1005.2V994.6h1.26V1005.2zM501.69 974.5V970.1h1.43V974.5zM503.37 1005.2V994.6h1.60V1005.2zM503.37 981.9V977.7h1.60V981.9zM503.37 952.3V949.4h1.60V952.3zM505.05 1005.2V994.6h1.43V1005.2zM506.73 1005.2V998.8h1.11V1005.2zM508.41 1005.2V994.6h1.60V1005.2zM516.81 1005.2V994.6h1.11V1005.2zM523.53 994.6V984.0h1.60V994.6zM530.25 994.6V984.0h1.26V994.6zM531.93 985.1V974.5h1.43V985.1zM535.29 1005.2V994.6h1.26V1005.2zM536.97 962.9V952.3h1.43V962.9zM542.01 967.1V956.5h1.60V967.1zM542.01 956.5V951.7h1.60V956.5zM543.69 984.0V973.4h1.11V984.0zM545.37 994.6V990.4h1.43V994.6zM547.05 956.5V945.9h1.11V956.5zM550.41 984.0V973.4h1.43V984.0zM558.81 1005.2V993.6h1.60V1005.2zM560.49 979.8V969.2h1.60V979.8zM562.17 992.5V984.6h1.60V992.5zM565.53 1005.2V994.6h1.60V1005.2zM565.53 981.9V971.3h1.60V981.9zM570.57 1005.2V994.6h1.26V1005.2zM570.57 981.9V971.3h1.26V981.9zM572.25 1005.2V994.6h1.60V1005.2zM575.61 1005.2V998.8h1.60V1005.2zM575.61 998.8V986.1h1.60V998.8zM575.61 975.6V969.2h1.60V975.6zM580.65 969.2V962.9h1.60V969.2zM582.33 1005.2V994.6h1.11V1005.2zM582.33 962.9V955.8h1.11V962.9zM585.69 998.8V986.1h1.43V998.8zM587.37 1005.2V994.6h1.11V1005.2zM590.73 1005.2V994.6h1.60V1005.2zM592.41 1005.2V994.6h1.11V1005.2zM592.41 981.9V971.3h1.11V981.9zM592.41 971.3V965.1h1.11V971.3zM594.09 1005.2V994.6h1.11V1005.2zM595.77 1005.2V994.6h1.11V1005.2zM595.77 952.3V950.4h1.11V952.3zM599.13 1005.2V998.8h1.43V1005.2zM602.48 972.4V961.8h1.11V972.4zM605.84 975.6V969.2h1.26V975.6zM607.52 984.0V979.8h1.43V984.0zM612.56 1005.2V994.6h1.26V1005.2zM617.60 1005.2V994.6h1.11V1005.2zM620.96 971.3V970.3h1.26V971.3zM622.64 1005.2V995.7h1.60V1005.2zM622.64 995.7V985.1h1.60V995.7zM626.00 942.7V932.2h1.26V942.7zM627.68 1005.2V998.8h1.26V1005.2zM629.36 993.6V983.0h1.43V993.6zM636.08 984.0V971.3h1.43V984.0zM637.76 995.7V983.4h1.26V995.7zM641.12 998.8V990.4h1.11V998.8zM641.12 979.8V975.6h1.11V979.8zM642.80 933.2V922.6h1.43V933.2zM644.48 1005.2V994.6h1.43V1005.2zM644.48 994.6V984.0h1.43V994.6zM646.16 1005.2V994.6h1.11V1005.2zM649.52 1005.2V994.6h1.43V1005.2z"/><path fill="#c9b3d6" d="M43.10 994.6V988.3h1.43V994.6zM43.10 967.1V962.9h1.43V967.1zM44.78 967.1V961.0h1.11V967.1zM46.46 986.1V975.6h1.26V986.1zM53.18 973.4V965.0h1.60V973.4zM54.86 998.8V994.6h1.11V998.8zM54.86 994.6V988.3h1.11V994.6zM54.86 941.7V935.3h1.11V941.7zM61.58 969.2V965.7h1.60V969.2zM63.26 973.4V969.2h1.26V973.4zM64.94 966.0V962.9h1.60V966.0zM66.62 930.0V923.7h1.26V930.0zM68.30 943.8V933.2h1.11V943.8zM69.98 998.8V994.6h1.26V998.8zM73.34 967.1V956.5h1.26V967.1zM80.06 977.7V971.3h1.26V977.7zM80.06 918.4V909.9h1.26V918.4zM81.74 983.0V974.5h1.26V983.0zM81.74 974.5V963.9h1.26V974.5zM91.82 984.0V976.0h1.26V984.0zM93.50 996.7V986.1h1.60V996.7zM96.85 979.8V976.8h1.26V979.8zM100.21 973.4V962.9h1.60V973.4zM100.21 962.9V956.5h1.60V962.9zM103.57 960.7V952.3h1.43V960.7zM105.25 977.7V967.1h1.26V977.7zM108.61 973.4V969.2h1.11V973.4zM108.61 960.7V956.5h1.11V960.7zM111.97 984.0V973.4h1.60V984.0zM115.33 983.0V972.4h1.26V983.0zM118.69 994.6V984.0h1.11V994.6zM123.73 998.8V994.6h1.60V998.8zM125.41 967.1V960.7h1.60V967.1zM125.41 960.7V952.3h1.60V960.7zM125.41 952.3V941.7h1.60V952.3zM135.49 975.6V965.0h1.11V975.6zM138.85 994.6V984.0h1.43V994.6zM138.85 948.0V945.5h1.43V948.0zM140.53 969.2V958.6h1.26V969.2zM153.97 965.0V954.4h1.26V965.0zM157.33 975.6V965.0h1.11V975.6zM162.37 958.6V948.0h1.11V958.6zM165.73 974.5V970.3h1.43V974.5zM169.09 986.1V981.9h1.26V986.1zM169.09 971.3V960.7h1.26V971.3zM172.45 969.2V958.6h1.43V969.2zM172.45 958.6V958.0h1.43V958.6zM180.85 969.2V961.8h1.11V969.2zM185.89 994.6V984.0h1.11V994.6zM185.89 967.1V962.0h1.11V967.1zM187.57 963.9V955.4h1.26V963.9zM192.61 995.7V989.3h1.26V995.7zM195.96 987.2V974.5h1.11V987.2zM199.32 998.8V988.3h1.11V998.8zM199.32 956.5V950.1h1.11V956.5zM201.00 968.1V957.6h1.60V968.1zM206.04 998.8V992.5h1.43V998.8zM207.72 993.6V989.3h1.26V993.6zM209.40 976.6V972.4h1.43V976.6zM212.76 993.6V983.0h1.26V993.6zM212.76 966.0V957.6h1.26V966.0zM214.44 970.3V962.0h1.60V970.3zM217.80 962.9V953.0h1.11V962.9zM221.16 984.0V977.7h1.43V984.0zM224.52 967.1V958.6h1.43V967.1zM224.52 958.6V957.1h1.43V958.6zM226.20 978.7V966.0h1.11V978.7zM229.56 960.7V953.4h1.60V960.7zM231.24 942.7V937.4h1.11V942.7zM232.92 979.8V969.2h1.26V979.8zM234.60 995.7V985.1h1.43V995.7zM234.60 957.6V947.0h1.43V957.6zM234.60 947.0V939.0h1.43V947.0zM236.28 977.7V967.1h1.43V977.7zM241.32 994.6V984.0h1.43V994.6zM241.32 979.8V969.2h1.43V979.8zM241.32 969.2V962.9h1.43V969.2zM241.32 945.9V933.2h1.43V945.9zM246.36 945.9V941.7h1.26V945.9zM248.04 979.8V969.2h1.60V979.8zM251.40 972.4V966.0h1.11V972.4zM253.08 975.6V965.0h1.60V975.6zM254.76 993.6V980.9h1.60V993.6zM256.44 994.6V984.0h1.26V994.6zM259.80 950.1V947.5h1.26V950.1zM261.48 960.7V950.1h1.43V960.7zM263.16 957.6V947.0h1.43V957.6zM268.20 994.6V984.0h1.11V994.6zM271.56 959.7V955.4h1.11V959.7zM279.96 971.3V967.1h1.43V971.3zM279.96 960.7V950.1h1.43V960.7zM281.64 975.6V965.0h1.11V975.6zM281.64 945.9V939.6h1.11V945.9zM283.32 962.9V952.3h1.60V962.9zM291.72 983.0V972.4h1.60V983.0zM298.43 975.6V965.0h1.60V975.6zM298.43 965.0V960.5h1.60V965.0zM300.11 994.6V984.0h1.60V994.6zM300.11 975.6V965.0h1.60V975.6zM303.47 975.6V965.0h1.43V975.6zM303.47 965.0V952.3h1.43V965.0zM303.47 952.3V941.7h1.43V952.3zM303.47 941.7V940.8h1.43V941.7zM305.15 994.6V988.3h1.26V994.6zM308.51 971.3V963.8h1.11V971.3zM310.19 984.0V971.3h1.11V984.0zM310.19 971.3V970.4h1.11V971.3zM318.59 969.2V958.6h1.11V969.2zM320.27 951.2V942.7h1.11V951.2zM323.63 994.6V984.0h1.60V994.6zM323.63 973.4V967.1h1.60V973.4zM325.31 975.6V967.1h1.26V975.6zM325.31 958.6V954.4h1.26V958.6zM328.67 969.2V958.6h1.11V969.2zM328.67 958.6V948.0h1.11V958.6zM328.67 941.7V940.3h1.11V941.7zM332.03 994.6V984.0h1.26V994.6zM333.71 979.8V969.2h1.60V979.8zM337.07 962.9V956.5h1.43V962.9zM337.07 956.5V950.1h1.43V956.5zM343.79 994.6V984.0h1.26V994.6zM345.47 939.6V935.6h1.43V939.6zM347.15 942.7V936.4h1.11V942.7zM348.83 979.8V971.8h1.60V979.8zM350.51 981.9V977.7h1.60V981.9zM353.87 979.8V969.2h1.26V979.8zM355.55 995.7V991.4h1.11V995.7zM355.55 961.8V949.1h1.11V961.8zM355.55 949.1V946.2h1.11V949.1zM357.23 994.6V984.0h1.60V994.6zM357.23 935.3V924.7h1.60V935.3zM362.27 967.1V960.7h1.60V967.1zM362.27 945.9V935.3h1.60V945.9zM370.67 973.4V962.9h1.11V973.4zM375.71 973.4V962.9h1.11V973.4zM377.39 953.3V944.5h1.11V953.3zM380.75 981.9V975.6h1.60V981.9zM384.11 990.4V981.9h1.43V990.4zM385.79 994.6V984.0h1.11V994.6zM385.79 973.4V969.2h1.11V973.4zM385.79 969.2V958.6h1.11V969.2zM387.47 995.7V985.1h1.26V995.7zM389.15 984.0V980.0h1.26V984.0zM395.87 949.1V940.6h1.11V949.1zM395.87 940.6V936.1h1.11V940.6zM397.55 986.1V975.6h1.43V986.1zM400.90 958.6V954.4h1.43V958.6zM402.58 994.6V988.3h1.11V994.6zM402.58 969.2V962.9h1.11V969.2zM404.26 998.8V988.3h1.11V998.8zM405.94 987.2V980.9h1.43V987.2zM407.62 994.6V986.1h1.11V994.6zM409.30 993.6V983.0h1.60V993.6zM412.66 971.3V960.7h1.11V971.3zM414.34 961.8V957.6h1.26V961.8zM417.70 972.4V965.6h1.60V972.4zM419.38 973.4V967.7h1.43V973.4zM422.74 973.4V969.2h1.60V973.4zM422.74 969.2V965.0h1.60V969.2zM426.10 974.5V963.9h1.43V974.5zM426.10 934.3V931.1h1.43V934.3zM431.14 984.0V973.4h1.60V984.0zM436.18 973.4V969.1h1.26V973.4zM441.22 973.4V962.9h1.11V973.4zM444.58 992.5V988.3h1.60V992.5zM444.58 975.6V965.0h1.60V975.6zM446.26 954.4V950.1h1.11V954.4zM446.26 941.7V937.4h1.11V941.7zM446.26 937.4V928.9h1.11V937.4zM449.62 955.4V944.9h1.60V955.4zM449.62 934.3V925.8h1.60V934.3zM451.30 962.9V952.3h1.11V962.9zM452.98 994.6V988.3h1.60V994.6zM452.98 958.6V949.5h1.60V958.6zM454.66 988.3V984.0h1.26V988.3zM454.66 967.1V964.9h1.26V967.1zM458.02 968.1V964.4h1.26V968.1zM459.70 962.9V954.7h1.60V962.9zM463.06 993.6V985.1h1.11V993.6zM464.74 926.9V920.3h1.26V926.9zM469.78 952.3V948.0h1.60V952.3zM469.78 948.0V943.8h1.60V948.0zM471.46 995.7V985.1h1.60V995.7zM476.50 990.4V983.8h1.60V990.4zM478.18 984.0V973.4h1.43V984.0zM479.86 958.6V948.0h1.43V958.6zM491.62 975.6V973.9h1.11V975.6zM493.30 994.6V988.3h1.11V994.6zM498.34 944.9V934.3h1.60V944.9zM506.73 965.0V963.2h1.11V965.0zM513.45 994.6V981.9h1.43V994.6zM513.45 943.8V931.1h1.43V943.8zM516.81 958.6V948.0h1.11V958.6zM520.17 995.7V983.0h1.43V995.7zM520.17 983.0V978.7h1.43V983.0zM520.17 978.7V968.1h1.43V978.7zM521.85 969.2V961.8h1.60V969.2zM528.57 962.9V958.3h1.26V962.9zM530.25 984.0V973.4h1.26V984.0zM530.25 954.4V944.7h1.26V954.4zM547.05 935.3V924.7h1.11V935.3zM548.73 990.4V979.8h1.60V990.4zM548.73 954.4V943.8h1.60V954.4zM555.45 986.1V977.7h1.11V986.1zM557.13 944.9V934.3h1.26V944.9zM557.13 934.3V927.7h1.26V934.3zM558.81 993.6V980.9h1.60V993.6zM563.85 977.7V976.6h1.60V977.7zM568.89 969.2V958.6h1.26V969.2zM577.29 975.6V974.9h1.26V975.6zM578.97 998.8V986.1h1.60V998.8zM580.65 994.6V984.0h1.60V994.6zM582.33 994.6V984.0h1.11V994.6zM589.05 977.7V967.1h1.60V977.7zM592.41 994.6V981.9h1.11V994.6zM595.77 984.0V973.4h1.11V984.0zM602.48 961.8V953.3h1.11V961.8zM612.56 994.6V981.9h1.26V994.6zM612.56 952.3V939.6h1.26V952.3zM615.92 981.9V975.6h1.43V981.9zM615.92 965.0V954.4h1.43V965.0zM615.92 950.1V945.2h1.43V950.1zM617.60 994.6V984.0h1.11V994.6zM619.28 973.4V967.1h1.43V973.4zM626.00 963.9V953.3h1.26V963.9zM626.00 932.2V925.0h1.26V932.2zM631.04 994.6V986.1h1.11V994.6zM632.72 994.6V986.1h1.60V994.6zM632.72 960.7V956.5h1.60V960.7zM632.72 956.5V950.0h1.60V956.5zM636.08 960.7V952.3h1.43V960.7zM646.16 973.4V965.0h1.11V973.4zM646.16 965.0V960.7h1.11V965.0zM646.16 960.7V952.8h1.11V960.7zM649.52 994.6V986.1h1.43V994.6z"/><path fill="#6b4c9a" d="M43.10 988.3V981.9h1.43V988.3zM56.54 986.1V981.9h1.43V986.1zM66.62 923.7V915.0h1.26V923.7zM75.02 974.5V968.1h1.60V974.5zM78.38 973.4V967.3h1.26V973.4zM80.06 988.3V977.7h1.26V988.3zM80.06 939.6V929.0h1.26V939.6zM80.06 909.9V899.3h1.26V909.9zM83.42 994.6V981.9h1.60V994.6zM83.42 981.9V975.6h1.60V981.9zM86.78 998.8V986.1h1.26V998.8zM86.78 962.9V959.2h1.26V962.9zM95.17 972.4V966.0h1.11V972.4zM96.85 994.6V990.4h1.26V994.6zM98.53 969.2V959.2h1.26V969.2zM101.89 983.0V972.4h1.43V983.0zM101.89 972.4V963.8h1.43V972.4zM105.25 967.1V954.4h1.26V967.1zM105.25 950.1V944.4h1.26V950.1zM110.29 971.3V967.7h1.11V971.3zM113.65 996.7V992.5h1.11V996.7zM113.65 986.1V975.6h1.11V986.1zM117.01 988.3V977.7h1.60V988.3zM122.05 963.9V960.4h1.43V963.9zM125.41 941.7V935.0h1.60V941.7zM130.45 960.7V956.1h1.26V960.7zM132.13 970.3V961.8h1.43V970.3zM133.81 972.4V968.1h1.11V972.4zM133.81 947.0V945.4h1.11V947.0zM148.93 967.1V960.8h1.43V967.1zM157.33 965.0V958.6h1.11V965.0zM160.69 994.6V984.0h1.43V994.6zM160.69 977.7V971.1h1.43V977.7zM167.41 979.8V969.2h1.43V979.8zM169.09 960.7V950.0h1.26V960.7zM182.53 965.0V954.4h1.43V965.0zM194.29 986.1V979.8h1.11V986.1zM195.96 966.0V953.3h1.11V966.0zM207.72 989.3V978.7h1.26V989.3zM214.44 995.7V987.2h1.60V995.7zM216.12 975.6V967.1h1.26V975.6zM221.16 977.7V969.2h1.43V977.7zM221.16 969.2V962.0h1.43V969.2zM231.24 993.6V985.1h1.11V993.6zM231.24 966.0V955.4h1.11V966.0zM232.92 994.6V990.4h1.26V994.6zM236.28 998.8V988.3h1.43V998.8zM241.32 954.4V945.9h1.43V954.4zM261.48 994.6V984.0h1.43V994.6zM261.48 965.0V960.7h1.43V965.0zM263.16 966.0V957.6h1.43V966.0zM269.88 984.0V976.7h1.43V984.0zM273.24 941.7V931.3h1.43V941.7zM274.92 954.4V941.7h1.60V954.4zM278.28 977.7V967.1h1.26V977.7zM283.32 952.3V943.7h1.60V952.3zM285.00 960.7V950.4h1.43V960.7zM286.68 981.9V975.6h1.26V981.9zM288.36 977.7V967.1h1.43V977.7zM290.04 965.0V954.4h1.26V965.0zM296.75 969.2V958.6h1.11V969.2zM296.75 958.6V948.0h1.11V958.6zM301.79 973.4V962.9h1.26V973.4zM305.15 956.5V950.1h1.26V956.5zM318.59 996.7V986.1h1.11V996.7zM318.59 958.6V948.0h1.11V958.6zM325.31 954.4V950.5h1.26V954.4zM330.35 950.1V939.6h1.26V950.1zM332.03 967.1V960.7h1.26V967.1zM340.43 969.2V958.6h1.26V969.2zM342.11 981.9V973.4h1.11V981.9zM350.51 967.1V966.4h1.60V967.1zM362.27 960.7V956.5h1.60V960.7zM365.63 994.6V986.1h1.43V994.6zM365.63 937.4V933.2h1.43V937.4zM392.51 973.4V968.7h1.11V973.4zM400.90 986.1V981.9h1.43V986.1zM400.90 945.9V939.6h1.43V945.9zM402.58 988.3V977.7h1.11V988.3zM402.58 977.7V969.2h1.11V977.7zM410.98 981.9V977.6h1.11V981.9zM414.34 957.6V956.2h1.26V957.6zM424.42 975.6V965.2h1.26V975.6zM437.86 956.5V945.9h1.11V956.5zM437.86 935.3V932.8h1.11V935.3zM442.90 968.1V965.2h1.60V968.1zM447.94 987.2V976.6h1.11V987.2zM454.66 975.6V967.1h1.26V975.6zM464.74 984.0V973.4h1.26V984.0zM478.18 994.6V984.0h1.43V994.6zM481.54 985.1V975.6h1.60V985.1zM489.94 994.6V981.9h1.60V994.6zM493.30 971.3V961.1h1.11V971.3zM506.73 998.8V986.1h1.11V998.8zM516.81 979.8V969.2h1.11V979.8zM521.85 977.7V969.2h1.60V977.7zM526.89 988.3V977.7h1.11V988.3zM540.33 994.6V990.4h1.11V994.6zM545.37 981.9V969.2h1.43V981.9zM547.05 916.3V912.0h1.11V916.3zM552.09 998.8V994.6h1.60V998.8zM553.77 975.6V965.0h1.26V975.6zM562.17 996.7V992.5h1.60V996.7zM565.53 971.3V963.5h1.60V971.3zM567.21 956.5V948.0h1.11V956.5zM568.89 988.3V975.6h1.26V988.3zM568.89 958.6V950.1h1.26V958.6zM572.25 981.9V977.7h1.60V981.9zM572.25 965.0V956.0h1.60V965.0zM580.65 973.4V969.2h1.60V973.4zM589.05 956.5V954.2h1.60V956.5zM604.16 986.1V974.5h1.43V986.1zM607.52 971.3V960.7h1.43V971.3zM609.20 986.1V981.9h1.26V986.1zM612.56 962.9V952.3h1.26V962.9zM612.56 939.6V926.9h1.26V939.6zM615.92 975.6V965.0h1.43V975.6zM615.92 954.4V950.1h1.43V954.4zM620.96 988.3V979.8h1.26V988.3zM624.32 969.2V957.4h1.43V969.2zM626.00 995.7V985.1h1.26V995.7zM626.00 953.3V942.7h1.26V953.3zM627.68 941.7V933.2h1.26V941.7zM629.36 966.0V961.8h1.43V966.0z"/><path fill="#f0871a" d="M43.10 981.9V977.7h1.43V981.9zM44.78 988.3V977.7h1.11V988.3zM54.86 977.7V967.1h1.11V977.7zM64.94 987.2V980.9h1.60V987.2zM66.62 961.8V957.6h1.26V961.8zM66.62 936.4V930.0h1.26V936.4zM71.66 973.4V969.2h1.60V973.4zM73.34 931.1V925.6h1.26V931.1zM75.02 1005.2V995.7h1.60V1005.2zM75.02 968.1V963.9h1.60V968.1zM90.14 971.3V960.7h1.11V971.3zM98.53 1005.2V994.6h1.26V1005.2zM105.25 998.8V988.3h1.26V998.8zM110.29 984.0V971.3h1.11V984.0zM117.01 1005.2V994.6h1.60V1005.2zM117.01 994.6V988.3h1.60V994.6zM118.69 984.0V973.4h1.11V984.0zM123.73 1005.2V998.8h1.60V1005.2zM125.41 984.0V973.4h1.60V984.0zM130.45 984.0V973.4h1.26V984.0zM132.13 995.7V983.0h1.43V995.7zM132.13 983.0V970.3h1.43V983.0zM142.21 990.4V977.7h1.11V990.4zM147.25 994.6V984.0h1.60V994.6zM148.93 990.4V977.7h1.43V990.4zM152.29 977.7V967.1h1.60V977.7zM153.97 975.6V965.0h1.26V975.6zM159.01 994.6V990.4h1.60V994.6zM159.01 990.4V982.9h1.60V990.4zM167.41 994.6V984.0h1.43V994.6zM167.41 984.0V979.8h1.43V984.0zM170.77 981.9V971.3h1.11V981.9zM174.13 973.4V962.9h1.11V973.4zM174.13 952.3V939.6h1.11V952.3zM175.81 986.1V977.7h1.26V986.1zM182.53 994.6V986.1h1.43V994.6zM192.61 974.5V966.0h1.26V974.5zM195.96 1005.2V995.7h1.11V1005.2zM195.96 995.7V987.2h1.11V995.7zM197.64 994.6V984.0h1.60V994.6zM201.00 957.6V949.3h1.60V957.6zM202.68 994.6V981.9h1.60V994.6zM202.68 981.9V971.3h1.60V981.9zM206.04 977.7V967.1h1.43V977.7zM214.44 987.2V980.9h1.60V987.2zM216.12 967.1V963.3h1.26V967.1zM219.48 979.8V975.6h1.11V979.8zM226.20 983.0V978.7h1.11V983.0zM227.88 995.7V985.1h1.43V995.7zM229.56 1005.2V994.6h1.60V1005.2zM232.92 1005.2V994.6h1.26V1005.2zM241.32 984.0V979.8h1.43V984.0zM241.32 962.9V954.4h1.43V962.9zM244.68 971.3V962.9h1.11V971.3zM253.08 988.3V975.6h1.60V988.3zM261.48 979.8V973.4h1.43V979.8zM263.16 976.6V966.0h1.43V976.6zM274.92 973.4V962.9h1.60V973.4zM276.60 986.1V975.6h1.11V986.1zM278.28 1005.2V994.6h1.26V1005.2zM279.96 984.0V971.3h1.43V984.0zM283.32 996.7V986.1h1.60V996.7zM286.68 998.8V988.3h1.26V998.8zM296.75 986.1V975.6h1.11V986.1zM305.15 977.7V967.1h1.26V977.7zM313.55 976.6V966.0h1.26V976.6zM328.67 1005.2V994.6h1.11V1005.2zM330.35 988.3V981.9h1.26V988.3zM330.35 981.9V975.6h1.26V981.9zM330.35 975.6V965.0h1.26V975.6zM332.03 984.0V973.4h1.26V984.0zM335.39 994.6V984.0h1.60V994.6zM340.43 979.8V969.2h1.26V979.8zM345.47 981.9V975.6h1.43V981.9zM347.15 993.6V983.0h1.11V993.6zM357.23 1005.2V994.6h1.60V1005.2zM357.23 984.0V973.4h1.60V984.0zM362.27 1005.2V994.6h1.60V1005.2zM363.95 973.4V967.1h1.11V973.4zM368.99 984.0V971.3h1.60V984.0zM368.99 958.6V948.0h1.60V958.6zM370.67 1005.2V996.7h1.11V1005.2zM372.35 1005.2V998.8h1.11V1005.2zM372.35 958.6V948.0h1.11V958.6zM372.35 937.4V929.0h1.11V937.4zM374.03 990.4V979.8h1.43V990.4zM375.71 984.0V973.4h1.11V984.0zM379.07 983.0V974.5h1.26V983.0zM379.07 959.7V954.0h1.26V959.7zM382.43 988.3V977.7h1.26V988.3zM382.43 977.7V967.3h1.26V977.7zM395.87 963.9V959.7h1.11V963.9zM397.55 996.7V986.1h1.43V996.7zM409.30 970.3V961.8h1.60V970.3zM410.98 994.6V981.9h1.11V994.6zM414.34 993.6V985.1h1.26V993.6zM416.02 954.4V951.1h1.43V954.4zM419.38 994.6V984.0h1.43V994.6zM421.06 1005.2V994.6h1.11V1005.2zM421.06 994.6V984.0h1.11V994.6zM422.74 1005.2V994.6h1.60V1005.2zM422.74 965.0V961.4h1.60V965.0zM424.42 994.6V986.1h1.26V994.6zM426.10 1005.2V993.6h1.43V1005.2zM434.50 984.0V973.4h1.43V984.0zM436.18 994.6V984.0h1.26V994.6zM439.54 1005.2V998.8h1.26V1005.2zM442.90 995.7V989.3h1.60V995.7zM447.94 957.6V953.3h1.11V957.6zM449.62 983.0V972.4h1.60V983.0zM456.34 994.6V984.0h1.26V994.6zM458.02 989.3V978.7h1.26V989.3zM458.02 978.7V968.1h1.26V978.7zM464.74 948.0V935.3h1.26V948.0zM466.42 974.5V970.4h1.11V974.5zM468.10 998.8V992.5h1.60V998.8zM484.90 989.3V978.7h1.26V989.3zM489.94 981.9V977.7h1.60V981.9zM496.66 1005.2V994.6h1.11V1005.2zM501.69 983.0V974.5h1.43V983.0zM503.37 977.7V971.3h1.60V977.7zM511.77 971.3V960.7h1.11V971.3zM513.45 981.9V971.3h1.43V981.9zM518.49 988.3V975.6h1.11V988.3zM520.17 1005.2V995.7h1.43V1005.2zM521.85 986.1V977.7h1.60V986.1zM525.21 996.7V990.4h1.11V996.7zM525.21 990.4V984.0h1.11V990.4zM526.89 998.8V988.3h1.11V998.8zM528.57 1005.2V996.7h1.26V1005.2zM531.93 974.5V965.6h1.43V974.5zM535.29 984.0V973.4h1.26V984.0zM536.97 984.0V973.4h1.43V984.0zM538.65 994.6V984.0h1.60V994.6zM538.65 984.0V973.4h1.60V984.0zM540.33 990.4V979.8h1.11V990.4zM542.01 977.7V967.1h1.60V977.7zM547.05 986.1V975.6h1.11V986.1zM547.05 969.2V956.5h1.11V969.2zM548.73 994.6V990.4h1.60V994.6zM550.41 998.8V994.6h1.43V998.8zM557.13 963.9V953.3h1.26V963.9zM560.49 962.9V962.0h1.60V962.9zM567.21 994.6V981.9h1.11V994.6zM568.89 994.6V988.3h1.26V994.6zM573.93 998.8V988.3h1.60V998.8zM573.93 988.3V979.8h1.60V988.3zM573.93 979.8V969.2h1.60V979.8zM580.65 984.0V973.4h1.60V984.0zM585.69 975.6V972.7h1.43V975.6zM595.77 994.6V984.0h1.11V994.6zM597.45 967.1V958.6h1.60V967.1zM602.48 995.7V991.4h1.11V995.7zM605.84 969.2V956.5h1.26V969.2zM607.52 996.7V992.5h1.43V996.7zM609.20 971.3V960.7h1.26V971.3zM609.20 945.9V941.4h1.26V945.9zM610.88 967.1V956.5h1.26V967.1zM612.56 981.9V973.4h1.26V981.9zM614.24 984.0V973.4h1.11V984.0zM617.60 984.0V973.4h1.11V984.0zM619.28 984.0V973.4h1.43V984.0zM620.96 979.8V971.3h1.26V979.8zM624.32 979.8V969.2h1.43V979.8zM627.68 975.6V971.3h1.26V975.6zM627.68 971.3V965.0h1.26V971.3zM636.08 994.6V984.0h1.43V994.6zM642.80 979.8V973.4h1.43V979.8zM642.80 973.4V962.9h1.43V973.4zM647.84 994.6V984.0h1.26V994.6z"/><path fill="#c8ccd4" d="M43.10 977.7V967.1h1.43V977.7zM43.10 962.9V961.9h1.43V962.9zM49.82 954.4V950.1h1.60V954.4zM51.50 970.3V961.8h1.60V970.3zM58.22 960.7V952.3h1.26V960.7zM63.26 952.3V947.8h1.26V952.3zM64.94 980.9V976.6h1.60V980.9zM64.94 976.6V966.0h1.60V976.6zM69.98 977.7V969.2h1.26V977.7zM71.66 945.9V944.2h1.60V945.9zM73.34 956.5V950.1h1.26V956.5zM75.02 963.9V962.6h1.60V963.9zM80.06 899.3V898.3h1.26V899.3zM88.46 983.0V972.4h1.11V983.0zM88.46 972.4V971.4h1.11V972.4zM95.17 961.8V952.5h1.11V961.8zM98.53 994.6V986.1h1.26V994.6zM106.93 965.0V954.4h1.60V965.0zM106.93 954.4V946.0h1.60V954.4zM108.61 969.2V960.7h1.11V969.2zM113.65 965.0V960.4h1.11V965.0zM123.73 958.6V954.4h1.60V958.6zM128.77 980.9V979.4h1.60V980.9zM135.49 965.0V960.8h1.11V965.0zM138.85 971.3V960.7h1.43V971.3zM140.53 958.6V957.6h1.26V958.6zM145.57 977.7V967.1h1.60V977.7zM152.29 994.6V988.3h1.60V994.6zM152.29 967.1V956.5h1.60V967.1zM153.97 954.4V951.6h1.26V954.4zM164.05 981.9V977.7h1.60V981.9zM167.41 969.2V964.2h1.43V969.2zM175.81 960.7V950.1h1.26V960.7zM175.81 950.1V941.7h1.26V950.1zM175.81 941.7V941.1h1.26V941.7zM179.17 984.0V979.8h1.43V984.0zM179.17 979.8V973.4h1.43V979.8zM182.53 986.1V973.4h1.43V986.1zM182.53 973.4V965.0h1.43V973.4zM184.21 978.7V970.3h1.43V978.7zM187.57 955.4V953.5h1.26V955.4zM189.25 971.3V962.7h1.60V971.3zM190.93 983.0V972.4h1.26V983.0zM199.32 967.1V956.5h1.11V967.1zM204.36 958.6V956.2h1.26V958.6zM207.72 963.9V953.7h1.26V963.9zM214.44 980.9V970.3h1.60V980.9zM226.20 966.0V962.4h1.11V966.0zM227.88 980.9V971.4h1.43V980.9zM232.92 990.4V979.8h1.26V990.4zM232.92 969.2V956.5h1.26V969.2zM237.96 983.0V974.8h1.60V983.0zM239.64 965.0V963.2h1.43V965.0zM244.68 962.9V957.8h1.11V962.9zM246.36 952.3V945.9h1.26V952.3zM248.04 965.0V956.6h1.60V965.0zM249.72 984.0V983.0h1.26V984.0zM256.44 979.8V973.4h1.26V979.8zM256.44 960.7V957.6h1.26V960.7zM261.48 969.2V965.0h1.43V969.2zM263.16 995.7V987.2h1.43V995.7zM264.84 981.9V971.3h1.26V981.9zM266.52 988.3V983.2h1.11V988.3zM268.20 958.6V948.0h1.11V958.6zM268.20 948.0V943.8h1.11V948.0zM271.56 970.3V959.7h1.11V970.3zM279.96 933.2V929.0h1.43V933.2zM279.96 929.0V916.3h1.43V929.0zM279.96 899.3V898.3h1.43V899.3zM281.64 929.0V921.3h1.11V929.0zM286.68 965.0V960.7h1.26V965.0zM291.72 993.6V983.0h1.60V993.6zM291.72 972.4V959.7h1.60V972.4zM291.72 959.7V949.1h1.60V959.7zM296.75 996.7V986.1h1.11V996.7zM296.75 948.0V946.6h1.11V948.0zM300.11 965.0V960.1h1.60V965.0zM306.83 977.7V969.2h1.43V977.7zM311.87 968.1V966.7h1.11V968.1zM313.55 966.0V960.1h1.26V966.0zM315.23 987.2V983.2h1.43V987.2zM318.59 948.0V941.9h1.11V948.0zM320.27 961.8V951.2h1.11V961.8zM321.95 986.1V981.9h1.43V986.1zM321.95 962.9V952.3h1.43V962.9zM326.99 978.7V968.1h1.26V978.7zM326.99 968.1V961.4h1.26V968.1zM328.67 948.0V941.7h1.11V948.0zM330.35 929.0V920.5h1.26V929.0zM332.03 960.7V956.5h1.26V960.7zM333.71 962.9V962.0h1.60V962.9zM335.39 965.0V958.6h1.60V965.0zM335.39 954.4V951.8h1.60V954.4zM337.07 950.1V945.9h1.43V950.1zM338.75 974.5V961.8h1.60V974.5zM347.15 919.4V913.1h1.11V919.4zM352.19 998.8V994.6h1.60V998.8zM353.87 969.2V964.9h1.26V969.2zM357.23 924.7V914.2h1.60V924.7zM360.59 952.3V946.5h1.11V952.3zM362.27 935.3V931.1h1.60V935.3zM365.63 948.0V937.4h1.43V948.0zM367.31 989.3V978.7h1.60V989.3zM370.67 996.7V986.1h1.11V996.7zM372.35 977.7V969.2h1.11V977.7zM372.35 948.0V937.4h1.11V948.0zM372.35 929.0V918.4h1.11V929.0zM377.39 993.6V987.2h1.11V993.6zM377.39 963.9V953.3h1.11V963.9zM379.07 963.9V959.7h1.26V963.9zM380.75 975.6V965.0h1.60V975.6zM380.75 965.0V960.0h1.60V965.0zM384.11 981.9V977.7h1.43V981.9zM385.79 958.6V957.5h1.11V958.6zM395.87 959.7V949.1h1.11V959.7zM397.55 956.5V954.0h1.43V956.5zM399.22 969.2V960.7h1.26V969.2zM399.22 960.7V957.8h1.26V960.7zM402.58 962.9V960.3h1.11V962.9zM404.26 965.0V962.8h1.11V965.0zM405.94 940.6V931.8h1.43V940.6zM409.30 961.8V957.6h1.60V961.8zM409.30 936.4V930.5h1.60V936.4zM412.66 998.8V988.3h1.11V998.8zM421.06 973.4V962.9h1.11V973.4zM422.74 981.9V973.4h1.60V981.9zM429.46 994.6V986.1h1.60V994.6zM429.46 971.3V960.7h1.60V971.3zM429.46 960.7V956.5h1.60V960.7zM431.14 943.8V941.5h1.60V943.8zM432.82 985.1V977.2h1.26V985.1zM437.86 973.4V960.7h1.11V973.4zM439.54 965.0V954.4h1.26V965.0zM451.30 952.3V951.7h1.11V952.3zM456.34 984.0V973.4h1.26V984.0zM458.02 993.6V989.3h1.26V993.6zM459.70 994.6V984.0h1.60V994.6zM461.38 976.6V968.1h1.60V976.6zM464.74 935.3V926.9h1.26V935.3zM466.42 978.7V974.5h1.11V978.7zM468.10 958.6V948.0h1.60V958.6zM469.78 967.1V956.5h1.60V967.1zM471.46 985.1V976.4h1.60V985.1zM473.14 973.4V969.5h1.43V973.4zM479.86 990.4V986.1h1.43V990.4zM479.86 986.1V979.8h1.43V986.1zM488.26 962.9V961.8h1.26V962.9zM494.98 954.4V947.3h1.60V954.4zM496.66 954.4V950.1h1.11V954.4zM496.66 926.9V924.5h1.11V926.9zM498.34 925.8V915.4h1.60V925.8zM500.01 957.6V947.0h1.43V957.6zM503.37 962.9V952.3h1.60V962.9zM508.41 960.7V958.4h1.60V960.7zM511.77 937.4V936.7h1.11V937.4zM513.45 956.5V943.8h1.43V956.5zM513.45 931.1V926.9h1.43V931.1zM513.45 907.8V898.3h1.43V907.8zM516.81 990.4V979.8h1.11V990.4zM523.53 967.1V956.5h1.60V967.1zM525.21 975.6V971.3h1.11V975.6zM525.21 971.3V963.6h1.11V971.3zM538.65 969.2V966.2h1.60V969.2zM545.37 990.4V981.9h1.43V990.4zM545.37 956.5V953.1h1.43V956.5zM547.05 945.9V935.3h1.11V945.9zM547.05 912.0V909.3h1.11V912.0zM548.73 965.0V954.4h1.60V965.0zM550.41 973.4V969.5h1.43V973.4zM553.77 965.0V964.0h1.26V965.0zM555.45 977.7V971.9h1.11V977.7zM557.13 995.7V985.1h1.26V995.7zM558.81 980.9V972.0h1.60V980.9zM560.49 969.2V962.9h1.60V969.2zM570.57 971.3V968.8h1.26V971.3zM573.93 965.0V954.4h1.60V965.0zM575.61 969.2V958.6h1.60V969.2zM577.29 986.1V975.6h1.26V986.1zM578.97 975.6V965.0h1.60V975.6zM582.33 973.4V962.9h1.11V973.4zM587.37 973.4V970.6h1.11V973.4zM595.77 962.9V952.3h1.11V962.9zM597.45 922.6V914.3h1.60V922.6zM602.48 942.7V937.6h1.11V942.7zM605.84 956.5V943.8h1.26V956.5zM607.52 960.7V949.3h1.43V960.7zM609.20 996.7V986.1h1.26V996.7zM620.96 998.8V988.3h1.26V998.8zM634.40 975.6V973.8h1.43V975.6zM639.44 977.7V965.0h1.11V977.7zM639.44 960.7V959.1h1.11V960.7zM642.80 922.6V914.2h1.43V922.6zM642.80 914.2V907.8h1.43V914.2zM642.80 907.8V898.3h1.43V907.8z"/><path fill="#a0d4f2" d="M44.78 1005.2V996.7h1.11V1005.2zM46.46 996.7V986.1h1.26V996.7zM48.14 1005.2V994.6h1.43V1005.2zM53.18 1005.2V994.6h1.60V1005.2zM53.18 981.9V973.4h1.60V981.9zM54.86 956.5V952.3h1.11V956.5zM58.22 994.6V981.9h1.26V994.6zM58.22 952.3V951.7h1.26V952.3zM59.90 1005.2V995.7h1.11V1005.2zM61.58 990.4V986.1h1.60V990.4zM64.94 1005.2V993.6h1.60V1005.2zM66.62 1005.2V993.6h1.26V1005.2zM68.30 1005.2V998.8h1.11V1005.2zM68.30 933.2V930.2h1.11V933.2zM71.66 969.2V958.6h1.60V969.2zM75.02 995.7V985.1h1.60V995.7zM76.70 984.0V973.4h1.11V984.0zM76.70 952.3V944.6h1.11V952.3zM80.06 1005.2V994.6h1.26V1005.2zM81.74 1005.2V993.6h1.26V1005.2zM86.78 986.1V975.6h1.26V986.1zM93.50 1005.2V996.7h1.60V1005.2zM95.17 1005.2V993.6h1.11V1005.2zM100.21 994.6V984.0h1.60V994.6zM100.21 984.0V977.7h1.60V984.0zM103.57 973.4V960.7h1.43V973.4zM106.93 1005.2V998.8h1.60V1005.2zM113.65 1005.2V996.7h1.11V1005.2zM115.33 1005.2V993.6h1.26V1005.2zM118.69 973.4V966.5h1.11V973.4zM127.09 996.7V988.3h1.43V996.7zM130.45 994.6V984.0h1.26V994.6zM133.81 985.1V972.4h1.11V985.1zM138.85 984.0V971.3h1.43V984.0zM140.53 1005.2V996.7h1.26V1005.2zM140.53 992.5V979.8h1.26V992.5zM143.89 984.0V973.4h1.60V984.0zM145.57 1005.2V994.6h1.60V1005.2zM145.57 988.3V977.7h1.60V988.3zM150.61 988.3V981.9h1.43V988.3zM150.61 981.9V974.0h1.43V981.9zM152.29 956.5V954.0h1.60V956.5zM153.97 984.0V975.6h1.26V984.0zM155.65 994.6V984.0h1.26V994.6zM157.33 958.6V957.9h1.11V958.6zM159.01 1005.2V994.6h1.60V1005.2zM162.37 948.0V937.4h1.11V948.0zM164.05 992.5V981.9h1.60V992.5zM165.73 985.1V974.5h1.43V985.1zM179.17 1005.2V994.6h1.43V1005.2zM179.17 994.6V984.0h1.43V994.6zM182.53 1005.2V994.6h1.43V1005.2zM185.89 1005.2V994.6h1.11V1005.2zM185.89 984.0V973.4h1.11V984.0zM187.57 985.1V974.5h1.26V985.1zM190.93 1005.2V993.6h1.26V1005.2zM192.61 966.0V961.2h1.26V966.0zM201.00 1005.2V995.7h1.60V1005.2zM202.68 960.7V958.0h1.60V960.7zM204.36 1005.2V994.6h1.26V1005.2zM204.36 994.6V990.4h1.26V994.6zM206.04 1005.2V998.8h1.43V1005.2zM207.72 1005.2V993.6h1.26V1005.2zM209.40 972.4V961.0h1.43V972.4zM214.44 1005.2V995.7h1.60V1005.2zM216.12 1005.2V994.6h1.26V1005.2zM217.80 1005.2V994.6h1.11V1005.2zM217.80 994.6V984.0h1.11V994.6zM219.48 994.6V984.0h1.11V994.6zM219.48 984.0V979.8h1.11V984.0zM221.16 1005.2V994.6h1.43V1005.2zM224.52 986.1V977.7h1.43V986.1zM231.24 1005.2V993.6h1.11V1005.2zM234.60 1005.2V995.7h1.43V1005.2zM236.28 1005.2V998.8h1.43V1005.2zM236.28 967.1V960.1h1.43V967.1zM237.96 1005.2V993.6h1.60V1005.2zM239.64 1005.2V994.6h1.43V1005.2zM241.32 1005.2V994.6h1.43V1005.2zM243.00 948.0V941.2h1.43V948.0zM246.36 994.6V984.0h1.26V994.6zM246.36 973.4V962.9h1.26V973.4zM251.40 1005.2V995.7h1.11V1005.2zM253.08 998.8V988.3h1.60V998.8zM258.12 1005.2V996.7h1.60V1005.2zM259.80 977.7V967.1h1.26V977.7zM263.16 1005.2V995.7h1.43V1005.2zM268.20 979.8V969.2h1.11V979.8zM268.20 943.8V933.2h1.11V943.8zM269.88 1005.2V994.6h1.43V1005.2zM273.24 1005.2V996.7h1.43V1005.2zM273.24 954.4V941.7h1.43V954.4zM278.28 994.6V984.0h1.26V994.6zM286.68 975.6V965.0h1.26V975.6zM288.36 1005.2V994.6h1.43V1005.2zM290.04 1005.2V994.6h1.26V1005.2zM290.04 975.6V965.0h1.26V975.6zM291.72 1005.2V993.6h1.60V1005.2zM293.40 971.3V960.7h1.26V971.3zM310.19 1005.2V994.6h1.11V1005.2zM316.91 984.0V973.4h1.26V984.0zM318.59 1005.2V996.7h1.11V1005.2zM320.27 985.1V974.5h1.11V985.1zM328.67 994.6V990.4h1.11V994.6zM330.35 1005.2V996.7h1.26V1005.2zM332.03 1005.2V994.6h1.26V1005.2zM333.71 1005.2V998.8h1.60V1005.2zM335.39 1005.2V994.6h1.60V1005.2zM337.07 945.9V941.7h1.43V945.9zM340.43 990.4V979.8h1.26V990.4zM342.11 1005.2V998.8h1.11V1005.2zM345.47 1005.2V994.6h1.43V1005.2zM345.47 975.6V965.0h1.43V975.6zM345.47 950.1V939.6h1.43V950.1zM347.15 983.0V976.6h1.11V983.0zM347.15 968.1V963.9h1.11V968.1zM348.83 990.4V979.8h1.60V990.4zM350.51 1005.2V994.6h1.60V1005.2zM352.19 1005.2V998.8h1.60V1005.2zM355.55 972.4V961.8h1.11V972.4zM360.59 994.6V984.0h1.11V994.6zM360.59 958.6V952.3h1.11V958.6zM362.27 956.5V945.9h1.60V956.5zM363.95 994.6V988.3h1.11V994.6zM365.63 1005.2V994.6h1.43V1005.2zM367.31 978.7V966.0h1.60V978.7zM368.99 1005.2V994.6h1.60V1005.2zM374.03 1005.2V994.6h1.43V1005.2zM374.03 994.6V990.4h1.43V994.6zM379.07 993.6V983.0h1.26V993.6zM380.75 1005.2V994.6h1.60V1005.2zM390.83 983.0V974.5h1.26V983.0zM392.51 1005.2V994.6h1.11V1005.2zM394.19 1005.2V994.6h1.26V1005.2zM400.90 1005.2V994.6h1.43V1005.2zM402.58 1005.2V994.6h1.11V1005.2zM407.62 977.7V965.0h1.11V977.7zM409.30 1005.2V993.6h1.60V1005.2zM409.30 983.0V970.3h1.60V983.0zM410.98 1005.2V994.6h1.11V1005.2zM414.34 972.4V961.8h1.26V972.4zM417.70 993.6V983.0h1.60V993.6zM417.70 983.0V972.4h1.60V983.0zM419.38 984.0V973.4h1.43V984.0zM426.10 985.1V974.5h1.43V985.1zM429.46 1005.2V994.6h1.60V1005.2zM431.14 958.6V948.0h1.60V958.6zM436.18 1005.2V994.6h1.26V1005.2zM437.86 945.9V935.3h1.11V945.9zM439.54 954.4V951.2h1.26V954.4zM441.22 994.6V984.0h1.11V994.6zM441.22 984.0V973.4h1.11V984.0zM446.26 994.6V984.0h1.11V994.6zM451.30 1005.2V996.7h1.11V1005.2zM452.98 988.3V984.0h1.60V988.3zM452.98 984.0V979.8h1.60V984.0zM459.70 1005.2V994.6h1.60V1005.2zM463.06 1005.2V993.6h1.11V1005.2zM468.10 1005.2V998.8h1.60V1005.2zM469.78 1005.2V994.6h1.60V1005.2zM476.50 994.6V990.4h1.60V994.6zM478.18 973.4V969.2h1.43V973.4zM483.22 984.0V977.7h1.60V984.0zM491.62 1005.2V994.6h1.11V1005.2zM493.30 1005.2V994.6h1.11V1005.2zM494.98 1005.2V998.8h1.60V1005.2zM496.66 994.6V984.0h1.11V994.6zM496.66 984.0V973.4h1.11V984.0zM500.01 993.6V985.1h1.43V993.6zM500.01 974.5V963.9h1.43V974.5zM505.05 994.6V984.0h1.43V994.6zM505.05 984.0V973.4h1.43V984.0zM508.41 973.4V960.7h1.60V973.4zM510.09 1005.2V998.8h1.60V1005.2zM513.45 1005.2V994.6h1.43V1005.2zM515.13 1005.2V994.6h1.11V1005.2zM515.13 960.7V950.1h1.11V960.7zM516.81 994.6V990.4h1.11V994.6zM518.49 1005.2V994.6h1.11V1005.2zM521.85 1005.2V998.8h1.60V1005.2zM528.57 996.7V992.5h1.26V996.7zM528.57 981.9V975.6h1.26V981.9zM528.57 975.6V969.2h1.26V975.6zM531.93 995.7V985.1h1.43V995.7zM536.97 1005.2V994.6h1.43V1005.2zM542.01 1005.2V994.6h1.60V1005.2zM545.37 1005.2V994.6h1.43V1005.2zM547.05 994.6V986.1h1.11V994.6zM548.73 1005.2V994.6h1.60V1005.2zM548.73 979.8V969.2h1.60V979.8zM552.09 1005.2V998.8h1.60V1005.2zM553.77 1005.2V994.6h1.26V1005.2zM555.45 1005.2V994.6h1.11V1005.2zM560.49 1005.2V994.6h1.60V1005.2zM562.17 1005.2V996.7h1.60V1005.2zM567.21 1005.2V994.6h1.11V1005.2zM572.25 994.6V981.9h1.60V994.6zM573.93 1005.2V998.8h1.60V1005.2zM577.29 1005.2V994.6h1.26V1005.2zM582.33 984.0V973.4h1.11V984.0zM587.37 994.6V984.0h1.11V994.6zM589.05 984.0V977.7h1.60V984.0zM597.45 1005.2V998.8h1.60V1005.2zM599.13 986.1V979.8h1.43V986.1zM600.80 994.6V986.1h1.60V994.6zM602.48 1005.2V995.7h1.11V1005.2zM602.48 985.1V972.4h1.11V985.1zM604.16 1005.2V996.7h1.43V1005.2zM607.52 1005.2V996.7h1.43V1005.2zM609.20 981.9V971.3h1.26V981.9zM610.88 1005.2V996.7h1.26V1005.2zM612.56 973.4V962.9h1.26V973.4zM614.24 958.6V947.0h1.11V958.6zM615.92 1005.2V994.6h1.43V1005.2zM619.28 1005.2V994.6h1.43V1005.2zM624.32 1005.2V998.8h1.43V1005.2zM626.00 974.5V963.9h1.26V974.5zM629.36 951.2V947.4h1.43V951.2zM634.40 1005.2V998.8h1.43V1005.2zM636.08 1005.2V994.6h1.43V1005.2zM637.76 1005.2V995.7h1.26V1005.2zM639.44 1005.2V994.6h1.11V1005.2zM639.44 994.6V988.3h1.11V994.6zM641.12 1005.2V998.8h1.11V1005.2zM642.80 1005.2V994.6h1.43V1005.2zM642.80 994.6V986.1h1.43V994.6zM642.80 986.1V979.8h1.43V986.1z"/><path fill="#f6c272" d="M44.78 996.7V988.3h1.11V996.7zM49.82 986.1V975.6h1.60V986.1zM49.82 975.6V965.0h1.60V975.6zM51.50 983.0V970.3h1.60V983.0zM53.18 988.3V981.9h1.60V988.3zM54.86 967.1V956.5h1.11V967.1zM56.54 969.2V967.6h1.43V969.2zM58.22 981.9V973.4h1.26V981.9zM59.90 995.7V983.0h1.11V995.7zM61.58 994.6V990.4h1.60V994.6zM66.62 993.6V980.9h1.26V993.6zM66.62 980.9V970.3h1.26V980.9zM68.30 998.8V988.3h1.11V998.8zM68.30 988.3V977.7h1.11V988.3zM68.30 977.7V967.1h1.11V977.7zM73.34 975.6V971.3h1.26V975.6zM73.34 939.6V931.1h1.26V939.6zM75.02 985.1V974.5h1.60V985.1zM80.06 960.7V950.1h1.26V960.7zM85.10 988.3V977.7h1.11V988.3zM85.10 965.0V962.7h1.11V965.0zM86.78 975.6V962.9h1.26V975.6zM90.14 994.6V984.0h1.11V994.6zM90.14 960.7V955.8h1.11V960.7zM93.50 973.4V969.2h1.60V973.4zM95.17 993.6V983.0h1.11V993.6zM95.17 983.0V972.4h1.11V983.0zM96.85 990.4V979.8h1.26V990.4zM101.89 993.6V983.0h1.43V993.6zM106.93 988.3V975.6h1.60V988.3zM106.93 975.6V965.0h1.60V975.6zM108.61 1005.2V994.6h1.11V1005.2zM108.61 994.6V984.0h1.11V994.6zM108.61 984.0V973.4h1.11V984.0zM111.97 994.6V984.0h1.60V994.6zM115.33 993.6V983.0h1.26V993.6zM115.33 959.7V952.8h1.26V959.7zM122.05 995.7V987.2h1.43V995.7zM122.05 987.2V974.5h1.43V987.2zM123.73 954.4V952.4h1.60V954.4zM135.49 994.6V990.4h1.11V994.6zM135.49 990.4V986.1h1.11V990.4zM137.17 993.6V985.1h1.26V993.6zM137.17 974.5V970.3h1.26V974.5zM137.17 970.3V968.5h1.26V970.3zM142.21 994.6V990.4h1.11V994.6zM143.89 973.4V963.7h1.60V973.4zM145.57 994.6V988.3h1.60V994.6zM147.25 973.4V962.9h1.60V973.4zM148.93 994.6V990.4h1.43V994.6zM148.93 977.7V967.1h1.43V977.7zM153.97 994.6V984.0h1.26V994.6zM155.65 1005.2V994.6h1.26V1005.2zM162.37 965.0V958.6h1.11V965.0zM169.09 994.6V986.1h1.26V994.6zM172.45 994.6V984.0h1.43V994.6zM172.45 979.8V969.2h1.43V979.8zM174.13 984.0V973.4h1.11V984.0zM174.13 962.9V952.3h1.11V962.9zM175.81 996.7V986.1h1.26V996.7zM180.85 979.8V969.2h1.11V979.8zM184.21 989.3V978.7h1.43V989.3zM184.21 970.3V964.0h1.43V970.3zM187.57 993.6V985.1h1.26V993.6zM189.25 984.0V971.3h1.60V984.0zM192.61 989.3V983.0h1.26V989.3zM192.61 983.0V974.5h1.26V983.0zM194.29 996.7V986.1h1.11V996.7zM197.64 984.0V973.4h1.60V984.0zM199.32 977.7V967.1h1.11V977.7zM201.00 978.7V968.1h1.60V978.7zM202.68 971.3V960.7h1.60V971.3zM204.36 990.4V979.8h1.26V990.4zM207.72 978.7V968.1h1.26V978.7zM209.40 993.6V987.2h1.43V993.6zM211.08 968.1V961.8h1.60V968.1zM212.76 1005.2V993.6h1.26V1005.2zM216.12 994.6V984.0h1.26V994.6zM217.80 984.0V973.4h1.11V984.0zM221.16 994.6V984.0h1.43V994.6zM222.84 1005.2V995.7h1.60V1005.2zM222.84 987.2V980.9h1.60V987.2zM224.52 996.7V986.1h1.43V996.7zM224.52 977.7V967.1h1.43V977.7zM229.56 994.6V988.3h1.60V994.6zM231.24 985.1V976.6h1.11V985.1zM231.24 976.6V966.0h1.11V976.6zM244.68 994.6V984.0h1.11V994.6zM246.36 984.0V973.4h1.26V984.0zM248.04 984.0V979.8h1.60V984.0zM259.80 998.8V988.3h1.26V998.8zM261.48 984.0V979.8h1.43V984.0zM264.84 994.6V981.9h1.26V994.6zM273.24 996.7V986.1h1.43V996.7zM273.24 965.0V954.4h1.43V965.0zM274.92 1005.2V998.8h1.60V1005.2zM274.92 984.0V973.4h1.60V984.0zM279.96 939.6V933.2h1.43V939.6zM279.96 909.9V899.3h1.43V909.9zM281.64 996.7V986.1h1.11V996.7zM288.36 984.0V977.7h1.43V984.0zM290.04 994.6V986.1h1.26V994.6zM290.04 986.1V975.6h1.26V986.1zM296.75 975.6V969.2h1.11V975.6zM305.15 988.3V977.7h1.26V988.3zM306.83 990.4V977.7h1.43V990.4zM310.19 994.6V984.0h1.11V994.6zM313.55 987.2V976.6h1.26V987.2zM315.23 995.7V987.2h1.43V995.7zM320.27 995.7V985.1h1.11V995.7zM320.27 974.5V961.8h1.11V974.5zM321.95 981.9V971.3h1.43V981.9zM321.95 971.3V962.9h1.43V971.3zM323.63 967.1V962.9h1.60V967.1zM323.63 962.9V956.5h1.60V962.9zM328.67 990.4V979.8h1.11V990.4zM332.03 973.4V967.1h1.26V973.4zM333.71 998.8V988.3h1.60V998.8zM337.07 994.6V984.0h1.43V994.6zM337.07 973.4V962.9h1.43V973.4zM337.07 941.7V938.9h1.43V941.7zM343.79 984.0V973.4h1.26V984.0zM343.79 973.4V962.9h1.26V973.4zM345.47 994.6V981.9h1.43V994.6zM345.47 965.0V960.7h1.43V965.0zM347.15 976.6V968.1h1.11V976.6zM347.15 963.9V953.3h1.11V963.9zM347.15 936.4V925.8h1.11V936.4zM348.83 994.6V990.4h1.60V994.6zM353.87 994.6V984.0h1.26V994.6zM358.91 994.6V986.3h1.26V994.6zM360.59 984.0V979.8h1.11V984.0zM362.27 984.0V973.4h1.60V984.0zM363.95 988.3V984.0h1.11V988.3zM363.95 984.0V973.4h1.11V984.0zM363.95 967.1V958.6h1.11V967.1zM365.63 986.1V975.6h1.43V986.1zM365.63 975.6V969.2h1.43V975.6zM367.31 993.6V989.3h1.60V993.6zM372.35 998.8V990.4h1.11V998.8zM372.35 990.4V977.7h1.11V990.4zM372.35 969.2V958.6h1.11V969.2zM374.03 979.8V971.3h1.43V979.8zM374.03 971.3V965.0h1.43V971.3zM374.03 958.6V952.2h1.43V958.6zM375.71 994.6V984.0h1.11V994.6zM375.71 958.6V952.1h1.11V958.6zM377.39 987.2V976.6h1.11V987.2zM379.07 974.5V963.9h1.26V974.5zM382.43 994.6V988.3h1.26V994.6zM387.47 985.1V974.5h1.26V985.1zM387.47 974.5V963.9h1.26V974.5zM390.83 974.5V966.0h1.26V974.5zM395.87 985.1V972.4h1.11V985.1zM395.87 972.4V963.9h1.11V972.4zM399.22 994.6V990.4h1.26V994.6zM400.90 994.6V986.1h1.43V994.6zM400.90 981.9V973.4h1.43V981.9zM404.26 1005.2V998.8h1.11V1005.2zM404.26 988.3V977.7h1.11V988.3zM404.26 977.7V965.0h1.11V977.7zM405.94 963.9V953.3h1.43V963.9zM405.94 949.1V940.6h1.43V949.1zM407.62 986.1V977.7h1.11V986.1zM407.62 965.0V959.6h1.11V965.0zM414.34 985.1V972.4h1.26V985.1zM416.02 994.6V981.9h1.43V994.6zM421.06 984.0V973.4h1.11V984.0zM426.10 963.9V953.3h1.43V963.9zM429.46 986.1V975.6h1.60V986.1zM431.14 994.6V984.0h1.60V994.6zM434.50 994.6V984.0h1.43V994.6zM442.90 978.7V968.1h1.60V978.7zM444.58 981.9V975.6h1.60V981.9zM446.26 973.4V965.0h1.11V973.4zM447.94 995.7V987.2h1.11V995.7zM447.94 976.6V966.0h1.11V976.6zM449.62 993.6V983.0h1.60V993.6zM451.30 996.7V986.1h1.11V996.7zM452.98 969.2V958.6h1.60V969.2zM461.38 987.2V976.6h1.60V987.2zM466.42 995.7V989.3h1.11V995.7zM466.42 989.3V978.7h1.11V989.3zM469.78 973.4V967.1h1.60V973.4zM473.14 986.1V973.4h1.43V986.1zM479.86 948.0V941.7h1.43V948.0zM481.54 995.7V985.1h1.60V995.7zM483.22 977.7V967.1h1.60V977.7zM486.58 998.8V988.3h1.26V998.8zM488.26 984.0V973.4h1.26V984.0zM488.26 973.4V962.9h1.26V973.4zM493.30 988.3V975.6h1.11V988.3zM496.66 973.4V962.9h1.11V973.4zM498.34 987.2V976.6h1.60V987.2zM498.34 955.4V944.9h1.60V955.4zM506.73 975.6V965.0h1.11V975.6zM511.77 998.8V988.3h1.11V998.8zM511.77 977.7V971.3h1.11V977.7zM515.13 994.6V981.9h1.11V994.6zM515.13 981.9V977.7h1.11V981.9zM518.49 994.6V988.3h1.11V994.6zM518.49 975.6V965.0h1.11V975.6zM520.17 968.1V957.6h1.43V968.1zM521.85 998.8V986.1h1.60V998.8zM523.53 984.0V973.4h1.60V984.0zM525.21 984.0V975.6h1.11V984.0zM535.29 994.6V984.0h1.26V994.6zM535.29 973.4V962.9h1.26V973.4zM536.97 994.6V984.0h1.43V994.6zM538.65 973.4V969.2h1.60V973.4zM540.33 979.8V975.6h1.11V979.8zM540.33 975.6V967.1h1.11V975.6zM543.69 994.6V984.0h1.11V994.6zM547.05 975.6V969.2h1.11V975.6zM548.73 969.2V965.0h1.60V969.2zM548.73 943.8V940.0h1.60V943.8zM552.09 979.8V969.2h1.60V979.8zM552.09 969.2V958.6h1.60V969.2zM557.13 974.5V963.9h1.26V974.5zM560.49 990.4V979.8h1.60V990.4zM563.85 981.9V977.7h1.60V981.9zM567.21 981.9V975.6h1.11V981.9zM567.21 948.0V938.4h1.11V948.0zM570.57 994.6V986.1h1.26V994.6zM572.25 977.7V965.0h1.60V977.7zM577.29 994.6V986.1h1.26V994.6zM578.97 1005.2V998.8h1.60V1005.2zM578.97 965.0V961.6h1.60V965.0zM584.01 994.6V984.0h1.11V994.6zM584.01 984.0V973.4h1.11V984.0zM584.01 973.4V971.2h1.11V973.4zM589.05 994.6V984.0h1.60V994.6zM590.73 994.6V984.0h1.60V994.6zM590.73 973.4V970.1h1.60V973.4zM595.77 973.4V962.9h1.11V973.4zM597.45 988.3V977.7h1.60V988.3zM597.45 943.8V931.1h1.60V943.8zM600.80 986.1V979.9h1.60V986.1zM605.84 986.1V975.6h1.26V986.1zM615.92 988.3V981.9h1.43V988.3zM619.28 994.6V984.0h1.43V994.6zM627.68 986.1V975.6h1.26V986.1zM627.68 933.2V927.2h1.26V933.2zM629.36 983.0V972.4h1.43V983.0zM629.36 972.4V966.0h1.43V972.4zM631.04 986.1V979.8h1.11V986.1zM631.04 979.8V969.2h1.11V979.8zM631.04 969.2V962.9h1.11V969.2zM632.72 981.9V971.3h1.60V981.9zM632.72 971.3V960.7h1.60V971.3zM634.40 988.3V975.6h1.43V988.3zM641.12 962.9V956.0h1.11V962.9zM642.80 952.3V941.7h1.43V952.3zM642.80 941.7V933.2h1.43V941.7zM644.48 973.4V965.7h1.43V973.4zM646.16 984.0V973.4h1.11V984.0z"/><path fill="#8c8c9c" d="M44.78 977.7V967.1h1.11V977.7zM46.46 975.6V974.3h1.26V975.6zM56.54 981.9V969.2h1.43V981.9zM59.90 983.0V972.4h1.11V983.0zM63.26 969.2V962.9h1.26V969.2zM66.62 944.9V936.4h1.26V944.9zM68.30 956.5V950.1h1.11V956.5zM68.30 950.1V943.8h1.11V950.1zM71.66 984.0V973.4h1.60V984.0zM71.66 958.6V954.4h1.60V958.6zM73.34 971.3V967.1h1.26V971.3zM81.74 963.9V955.8h1.26V963.9zM85.10 977.7V965.0h1.11V977.7zM93.50 969.2V965.0h1.60V969.2zM93.50 965.0V960.7h1.60V965.0zM100.21 956.5V950.8h1.60V956.5zM105.25 954.4V950.1h1.26V954.4zM108.61 948.0V945.3h1.11V948.0zM115.33 972.4V959.7h1.26V972.4zM132.13 961.8V959.3h1.43V961.8zM138.85 960.7V948.0h1.43V960.7zM140.53 996.7V992.5h1.26V996.7zM145.57 967.1V959.2h1.60V967.1zM155.65 977.7V973.4h1.26V977.7zM160.69 984.0V977.7h1.43V984.0zM162.37 937.4V924.7h1.11V937.4zM162.37 924.7V922.5h1.11V924.7zM164.05 967.1V957.2h1.60V967.1zM165.73 970.3V959.7h1.43V970.3zM174.13 939.6V932.8h1.11V939.6zM175.81 971.3V960.7h1.26V971.3zM179.17 973.4V970.1h1.43V973.4zM197.64 973.4V967.1h1.60V973.4zM199.32 950.1V947.4h1.11V950.1zM207.72 968.1V963.9h1.26V968.1zM212.76 949.1V938.5h1.26V949.1zM217.80 973.4V962.9h1.11V973.4zM222.84 980.9V969.1h1.60V980.9zM232.92 956.5V948.5h1.26V956.5zM246.36 962.9V952.3h1.26V962.9zM251.40 966.0V958.6h1.11V966.0zM253.08 965.0V953.1h1.60V965.0zM256.44 973.4V960.7h1.26V973.4zM261.48 950.1V949.2h1.43V950.1zM274.92 962.9V954.4h1.60V962.9zM276.60 965.0V959.8h1.11V965.0zM281.64 939.6V929.0h1.11V939.6zM285.00 967.1V960.7h1.43V967.1zM295.08 962.9V956.5h1.43V962.9zM311.87 978.7V968.1h1.11V978.7zM323.63 945.9V933.2h1.60V945.9zM325.31 967.1V958.6h1.26V967.1zM326.99 993.6V987.2h1.26V993.6zM330.35 939.6V929.0h1.26V939.6zM330.35 920.5V918.2h1.26V920.5zM332.03 956.5V955.3h1.26V956.5zM335.39 958.6V954.4h1.60V958.6zM338.75 951.2V942.3h1.60V951.2zM342.11 973.4V962.9h1.11V973.4zM343.79 962.9V952.3h1.26V962.9zM343.79 952.3V949.2h1.26V952.3zM345.47 960.7V950.1h1.43V960.7zM347.15 925.8V919.4h1.11V925.8zM352.19 960.7V952.3h1.60V960.7zM352.19 952.3V941.7h1.60V952.3zM352.19 941.7V936.7h1.60V941.7zM365.63 933.2V931.6h1.43V933.2zM368.99 948.0V943.8h1.60V948.0zM368.99 943.8V937.4h1.60V943.8zM390.83 966.0V953.3h1.26V966.0zM394.19 973.4V962.9h1.26V973.4zM394.19 962.9V958.8h1.26V962.9zM397.55 971.3V960.7h1.43V971.3zM400.90 950.1V945.9h1.43V950.1zM400.90 939.6V939.0h1.43V939.6zM405.94 980.9V974.5h1.43V980.9zM405.94 953.3V949.1h1.43V953.3zM409.30 957.6V949.1h1.60V957.6zM412.66 960.7V951.6h1.11V960.7zM416.02 969.2V965.0h1.43V969.2zM416.02 965.0V954.4h1.43V965.0zM431.14 948.0V943.8h1.60V948.0zM434.50 960.7V955.4h1.43V960.7zM437.86 960.7V956.5h1.11V960.7zM439.54 975.6V965.0h1.26V975.6zM446.26 950.1V941.7h1.11V950.1zM449.62 972.4V966.0h1.60V972.4zM463.06 985.1V978.1h1.11V985.1zM468.10 992.5V984.0h1.60V992.5zM468.10 984.0V979.8h1.60V984.0zM469.78 984.0V973.4h1.60V984.0zM474.82 975.6V974.2h1.60V975.6zM478.18 960.7V957.2h1.43V960.7zM486.58 981.9V973.9h1.26V981.9zM491.62 984.0V975.6h1.11V984.0zM493.30 975.6V971.3h1.11V975.6zM496.66 950.1V937.4h1.11V950.1zM500.01 963.9V957.6h1.43V963.9zM503.37 971.3V962.9h1.60V971.3zM513.45 926.9V918.4h1.43V926.9zM513.45 918.4V907.8h1.43V918.4zM516.81 969.2V958.6h1.11V969.2zM518.49 965.0V960.7h1.11V965.0zM526.89 977.7V971.3h1.11V977.7zM528.57 969.2V962.9h1.26V969.2zM533.61 975.6V972.7h1.11V975.6zM540.33 967.1V956.5h1.11V967.1zM545.37 969.2V956.5h1.43V969.2zM552.09 958.6V951.9h1.60V958.6zM553.77 986.1V975.6h1.26V986.1zM557.13 953.3V944.9h1.26V953.3zM568.89 950.1V945.0h1.26V950.1zM573.93 954.4V950.9h1.60V954.4zM587.37 984.0V973.4h1.11V984.0zM594.09 990.4V986.9h1.11V990.4zM597.45 948.0V943.8h1.60V948.0zM597.45 931.1V926.9h1.60V931.1zM597.45 926.9V922.6h1.60V926.9zM599.13 979.8V969.4h1.43V979.8zM609.20 960.7V956.5h1.26V960.7zM609.20 956.5V945.9h1.26V956.5zM614.24 969.2V958.6h1.11V969.2zM622.64 985.1V978.7h1.60V985.1zM627.68 948.0V941.7h1.26V948.0zM631.04 962.9V956.2h1.11V962.9zM639.44 965.0V960.7h1.11V965.0zM644.48 979.8V973.4h1.43V979.8zM649.52 965.0V962.1h1.43V965.0z"/><path fill="#1a5a96" d="M48.14 994.6V989.3h1.43V994.6zM49.82 965.0V954.4h1.60V965.0zM61.58 979.8V969.2h1.60V979.8zM71.66 954.4V945.9h1.60V954.4zM76.70 962.9V952.3h1.11V962.9zM80.06 929.0V918.4h1.26V929.0zM108.61 956.5V948.0h1.11V956.5zM110.29 1005.2V994.6h1.11V1005.2zM113.65 975.6V965.0h1.11V975.6zM117.01 967.1V957.2h1.60V967.1zM120.37 965.0V959.4h1.60V965.0zM123.73 971.3V958.6h1.60V971.3zM130.45 973.4V960.7h1.26V973.4zM133.81 968.1V957.6h1.11V968.1zM147.25 962.9V954.6h1.60V962.9zM155.65 984.0V977.7h1.26V984.0zM165.73 959.7V954.8h1.43V959.7zM177.49 981.9V970.7h1.43V981.9zM185.89 973.4V967.1h1.11V973.4zM187.57 968.1V963.9h1.26V968.1zM189.25 1005.2V994.6h1.60V1005.2zM197.64 967.1V959.3h1.60V967.1zM206.04 967.1V957.1h1.43V967.1zM211.08 961.8V951.2h1.60V961.8zM211.08 940.6V934.5h1.60V940.6zM219.48 975.6V965.0h1.11V975.6zM219.48 965.0V960.5h1.11V965.0zM226.20 1005.2V993.6h1.11V1005.2zM231.24 955.4V942.7h1.11V955.4zM234.60 961.8V957.6h1.43V961.8zM239.64 977.7V965.0h1.43V977.7zM248.04 969.2V965.0h1.60V969.2zM259.80 962.9V950.1h1.26V962.9zM279.96 916.3V909.9h1.43V916.3zM283.32 1005.2V996.7h1.60V1005.2zM293.40 954.4V943.8h1.26V954.4zM293.40 943.8V941.8h1.26V943.8zM295.08 973.4V962.9h1.43V973.4zM295.08 956.5V955.0h1.43V956.5zM296.75 1005.2V996.7h1.11V1005.2zM305.15 967.1V956.5h1.26V967.1zM306.83 969.2V967.2h1.43V969.2zM308.51 1005.2V996.7h1.11V1005.2zM316.91 973.4V965.0h1.26V973.4zM323.63 922.6V917.6h1.60V922.6zM350.51 977.7V967.1h1.60V977.7zM357.23 945.9V935.3h1.60V945.9zM360.59 969.2V958.6h1.11V969.2zM365.63 958.6V948.0h1.43V958.6zM384.11 977.7V970.1h1.43V977.7zM387.47 963.9V962.3h1.26V963.9zM397.55 1005.2V996.7h1.43V1005.2zM397.55 960.7V956.5h1.43V960.7zM400.90 954.4V950.1h1.43V954.4zM426.10 953.3V942.7h1.43V953.3zM429.46 975.6V971.3h1.60V975.6zM434.50 973.4V960.7h1.43V973.4zM441.22 962.9V961.8h1.11V962.9zM447.94 966.0V957.6h1.11V966.0zM447.94 953.3V943.3h1.11V953.3zM449.62 944.9V934.3h1.60V944.9zM461.38 968.1V963.0h1.60V968.1zM469.78 956.5V952.3h1.60V956.5zM478.18 969.2V960.7h1.43V969.2zM481.54 1005.2V995.7h1.60V1005.2zM483.22 967.1V965.8h1.60V967.1zM484.90 978.7V971.3h1.26V978.7zM489.94 977.7V971.5h1.60V977.7zM494.98 965.0V954.4h1.60V965.0zM500.01 947.0V943.8h1.43V947.0zM510.09 977.7V976.4h1.60V977.7zM511.77 960.7V948.0h1.11V960.7zM511.77 948.0V937.4h1.11V948.0zM515.13 950.1V942.0h1.11V950.1zM518.49 960.7V959.4h1.11V960.7zM520.17 957.6V950.2h1.43V957.6zM523.53 973.4V967.1h1.60V973.4zM526.89 971.3V969.2h1.11V971.3zM543.69 973.4V967.4h1.11V973.4zM547.05 924.7V916.3h1.11V924.7zM550.41 1005.2V998.8h1.43V1005.2zM573.93 969.2V965.0h1.60V969.2zM589.05 967.1V956.5h1.60V967.1zM617.60 960.7V956.5h1.11V960.7zM619.28 967.1V958.6h1.43V967.1zM627.68 954.4V948.0h1.26V954.4zM636.08 971.3V960.7h1.43V971.3zM636.08 952.3V949.3h1.43V952.3zM641.12 975.6V962.9h1.11V975.6zM647.84 984.0V979.1h1.26V984.0zM649.52 973.4V965.0h1.43V973.4z"/><path fill="#37a837" d="M49.82 1005.2V994.6h1.60V1005.2zM51.50 995.7V983.0h1.60V995.7zM63.26 994.6V984.0h1.26V994.6zM73.34 1005.2V994.6h1.26V1005.2zM76.70 994.6V984.0h1.11V994.6zM76.70 973.4V962.9h1.11V973.4zM78.38 994.6V984.0h1.26V994.6zM86.78 1005.2V998.8h1.26V1005.2zM100.21 977.7V973.4h1.60V977.7zM103.57 984.0V973.4h1.43V984.0zM106.93 998.8V988.3h1.60V998.8zM118.69 1005.2V994.6h1.11V1005.2zM127.09 977.7V967.1h1.43V977.7zM130.45 1005.2V994.6h1.26V1005.2zM147.25 1005.2V994.6h1.60V1005.2zM150.61 1005.2V996.7h1.43V1005.2zM162.37 977.7V965.0h1.11V977.7zM164.05 1005.2V998.8h1.60V1005.2zM164.05 998.8V992.5h1.60V998.8zM164.05 977.7V967.1h1.60V977.7zM167.41 1005.2V994.6h1.43V1005.2zM192.61 1005.2V995.7h1.26V1005.2zM197.64 1005.2V994.6h1.60V1005.2zM201.00 995.7V991.4h1.60V995.7zM201.00 991.4V985.1h1.60V991.4zM209.40 987.2V976.6h1.43V987.2zM229.56 988.3V981.9h1.60V988.3zM239.64 984.0V977.7h1.43V984.0zM249.72 994.6V984.0h1.26V994.6zM254.76 1005.2V993.6h1.60V1005.2zM266.52 1005.2V996.7h1.11V1005.2zM266.52 996.7V988.3h1.11V996.7zM278.28 984.0V977.7h1.26V984.0zM279.96 994.6V984.0h1.43V994.6zM281.64 965.0V954.4h1.11V965.0zM285.00 994.6V986.1h1.43V994.6zM285.00 977.7V967.1h1.43V977.7zM286.68 1005.2V998.8h1.26V1005.2zM286.68 988.3V981.9h1.26V988.3zM298.43 994.6V986.1h1.60V994.6zM301.79 994.6V984.0h1.26V994.6zM303.47 1005.2V994.6h1.43V1005.2zM303.47 994.6V986.1h1.43V994.6zM308.51 996.7V984.0h1.11V996.7zM311.87 1005.2V995.7h1.11V1005.2zM315.23 1005.2V995.7h1.43V1005.2zM318.59 975.6V969.2h1.11V975.6zM325.31 984.0V975.6h1.26V984.0zM335.39 984.0V975.6h1.60V984.0zM337.07 1005.2V994.6h1.43V1005.2zM347.15 1005.2V993.6h1.11V1005.2zM347.15 953.3V942.7h1.11V953.3zM352.19 984.0V971.3h1.60V984.0zM352.19 971.3V960.7h1.60V971.3zM362.27 973.4V967.1h1.60V973.4zM365.63 969.2V958.6h1.43V969.2zM368.99 994.6V984.0h1.60V994.6zM389.15 994.6V984.0h1.26V994.6zM392.51 984.0V973.4h1.11V984.0zM400.90 973.4V969.2h1.43V973.4zM437.86 994.6V984.0h1.11V994.6zM444.58 988.3V981.9h1.60V988.3zM454.66 994.6V988.3h1.26V994.6zM479.86 994.6V990.4h1.43V994.6zM479.86 979.8V969.2h1.43V979.8zM479.86 969.2V958.6h1.43V969.2zM483.22 1005.2V994.6h1.60V1005.2zM483.22 994.6V984.0h1.60V994.6zM486.58 988.3V981.9h1.26V988.3zM491.62 994.6V984.0h1.11V994.6zM494.98 988.3V977.7h1.60V988.3zM498.34 966.0V955.4h1.60V966.0zM508.41 994.6V986.1h1.60V994.6zM510.09 988.3V977.7h1.60V988.3zM530.25 1005.2V994.6h1.26V1005.2zM531.93 1005.2V995.7h1.43V1005.2zM533.61 998.8V988.3h1.11V998.8zM538.65 1005.2V994.6h1.60V1005.2zM543.69 1005.2V994.6h1.11V1005.2zM550.41 994.6V984.0h1.43V994.6zM565.53 994.6V981.9h1.60V994.6zM567.21 975.6V967.1h1.11V975.6zM589.05 1005.2V994.6h1.60V1005.2zM602.48 991.4V985.1h1.11V991.4zM605.84 1005.2V996.7h1.26V1005.2zM614.24 994.6V984.0h1.11V994.6zM626.00 985.1V974.5h1.26V985.1zM627.68 998.8V986.1h1.26V998.8zM647.84 1005.2V994.6h1.26V1005.2z"/><path fill="#b4e68c" d="M49.82 994.6V986.1h1.60V994.6zM56.54 994.6V986.1h1.43V994.6zM61.58 1005.2V994.6h1.60V1005.2zM61.58 986.1V979.8h1.60V986.1zM63.26 984.0V973.4h1.26V984.0zM64.94 993.6V987.2h1.60V993.6zM66.62 970.3V966.0h1.26V970.3zM66.62 957.6V944.9h1.26V957.6zM68.30 967.1V956.5h1.11V967.1zM69.98 1005.2V998.8h1.26V1005.2zM71.66 1005.2V994.6h1.60V1005.2zM71.66 994.6V984.0h1.60V994.6zM73.34 994.6V984.0h1.26V994.6zM73.34 984.0V975.6h1.26V984.0zM78.38 984.0V973.4h1.26V984.0zM80.06 971.3V960.7h1.26V971.3zM80.06 950.1V939.6h1.26V950.1zM81.74 993.6V983.0h1.26V993.6zM88.46 1005.2V993.6h1.11V1005.2zM88.46 993.6V983.0h1.11V993.6zM90.14 984.0V971.3h1.11V984.0zM98.53 986.1V979.8h1.26V986.1zM98.53 979.8V969.2h1.26V979.8zM100.21 1005.2V994.6h1.60V1005.2zM101.89 1005.2V993.6h1.43V1005.2zM105.25 988.3V977.7h1.26V988.3zM117.01 977.7V967.1h1.60V977.7zM120.37 1005.2V994.6h1.60V1005.2zM120.37 994.6V986.1h1.60V994.6zM122.05 1005.2V995.7h1.43V1005.2zM123.73 994.6V981.9h1.60V994.6zM123.73 981.9V971.3h1.60V981.9zM125.41 1005.2V994.6h1.60V1005.2zM125.41 994.6V984.0h1.60V994.6zM125.41 973.4V967.1h1.60V973.4zM128.77 993.6V980.9h1.60V993.6zM135.49 986.1V975.6h1.11V986.1zM137.17 985.1V974.5h1.26V985.1zM138.85 1005.2V994.6h1.43V1005.2zM142.21 1005.2V994.6h1.11V1005.2zM143.89 994.6V984.0h1.60V994.6zM147.25 984.0V973.4h1.60V984.0zM152.29 988.3V977.7h1.60V988.3zM157.33 1005.2V994.6h1.11V1005.2zM157.33 988.3V975.6h1.11V988.3zM162.37 1005.2V998.8h1.11V1005.2zM162.37 998.8V988.3h1.11V998.8zM162.37 988.3V977.7h1.11V988.3zM165.73 995.7V985.1h1.43V995.7zM169.09 981.9V971.3h1.26V981.9zM170.77 1005.2V994.6h1.11V1005.2zM170.77 994.6V981.9h1.11V994.6zM172.45 1005.2V994.6h1.43V1005.2zM172.45 984.0V979.8h1.43V984.0zM174.13 994.6V984.0h1.11V994.6zM175.81 977.7V971.3h1.26V977.7zM177.49 994.6V981.9h1.43V994.6zM180.85 1005.2V994.6h1.11V1005.2zM180.85 994.6V984.0h1.11V994.6zM180.85 984.0V979.8h1.11V984.0zM184.21 995.7V989.3h1.43V995.7zM187.57 974.5V968.1h1.26V974.5zM199.32 988.3V977.7h1.11V988.3zM204.36 979.8V969.2h1.26V979.8zM206.04 992.5V986.1h1.43V992.5zM206.04 986.1V977.7h1.43V986.1zM211.08 1005.2V995.7h1.60V1005.2zM211.08 980.9V968.1h1.60V980.9zM212.76 983.0V976.6h1.26V983.0zM226.20 993.6V983.0h1.11V993.6zM227.88 1005.2V995.7h1.43V1005.2zM227.88 985.1V980.9h1.43V985.1zM229.56 981.9V971.3h1.60V981.9zM234.60 985.1V974.5h1.43V985.1zM237.96 993.6V983.0h1.60V993.6zM243.00 1005.2V994.6h1.43V1005.2zM243.00 994.6V984.0h1.43V994.6zM243.00 979.8V971.3h1.43V979.8zM248.04 994.6V984.0h1.60V994.6zM249.72 1005.2V994.6h1.26V1005.2zM258.12 996.7V989.3h1.60V996.7zM259.80 988.3V977.7h1.26V988.3zM261.48 973.4V969.2h1.43V973.4zM263.16 987.2V976.6h1.43V987.2zM264.84 1005.2V994.6h1.26V1005.2zM268.20 969.2V958.6h1.11V969.2zM269.88 994.6V984.0h1.43V994.6zM273.24 986.1V975.6h1.43V986.1zM273.24 975.6V965.0h1.43V975.6zM274.92 998.8V994.6h1.60V998.8zM276.60 996.7V986.1h1.11V996.7zM279.96 967.1V960.7h1.43V967.1zM279.96 950.1V939.6h1.43V950.1zM281.64 986.1V975.6h1.11V986.1zM283.32 975.6V962.9h1.60V975.6zM288.36 994.6V984.0h1.43V994.6zM293.40 981.9V971.3h1.26V981.9zM295.08 996.7V984.0h1.43V996.7zM295.08 984.0V973.4h1.43V984.0zM298.43 986.1V975.6h1.60V986.1zM301.79 984.0V973.4h1.26V984.0zM303.47 986.1V975.6h1.43V986.1zM306.83 1005.2V998.8h1.43V1005.2zM306.83 998.8V990.4h1.43V998.8zM308.51 984.0V971.3h1.11V984.0zM311.87 991.4V978.7h1.11V991.4zM318.59 986.1V975.6h1.11V986.1zM321.95 994.6V986.1h1.43V994.6zM323.63 984.0V973.4h1.60V984.0zM323.63 956.5V945.9h1.60V956.5zM330.35 960.7V950.1h1.26V960.7zM337.07 984.0V973.4h1.43V984.0zM338.75 985.1V974.5h1.60V985.1zM342.11 998.8V988.3h1.11V998.8zM342.11 988.3V981.9h1.11V988.3zM352.19 994.6V984.0h1.60V994.6zM355.55 980.9V972.4h1.11V980.9zM357.23 973.4V965.0h1.60V973.4zM358.91 1005.2V994.6h1.26V1005.2zM360.59 1005.2V994.6h1.11V1005.2zM362.27 994.6V984.0h1.60V994.6zM368.99 971.3V958.6h1.60V971.3zM370.67 986.1V973.4h1.11V986.1zM379.07 1005.2V993.6h1.26V1005.2zM380.75 994.6V981.9h1.60V994.6zM382.43 1005.2V994.6h1.26V1005.2zM384.11 994.6V990.4h1.43V994.6zM385.79 984.0V973.4h1.11V984.0zM390.83 993.6V983.0h1.26V993.6zM392.51 994.6V984.0h1.11V994.6zM394.19 994.6V984.0h1.26V994.6zM394.19 984.0V973.4h1.26V984.0zM399.22 990.4V979.8h1.26V990.4zM399.22 979.8V969.2h1.26V979.8zM405.94 974.5V963.9h1.43V974.5zM412.66 1005.2V998.8h1.11V1005.2zM412.66 988.3V977.7h1.11V988.3zM412.66 977.7V971.3h1.11V977.7zM419.38 1005.2V994.6h1.43V1005.2zM422.74 994.6V981.9h1.60V994.6zM424.42 1005.2V994.6h1.26V1005.2zM424.42 986.1V975.6h1.26V986.1zM426.10 993.6V985.1h1.43V993.6zM427.78 1005.2V996.7h1.11V1005.2zM431.14 1005.2V994.6h1.60V1005.2zM431.14 969.2V958.6h1.60V969.2zM432.82 1005.2V995.7h1.26V1005.2zM434.50 998.8V994.6h1.43V998.8zM436.18 984.0V973.4h1.26V984.0zM437.86 1005.2V994.6h1.11V1005.2zM439.54 998.8V988.3h1.26V998.8zM439.54 988.3V975.6h1.26V988.3zM442.90 989.3V978.7h1.60V989.3zM449.62 966.0V955.4h1.60V966.0zM451.30 975.6V962.9h1.11V975.6zM452.98 1005.2V994.6h1.60V1005.2zM456.34 1005.2V994.6h1.26V1005.2zM459.70 984.0V973.4h1.60V984.0zM461.38 993.6V987.2h1.60V993.6zM464.74 958.6V948.0h1.26V958.6zM468.10 979.8V969.2h1.60V979.8zM469.78 994.6V984.0h1.60V994.6zM473.14 1005.2V996.7h1.43V1005.2zM473.14 996.7V986.1h1.43V996.7zM478.18 1005.2V994.6h1.43V1005.2zM479.86 1005.2V994.6h1.43V1005.2zM484.90 1005.2V993.6h1.26V1005.2zM484.90 993.6V989.3h1.26V993.6zM488.26 994.6V984.0h1.26V994.6zM494.98 998.8V988.3h1.60V998.8zM494.98 977.7V965.0h1.60V977.7zM496.66 962.9V954.4h1.11V962.9zM498.34 993.6V987.2h1.60V993.6zM498.34 976.6V966.0h1.60V976.6zM500.01 1005.2V993.6h1.43V1005.2zM500.01 985.1V974.5h1.43V985.1zM501.69 1005.2V995.7h1.43V1005.2zM501.69 995.7V983.0h1.43V995.7zM503.37 994.6V981.9h1.60V994.6zM506.73 986.1V975.6h1.11V986.1zM508.41 986.1V973.4h1.60V986.1zM511.77 1005.2V998.8h1.11V1005.2zM511.77 988.3V977.7h1.11V988.3zM513.45 971.3V967.1h1.43V971.3zM513.45 967.1V956.5h1.43V967.1zM515.13 977.7V971.3h1.11V977.7zM515.13 971.3V960.7h1.11V971.3zM525.21 1005.2V996.7h1.11V1005.2zM526.89 1005.2V998.8h1.11V1005.2zM528.57 992.5V981.9h1.26V992.5zM533.61 988.3V975.6h1.11V988.3zM536.97 973.4V962.9h1.43V973.4zM540.33 1005.2V994.6h1.11V1005.2zM542.01 994.6V981.9h1.60V994.6zM542.01 981.9V977.7h1.60V981.9zM553.77 994.6V986.1h1.26V994.6zM555.45 994.6V986.1h1.11V994.6zM557.13 985.1V974.5h1.26V985.1zM563.85 1005.2V998.8h1.60V1005.2zM563.85 998.8V994.6h1.60V998.8zM563.85 994.6V981.9h1.60V994.6zM567.21 967.1V956.5h1.11V967.1zM568.89 1005.2V994.6h1.26V1005.2zM568.89 975.6V969.2h1.26V975.6zM570.57 986.1V981.9h1.26V986.1zM578.97 986.1V975.6h1.60V986.1zM594.09 994.6V990.4h1.11V994.6zM597.45 998.8V988.3h1.60V998.8zM597.45 977.7V967.1h1.60V977.7zM597.45 958.6V948.0h1.60V958.6zM599.13 998.8V986.1h1.43V998.8zM604.16 996.7V986.1h1.43V996.7zM605.84 996.7V986.1h1.26V996.7zM607.52 979.8V971.3h1.43V979.8zM609.20 1005.2V996.7h1.26V1005.2zM610.88 996.7V986.1h1.26V996.7zM610.88 986.1V977.7h1.26V986.1zM610.88 977.7V967.1h1.26V977.7zM614.24 1005.2V994.6h1.11V1005.2zM614.24 973.4V969.2h1.11V973.4zM615.92 994.6V988.3h1.43V994.6zM617.60 973.4V960.7h1.11V973.4zM624.32 998.8V988.3h1.43V998.8zM624.32 988.3V979.8h1.43V988.3zM631.04 1005.2V994.6h1.11V1005.2zM639.44 988.3V977.7h1.11V988.3zM642.80 962.9V952.3h1.43V962.9zM646.16 994.6V984.0h1.11V994.6zM649.52 986.1V973.4h1.43V986.1z"/><path fill="#a0601e" d="M49.82 950.1V949.4h1.60V950.1zM63.26 962.9V952.3h1.26V962.9zM103.57 952.3V951.6h1.43V952.3zM122.05 974.5V963.9h1.43V974.5zM127.09 967.1V957.6h1.43V967.1zM150.61 996.7V988.3h1.43V996.7zM155.65 973.4V971.3h1.26V973.4zM190.93 972.4V962.9h1.26V972.4zM212.76 976.6V966.0h1.26V976.6zM212.76 957.6V949.1h1.26V957.6zM212.76 938.5V935.7h1.26V938.5zM234.60 974.5V961.8h1.43V974.5zM243.00 958.6V948.0h1.43V958.6zM244.68 984.0V971.3h1.11V984.0zM263.16 942.7V933.7h1.43V942.7zM268.20 984.0V979.8h1.11V984.0zM276.60 975.6V965.0h1.11V975.6zM281.64 954.4V945.9h1.11V954.4zM290.04 954.4V950.6h1.26V954.4zM291.72 949.1V945.0h1.60V949.1zM293.40 960.7V954.4h1.26V960.7zM320.27 942.7V933.4h1.11V942.7zM323.63 933.2V922.6h1.60V933.2zM325.31 994.6V984.0h1.26V994.6zM347.15 913.1V906.4h1.11V913.1zM350.51 994.6V981.9h1.60V994.6zM367.31 966.0V959.6h1.60V966.0zM368.99 937.4V931.7h1.60V937.4zM374.03 965.0V958.6h1.43V965.0zM397.55 975.6V971.3h1.43V975.6zM409.30 949.1V936.4h1.60V949.1zM427.78 996.7V986.1h1.11V996.7zM427.78 986.1V977.1h1.11V986.1zM449.62 925.8V922.9h1.60V925.8zM451.30 986.1V975.6h1.11V986.1zM459.70 973.4V962.9h1.60V973.4zM464.74 973.4V969.2h1.26V973.4zM468.10 969.2V958.6h1.60V969.2zM468.10 948.0V936.7h1.60V948.0zM496.66 937.4V926.9h1.11V937.4zM510.09 998.8V988.3h1.60V998.8zM516.81 948.0V945.7h1.11V948.0zM530.25 973.4V962.9h1.26V973.4zM530.25 962.9V954.4h1.26V962.9zM552.09 994.6V984.0h1.60V994.6zM580.65 962.9V962.2h1.60V962.9zM590.73 984.0V973.4h1.60V984.0zM602.48 953.3V942.7h1.11V953.3zM605.84 943.8V942.7h1.26V943.8zM607.52 992.5V984.0h1.43V992.5zM617.60 956.5V948.8h1.11V956.5zM619.28 958.6V957.9h1.43V958.6zM644.48 984.0V979.8h1.43V984.0z"/><path fill="#e4e8f2" d="M54.86 1005.2V998.8h1.11V1005.2zM54.86 952.3V941.7h1.11V952.3zM58.22 973.4V960.7h1.26V973.4zM69.98 994.6V984.0h1.26V994.6zM69.98 984.0V977.7h1.26V984.0zM73.34 950.1V939.6h1.26V950.1zM80.06 994.6V988.3h1.26V994.6zM85.10 1005.2V994.6h1.11V1005.2zM91.82 1005.2V994.6h1.26V1005.2zM93.50 986.1V973.4h1.60V986.1zM95.17 966.0V961.8h1.11V966.0zM103.57 1005.2V994.6h1.43V1005.2zM110.29 994.6V984.0h1.11V994.6zM113.65 992.5V986.1h1.11V992.5zM120.37 986.1V973.4h1.60V986.1zM120.37 973.4V965.0h1.60V973.4zM128.77 1005.2V993.6h1.60V1005.2zM132.13 1005.2V995.7h1.43V1005.2zM133.81 1005.2V995.7h1.11V1005.2zM133.81 995.7V985.1h1.11V995.7zM133.81 957.6V947.0h1.11V957.6zM135.49 1005.2V994.6h1.11V1005.2zM137.17 1005.2V993.6h1.26V1005.2zM152.29 1005.2V994.6h1.60V1005.2zM160.69 1005.2V994.6h1.43V1005.2zM169.09 1005.2V994.6h1.26V1005.2zM170.77 971.3V965.3h1.11V971.3zM174.13 1005.2V994.6h1.11V1005.2zM175.81 1005.2V996.7h1.26V1005.2zM177.49 1005.2V994.6h1.43V1005.2zM211.08 995.7V985.1h1.60V995.7zM211.08 951.2V940.6h1.60V951.2zM224.52 1005.2V996.7h1.43V1005.2zM236.28 988.3V977.7h1.43V988.3zM239.64 994.6V984.0h1.43V994.6zM243.00 984.0V979.8h1.43V984.0zM243.00 971.3V962.9h1.43V971.3zM243.00 962.9V958.6h1.43V962.9zM244.68 1005.2V994.6h1.11V1005.2zM248.04 1005.2V994.6h1.60V1005.2zM256.44 984.0V979.8h1.26V984.0zM259.80 967.1V962.9h1.26V967.1zM263.16 947.0V942.7h1.43V947.0zM271.56 980.9V970.3h1.11V980.9zM274.92 994.6V988.3h1.60V994.6zM278.28 967.1V960.6h1.26V967.1zM281.64 1005.2V996.7h1.11V1005.2zM293.40 998.8V994.6h1.26V998.8zM293.40 994.6V981.9h1.26V994.6zM300.11 984.0V975.6h1.60V984.0zM305.15 1005.2V994.6h1.26V1005.2zM313.55 1005.2V993.6h1.26V1005.2zM316.91 994.6V984.0h1.26V994.6zM320.27 1005.2V995.7h1.11V1005.2zM326.99 1005.2V993.6h1.26V1005.2zM330.35 965.0V960.7h1.26V965.0zM340.43 1005.2V994.6h1.26V1005.2zM340.43 958.6V954.9h1.26V958.6zM343.79 1005.2V994.6h1.26V1005.2zM348.83 1005.2V994.6h1.60V1005.2zM355.55 1005.2V995.7h1.11V1005.2zM355.55 991.4V980.9h1.11V991.4zM357.23 956.5V945.9h1.60V956.5zM357.23 914.2V910.2h1.60V914.2zM360.59 979.8V969.2h1.11V979.8zM377.39 1005.2V993.6h1.11V1005.2zM384.11 1005.2V994.6h1.43V1005.2zM387.47 1005.2V995.7h1.26V1005.2zM389.15 1005.2V994.6h1.26V1005.2zM390.83 1005.2V993.6h1.26V1005.2zM414.34 1005.2V993.6h1.26V1005.2zM416.02 1005.2V994.6h1.43V1005.2zM417.70 1005.2V993.6h1.60V1005.2zM426.10 942.7V934.3h1.43V942.7zM431.14 973.4V969.2h1.60V973.4zM437.86 984.0V973.4h1.11V984.0zM446.26 984.0V973.4h1.11V984.0zM446.26 965.0V954.4h1.11V965.0zM449.62 1005.2V993.6h1.60V1005.2zM458.02 1005.2V993.6h1.26V1005.2zM464.74 994.6V984.0h1.26V994.6zM464.74 969.2V958.6h1.26V969.2zM466.42 1005.2V995.7h1.11V1005.2zM474.82 1005.2V994.6h1.60V1005.2zM489.94 1005.2V994.6h1.60V1005.2zM498.34 1005.2V993.6h1.60V1005.2zM498.34 934.3V925.8h1.60V934.3zM505.05 973.4V965.2h1.43V973.4zM523.53 1005.2V994.6h1.60V1005.2zM533.61 1005.2V998.8h1.11V1005.2zM540.33 956.5V950.0h1.11V956.5zM547.05 1005.2V994.6h1.11V1005.2zM552.09 984.0V979.8h1.60V984.0zM557.13 1005.2V995.7h1.26V1005.2zM560.49 994.6V990.4h1.60V994.6zM575.61 986.1V975.6h1.60V986.1zM580.65 1005.2V994.6h1.60V1005.2zM584.01 1005.2V994.6h1.11V1005.2zM585.69 1005.2V998.8h1.43V1005.2zM585.69 986.1V975.6h1.43V986.1zM600.80 1005.2V994.6h1.60V1005.2zM620.96 1005.2V998.8h1.26V1005.2zM626.00 1005.2V995.7h1.26V1005.2zM627.68 965.0V954.4h1.26V965.0zM629.36 1005.2V993.6h1.43V1005.2zM629.36 961.8V951.2h1.43V961.8zM632.72 1005.2V994.6h1.60V1005.2zM632.72 986.1V981.9h1.60V986.1zM634.40 998.8V988.3h1.43V998.8zM641.12 990.4V979.8h1.11V990.4z"/></g>
<g><text transform="translate(77.5 1019) scale(0.915 1)" font-size="8.3" fill="#d3d8df">05:12</text><text transform="translate(133.4 1019) scale(0.915 1)" font-size="8.3" fill="#d3d8df">06:18</text><text transform="translate(189.3 1019) scale(0.915 1)" font-size="8.3" fill="#d3d8df">07:24</text><text transform="translate(245.2 1019) scale(0.915 1)" font-size="8.3" fill="#d3d8df">08:30</text><text transform="translate(301.1 1019) scale(0.915 1)" font-size="8.3" fill="#d3d8df">09:36</text><text transform="translate(357 1019) scale(0.915 1)" font-size="8.3" fill="#d3d8df">10:42</text><text transform="translate(412.9 1019) scale(0.943 1)" font-size="8.3" fill="#d3d8df">11:48</text><text transform="translate(468.8 1019) scale(0.915 1)" font-size="8.3" fill="#d3d8df">12:54</text><text transform="translate(524.7 1019) scale(0.915 1)" font-size="8.3" fill="#d3d8df">14:00</text><text transform="translate(580.6 1019) scale(0.915 1)" font-size="8.3" fill="#d3d8df">15:06</text><text transform="translate(636.5 1019) scale(0.915 1)" font-size="8.3" fill="#d3d8df">16:12</text><text transform="translate(19.5 849) scale(0.999 1)" font-size="9" fill="#d3d8df">150</text><text transform="translate(19.5 901.9) scale(0.999 1)" font-size="9" fill="#d3d8df">100</text><text transform="translate(24.3 955) scale(1.019 1)" font-size="9" fill="#d3d8df">50</text><text x="34.5" y="1007.8" font-size="9" fill="#d3d8df" text-anchor="end">0</text></g>
</svg></section>
<section class="panel" id="p9" style="left:679px;top:808px;width:516px;height:226px">
<h3 class="t" style="left:9.1px;top:9px;font-size:12.4px;line-height:14px;color:#a4bbcc;transform:scaleX(0.992);">API Requests (Today, Yesterday, Last Week)</h3>
<svg width="516" height="226" viewBox="679 808 516 226">
<g><path d="M714.9 846.4H1177.8" stroke="#2a3a55" stroke-width="1"/><path d="M714.9 893H1177.8" stroke="#2a3a55" stroke-width="1"/><path d="M714.9 939.3H1177.8" stroke="#2a3a55" stroke-width="1"/><path d="M714.9 985.2H1177.8" stroke="#2a3a55" stroke-width="1"/><path d="M764.2 985.2V988.6" stroke="#2a3a55" stroke-width="1"/><path d="M821.4 985.2V988.6" stroke="#2a3a55" stroke-width="1"/><path d="M878.6 985.2V988.6" stroke="#2a3a55" stroke-width="1"/><path d="M935.8 985.2V988.6" stroke="#2a3a55" stroke-width="1"/><path d="M993 985.2V988.6" stroke="#2a3a55" stroke-width="1"/><path d="M1050.2 985.2V988.6" stroke="#2a3a55" stroke-width="1"/><path d="M1107.4 985.2V988.6" stroke="#2a3a55" stroke-width="1"/><path d="M1164.6 985.2V988.6" stroke="#2a3a55" stroke-width="1"/></g>
<g stroke-linejoin="miter" stroke-miterlimit="3"><polyline points="719.2,937.69 719.97,936.69 720.73,923.07 721.5,914.51 722.26,898.27 723.03,881.88 723.79,921.63 724.56,905.51 725.32,908.98 726.09,901.56 726.85,921.48 727.62,923.6 728.38,902.82 729.15,958.14 729.91,942.51 730.68,914.5 731.44,914.48 732.21,928.83 732.97,935.9 733.74,885.26 734.51,924.17 735.27,921.24 736.04,918.82 736.8,898.25 737.57,945.3 738.33,946.82 739.1,931.05 739.86,893 740.63,963.74 741.39,932.06 742.16,926.37 742.92,940.74 743.69,935.19 744.45,962.74 745.22,961.48 745.98,915.55 746.75,958.97 747.52,938.54 748.28,931.23 749.05,932.05 749.81,914.83 750.58,935.16 751.34,920.32 752.11,888.2 752.87,896.47 753.64,909.7 754.4,881.45 755.17,930.64 755.93,900.81 756.7,921.37 757.46,954.08 758.23,919.11 758.99,940.83 759.76,895.88 760.52,938.01 761.29,888.76 762.06,901.28 762.82,943.83 763.59,924.07 764.35,923.23 765.12,913.53 765.88,911.8 766.65,957.89 767.41,949.74 768.18,955.19 768.94,910.99 769.71,902.37 770.47,947.11 771.24,923.98 772,927.23 772.77,906.15 773.53,949.93 774.3,942.75 775.07,968.92 775.83,952.79 776.6,874.16 777.36,915.39 778.13,920.39 778.89,934.62 779.66,966.45 780.42,912.12 781.19,895.06 781.95,967.09 782.72,945.85 783.48,939.63 784.25,949.95 785.01,913.04 785.78,890.88 786.54,918.19 787.31,915.15 788.07,955.54 788.84,969.2 789.61,928.54 790.37,905.61 791.14,969.81 791.9,932.89 792.67,962.92 793.43,894.65 794.2,950.23 794.96,933.63 795.73,930.05 796.49,957.66 797.26,933.82 798.02,931.1 798.79,924.16 799.55,904.89 800.32,930.09 801.08,894.39 801.85,912.93 802.62,894.13 803.38,942.58 804.15,931.54 804.91,919.21 805.68,936.08 806.44,910.57 807.21,902.15 807.97,938.68 808.74,955.44 809.5,885.06 810.27,894.41 811.03,907.44 811.8,895.62 812.56,945.15 813.33,939.58 814.09,959.95 814.86,965.07 815.62,931.52 816.39,934.73 817.16,945.27 817.92,932.77 818.69,929.39 819.45,926.87 820.22,879.27 820.98,961.11 821.75,891.42 822.51,954.16 823.28,875.93 824.04,955.88 824.81,903.97 825.57,950.86 826.34,926.62 827.1,913.54 827.87,923.35 828.63,933.91 829.4,947.79 830.16,954.26 830.93,891 831.7,918.04 832.46,927.54 833.23,906.02 833.99,910.29 834.76,939.73 835.52,960.17 836.29,916.25 837.05,962.67 837.82,948.87 838.58,931.2 839.35,964.31 840.11,931.59 840.88,956.32 841.64,925.46 842.41,953.11 843.17,936.03 843.94,951.04 844.71,933.68 845.47,939.36 846.24,907.57 847,937.75 847.77,906.91 848.53,916.57 849.3,907.86 850.06,939.19 850.83,883.41 851.59,895.33 852.36,924.61 853.12,912.32 853.89,932.78 854.65,965.31 855.42,883.83 856.18,894.96 856.95,939.5 857.71,949.02 858.48,903.63 859.25,912.58 860.01,946.16 860.78,882.62 861.54,926.23 862.31,907.78 863.07,947.83 863.84,897.6 864.6,926.97 865.37,906.16 866.13,961.56 866.9,925.16 867.66,913.13 868.43,937.75 869.19,937.17 869.96,947.77 870.72,882.1 871.49,953.77 872.26,936.65 873.02,915.92 873.79,937.51 874.55,952.27 875.32,946.17 876.08,890.12 876.85,899.21 877.61,952.13 878.38,878.76 879.14,903.91 879.91,915.01 880.67,917.55 881.44,926.06 882.2,910.16 882.97,931.53 883.73,952.49 884.5,913.71 885.26,888.99 886.03,880.82 886.8,931.31 887.56,956.44 888.33,936.07 889.09,933.24 889.86,907.64 890.62,912.61 891.39,946.65 892.15,920.88 892.92,947.91 893.68,932.26 894.45,905.74 895.21,914.91 895.98,884.03 896.74,936.3 897.51,934.17 898.27,927.94 899.04,955.34 899.81,903.67 900.57,919.54 901.34,903.19 902.1,906.2 902.87,911.1 903.63,938.92 904.4,945.29 905.16,926.53 905.93,927.08 906.69,911.8 907.46,905.05 908.22,893.34 908.99,965.51 909.75,920.43 910.52,944.06 911.28,930.95 912.05,893.3 912.81,951.93 913.58,942.29 914.35,862.13 915.11,875.94 915.88,930.69 916.64,920.31 917.41,954.33 918.17,940.39 918.94,908.9 919.7,910.55 920.47,914.27 921.23,949.73 922,961.94 922.76,948.49 923.53,911.59 924.29,921.28 925.06,952.97 925.82,900.25 926.59,925.88 927.35,912.86 928.12,936.53 928.89,904.43 929.65,950.67 930.42,920.36 931.18,901.98 931.95,900.81 932.71,944.4 933.48,926.87 934.24,899.12 935.01,953.51 935.77,939.17 936.54,917.59 937.3,963.24 938.07,933.1 938.83,960.69 939.6,916.25 940.36,958.06 941.13,949.31 941.9,888.97 942.66,918.24 943.43,932.52 944.19,956.59 944.96,910.52 945.72,887.83 946.49,944.86 947.25,909.35 948.02,917.67 948.78,932.88 949.55,901.49 950.31,913.04 951.08,953.08 951.84,942.53 952.61,942.63 953.37,928.52 954.14,935.53 954.9,929.64 955.67,911.99 956.44,927.23 957.2,973.17 957.97,938.51 958.73,911.9 959.5,954.03 960.26,950.33 961.03,931.64 961.79,945.82 962.56,936.11 963.32,937.97 964.09,935.75 964.85,942.1 965.62,931.64 966.38,923.4 967.15,948.9 967.91,955.68 968.68,964.32 969.45,920.47 970.21,914.25 970.98,939.69 971.74,905.26 972.51,924.15 973.27,911.76 974.04,969.94 974.8,918.16 975.57,924.59 976.33,885.29 977.1,901.03 977.86,916.03 978.63,948.89 979.39,887.4 980.16,882.24 980.92,943.97 981.69,929.52 982.45,931.91 983.22,918.97 983.99,926.58 984.75,890.55 985.52,955.74 986.28,949.37 987.05,948.95 987.81,925.18 988.58,958.49 989.34,947.15 990.11,937.41 990.87,969.53 991.64,906.82 992.4,926.06 993.17,920.76 993.93,960.21 994.7,970.79 995.46,889.64 996.23,913.43 996.99,957.73 997.76,936.59 998.53,918.62 999.29,949.89 1000.06,925.49 1000.82,940.94 1001.59,916.27 1002.35,967.71 1003.12,959.15 1003.88,940.67 1004.65,930.27 1005.41,933.48 1006.18,932.64 1006.94,941.55 1007.71,972.15 1008.47,908.39 1009.24,949.66 1010,936.22 1010.77,952.46 1011.54,937.86 1012.3,939.36 1013.07,932.83 1013.83,956 1014.6,928.53 1015.36,939.91 1016.13,883.04 1016.89,936.73 1017.66,965.16 1018.42,926.86 1019.19,926.49 1019.95,934.55 1020.72,914.2 1021.48,903.56 1022.25,897.55 1023.01,971.48 1023.78,921.3 1024.54,937.37 1025.31,973.31 1026.08,944.7 1026.84,928.19 1027.61,936.46 1028.37,911.04 1029.14,953.18 1029.9,947.86 1030.67,928.56 1031.43,944.79 1032.2,893.95 1032.96,943.35 1033.73,876.01 1034.49,947.22 1035.26,966.85 1036.02,930.2 1036.79,968.26 1037.55,940.2 1038.32,913.65 1039.09,921.07 1039.85,919.25 1040.62,902.2 1041.38,934.79 1042.15,947.75 1042.91,918.44 1043.68,905.09 1044.44,918.11 1045.21,905.6 1045.97,935.54 1046.74,945.2 1047.5,949.21 1048.27,951.63 1049.03,939.15 1049.8,899.06 1050.56,948.55 1051.33,918.37 1052.09,911.77 1052.86,959.59 1053.63,933.04 1054.39,929.87 1055.16,925.54 1055.92,961.39 1056.69,953.88 1057.45,924.76 1058.22,903.56 1058.98,891.89 1059.75,903.85 1060.51,904.1 1061.28,956.4 1062.04,908.01 1062.81,951.61 1063.57,922.49 1064.34,958.67 1065.1,966.92 1065.87,959.35 1066.64,912.63 1067.4,932.58 1068.17,902.46 1068.93,949.88 1069.7,912.29 1070.46,930.09 1071.23,903.43 1071.99,919.1 1072.76,936.44 1073.52,895.08 1074.29,960.68 1075.05,923.93 1075.82,922.34 1076.58,917.99 1077.35,909.58 1078.11,945.18 1078.88,945.46 1079.64,947.17 1080.41,916.51 1081.18,905.65 1081.94,904.24 1082.71,912.99 1083.47,914.49 1084.24,949.52 1085,966.68 1085.77,950.12 1086.53,919.82 1087.3,958.36 1088.06,925.35 1088.83,949.2 1089.59,920.71 1090.36,919.87 1091.12,913.95 1091.89,942.03 1092.65,918.9 1093.42,928.24 1094.18,893.71 1094.95,905.41 1095.72,950.55 1096.48,919.79 1097.25,937.47 1098.01,941.49 1098.78,883.31 1099.54,959.93 1100.31,894.6 1101.07,964.4 1101.84,933.28 1102.6,918.81 1103.37,942.87 1104.13,915.47 1104.9,903.69 1105.66,948.01 1106.43,933.4 1107.19,933.79 1107.96,924.93 1108.73,936.38 1109.49,924.11 1110.26,913.39 1111.02,932.07 1111.79,941.96 1112.55,942.32 1113.32,925.04 1114.08,972.26 1114.85,965.8 1115.61,960.52 1116.38,962.89 1117.14,931.4 1117.91,964.1 1118.67,912.07 1119.44,896.33 1120.2,916.09 1120.97,916.14 1121.73,959.28 1122.5,943.02 1123.27,932.55 1124.03,917.37 1124.8,927.31 1125.56,952.75 1126.33,970.46 1127.09,928.16 1127.86,924.06 1128.62,951.62 1129.39,940.46 1130.15,931.01 1130.92,948.61 1131.68,937.67 1132.45,925.85 1133.21,951.7 1133.98,903.18 1134.74,902.1 1135.51,930.6 1136.28,918.6 1137.04,900.01 1137.81,908.29 1138.57,937.05 1139.34,916.19 1140.1,909.88 1140.87,910.91 1141.63,939.74 1142.4,954.09 1143.16,919.03 1143.93,937.55 1144.69,970.99 1145.46,938.49 1146.22,962.31 1146.99,939.75 1147.75,898 1148.52,941.44 1149.28,914.32 1150.05,948.17 1150.82,926.82 1151.58,883.74 1152.35,898.93 1153.11,946.68 1153.88,953.4 1154.64,949.8 1155.41,908.04 1156.17,954.09 1156.94,937.92 1157.7,919.87 1158.47,943.31 1159.23,925.2 1160,931.45 1160.76,896.99 1161.53,904.14 1162.29,931.74 1163.06,940.29 1163.83,903.6 1164.59,930.74 1165.36,899.29 1166.12,962.45 1166.89,943.48 1167.65,920.4 1168.42,908.89 1169.18,880.44 1169.95,942.39 1170.71,965.93 1171.48,909.53 1172.24,887.7 1173.01,919.85 1173.77,912.41 1174.54,938.97 1175.3,890.08 1176.07,933.06 1176.83,962.67 1177.6,928.82" fill="none" stroke="#0d5f8e" stroke-width="1.45"/><polyline points="719.2,911.88 719.97,904.95 720.73,947.53 721.5,954.73 722.26,927.82 723.03,953.33 723.79,956.85 724.56,925.12 725.32,906.07 726.09,960.12 726.85,928.03 727.62,911.49 728.38,911.96 729.15,958.78 729.91,927.64 730.68,911.16 731.44,943.37 732.21,934 732.97,947.7 733.74,913.57 734.51,956.79 735.27,950.27 736.04,969.18 736.8,967.7 737.57,936.87 738.33,938.49 739.1,967.25 739.86,925.03 740.63,973.06 741.39,967.02 742.16,949.72 742.92,920 743.69,950.46 744.45,923.86 745.22,952.99 745.98,908.37 746.75,942.83 747.52,930.68 748.28,918.82 749.05,919.55 749.81,929.2 750.58,930.79 751.34,929.28 752.11,929.83 752.87,959.53 753.64,925.23 754.4,907.01 755.17,892.67 755.93,972.51 756.7,931.19 757.46,952.25 758.23,932.5 758.99,958.12 759.76,973.17 760.52,944.69 761.29,931.41 762.06,903.12 762.82,971.46 763.59,973.13 764.35,954.65 765.12,950.03 765.88,967.82 766.65,940.44 767.41,888.55 768.18,914.85 768.94,948.42 769.71,965.89 770.47,922.89 771.24,942.02 772,920.01 772.77,927.4 773.53,904.69 774.3,939.4 775.07,930.88 775.83,963.35 776.6,930.77 777.36,933.81 778.13,948.25 778.89,892.19 779.66,955.42 780.42,937.79 781.19,913.98 781.95,906.23 782.72,939.89 783.48,922.83 784.25,882.48 785.01,885.72 785.78,891.74 786.54,926.66 787.31,932.48 788.07,929.79 788.84,909.55 789.61,911.3 790.37,940.25 791.14,919.09 791.9,929.94 792.67,917.24 793.43,971.26 794.2,949.12 794.96,928.81 795.73,952.06 796.49,929.55 797.26,914.65 798.02,940.86 798.79,906.75 799.55,972.16 800.32,970.85 801.08,962.83 801.85,930.46 802.62,967.02 803.38,944.86 804.15,972.94 804.91,930.96 805.68,921.97 806.44,970.62 807.21,963.36 807.97,937.18 808.74,917.64 809.5,950.12 810.27,942.68 811.03,917.37 811.8,934.91 812.56,931.44 813.33,925.72 814.09,928.07 814.86,920.73 815.62,918.06 816.39,921.82 817.16,906.4 817.92,954.4 818.69,917.06 819.45,955.14 820.22,960.42 820.98,916.47 821.75,938.72 822.51,942.74 823.28,928.9 824.04,905.3 824.81,938.13 825.57,934.7 826.34,953.54 827.1,951.81 827.87,908.67 828.63,939.52 829.4,906.58 830.16,943.2 830.93,925.56 831.7,921.29 832.46,917.69 833.23,905.55 833.99,902.97 834.76,936.43 835.52,899.19 836.29,929.58 837.05,905.93 837.82,901.98 838.58,944.65 839.35,937.31 840.11,963.03 840.88,973.04 841.64,920.66 842.41,956.02 843.17,934.81 843.94,934.5 844.71,953.18 845.47,955.59 846.24,936.45 847,949.67 847.77,952.85 848.53,963.3 849.3,923.84 850.06,958.79 850.83,915.53 851.59,930.54 852.36,956.55 853.12,944.14 853.89,959.22 854.65,942.39 855.42,926.04 856.18,939.4 856.95,955.81 857.71,952.45 858.48,938.84 859.25,923.41 860.01,955.41 860.78,916.63 861.54,971.09 862.31,959.8 863.07,968.54 863.84,951.65 864.6,956.14 865.37,904.84 866.13,925.77 866.9,948.96 867.66,946.66 868.43,973.93 869.19,938.44 869.96,954.73 870.72,960.79 871.49,938.4 872.26,910.84 873.02,947.45 873.79,928.21 874.55,902.78 875.32,921.24 876.08,900.15 876.85,913.87 877.61,920.45 878.38,966.06 879.14,909.05 879.91,967.21 880.67,912.86 881.44,944.69 882.2,943.86 882.97,928.25 883.73,953.4 884.5,883.17 885.26,922.75 886.03,937.07 886.8,939.46 887.56,922.78 888.33,950.16 889.09,963.29 889.86,912.34 890.62,957.71 891.39,955.54 892.15,970.71 892.92,922.28 893.68,929.74 894.45,905.08 895.21,939.31 895.98,943.18 896.74,912.26 897.51,912.67 898.27,961.24 899.04,964.28 899.81,933.74 900.57,962.67 901.34,917.92 902.1,913.77 902.87,910.78 903.63,892.42 904.4,926.39 905.16,956 905.93,888.97 906.69,954.56 907.46,972.55 908.22,947.59 908.99,947.91 909.75,896.69 910.52,959.22 911.28,946.47 912.05,964.63 912.81,936.17 913.58,964.49 914.35,918.16 915.11,885.26 915.88,955.1 916.64,911.94 917.41,959 918.17,927.11 918.94,948.05 919.7,945.72 920.47,962.92 921.23,922.66 922,926.08 922.76,936.99 923.53,918.61 924.29,934.81 925.06,905.54 925.82,913.7 926.59,972.43 927.35,927.97 928.12,967.17 928.89,954.72 929.65,959.1 930.42,956.5 931.18,932.12 931.95,902.42 932.71,949.89 933.48,939.33 934.24,934.33 935.01,927.55 935.77,948.07 936.54,955.69 937.3,963.43 938.07,964.38 938.83,960.82 939.6,962.34 940.36,939.44 941.13,967.56 941.9,959.99 942.66,957.46 943.43,966.27 944.19,944.31 944.96,963.15 945.72,915.89 946.49,952.66 947.25,941.46 948.02,936.22 948.78,848.25 949.55,952.95 950.31,941.36 951.08,952.02 951.84,952.97 952.61,953.36 953.37,894.04 954.14,933.33 954.9,913.11 955.67,948.63 956.44,956.56 957.2,932.5 957.97,929.91 958.73,934.94 959.5,920.35 960.26,932.58 961.03,893.54 961.79,859.35 962.56,939.56 963.32,918.29 964.09,920.46 964.85,973.86 965.62,940.11 966.38,948.15 967.15,962.7 967.91,968.75 968.68,956.44 969.45,926.93 970.21,918.45 970.98,947.16 971.74,912.66 972.51,918.11 973.27,942.86 974.04,896.89 974.8,952.37 975.57,939.49 976.33,940.07 977.1,972.98 977.86,933.73 978.63,914.38 979.39,961.29 980.16,936.02 980.92,953.45 981.69,933.14 982.45,932.22 983.22,963.37 983.99,973.88 984.75,960.05 985.52,973.32 986.28,947.52 987.05,970.09 987.81,940.02 988.58,918.39 989.34,934.24 990.11,929.67 990.87,915.96 991.64,923.54 992.4,947.48 993.17,935.41 993.93,914.99 994.7,929.42 995.46,895.06 996.23,973.46 996.99,944.95 997.76,966.1 998.53,938.9 999.29,925.67 1000.06,928.32 1000.82,902.51 1001.59,951.29 1002.35,926.3 1003.12,924.4 1003.88,973.15 1004.65,915.34 1005.41,920.99 1006.18,946.22 1006.94,926.38 1007.71,943.84 1008.47,912.17 1009.24,884.09 1010,937.19 1010.77,916.08 1011.54,932.25 1012.3,900.2 1013.07,909.66 1013.83,918.11 1014.6,941.13 1015.36,954.56 1016.13,902.64 1016.89,934.17 1017.66,924.9 1018.42,932.65 1019.19,897.53 1019.95,947.23 1020.72,943.74 1021.48,920.63 1022.25,971.77 1023.01,932.4 1023.78,948.89 1024.54,940.22 1025.31,934.7 1026.08,927.56 1026.84,964.07 1027.61,969.75 1028.37,933.35 1029.14,970.18 1029.9,939.3 1030.67,907.69 1031.43,938.94 1032.2,927.07 1032.96,939.99 1033.73,898.53 1034.49,921.56 1035.26,946.54 1036.02,942.48 1036.79,912.37 1037.55,954.39 1038.32,902.72 1039.09,938.25 1039.85,957.96 1040.62,935.72 1041.38,939.58 1042.15,934.29 1042.91,912.88 1043.68,968.66 1044.44,950.56 1045.21,923.83 1045.97,930.92 1046.74,972.25 1047.5,951.41 1048.27,945.37 1049.03,891.64 1049.8,935.7 1050.56,962.78 1051.33,942.54 1052.09,913.28 1052.86,970.82 1053.63,921.06 1054.39,912.73 1055.16,951.88 1055.92,944.82 1056.69,953.03 1057.45,954.2 1058.22,941.13 1058.98,937.85 1059.75,919.58 1060.51,968.98 1061.28,916.64 1062.04,961.77 1062.81,947.82 1063.57,964.29 1064.34,927.18 1065.1,952.8 1065.87,933.17 1066.64,915.14 1067.4,948.56 1068.17,933.59 1068.93,953.36 1069.7,952.44 1070.46,948.77 1071.23,931.71 1071.99,929.76 1072.76,950.78 1073.52,924.58 1074.29,953.89 1075.05,954.63 1075.82,897.95 1076.58,941.07 1077.35,955.79 1078.11,918.79 1078.88,905.95 1079.64,933.53 1080.41,927.77 1081.18,915.76 1081.94,930.37 1082.71,927.13 1083.47,924.25 1084.24,956.53 1085,953.83 1085.77,932.84 1086.53,927.53 1087.3,876.01 1088.06,904.55 1088.83,901.52 1089.59,956.13 1090.36,889.57 1091.12,898.19 1091.89,921.95 1092.65,944.79 1093.42,960.57 1094.18,947.71 1094.95,939.09 1095.72,961.62 1096.48,942.68 1097.25,914.67 1098.01,901.02 1098.78,924 1099.54,902.89 1100.31,881.56 1101.07,910.91 1101.84,935.1 1102.6,900.34 1103.37,932.59 1104.13,950.05 1104.9,911.04 1105.66,920.37 1106.43,928.79 1107.19,899.55 1107.96,956.06 1108.73,921.62 1109.49,958.34 1110.26,966.71 1111.02,938.51 1111.79,940.64 1112.55,939.16 1113.32,934.94 1114.08,934.5 1114.85,971.23 1115.61,939.78 1116.38,947.8 1117.14,953.32 1117.91,912.65 1118.67,951.32 1119.44,938.62 1120.2,970.14 1120.97,928.84 1121.73,928.66 1122.5,940.07 1123.27,967.72 1124.03,915.76 1124.8,942.93 1125.56,954.99 1126.33,952.6 1127.09,954.33 1127.86,925.94 1128.62,895.77 1129.39,962.59 1130.15,966.02 1130.92,952.26 1131.68,948.77 1132.45,942.11 1133.21,895.35 1133.98,926.91 1134.74,930.7 1135.51,930.64 1136.28,882.49 1137.04,931.92 1137.81,914.39 1138.57,900.73 1139.34,903.95 1140.1,904.2 1140.87,938.1 1141.63,927.01 1142.4,924.85 1143.16,902.73 1143.93,892.16 1144.69,933.14 1145.46,908.96 1146.22,930.63 1146.99,919.04 1147.75,937.58 1148.52,963.08 1149.28,902.63 1150.05,935.64 1150.82,968.1 1151.58,931.72 1152.35,961.72 1153.11,915.3 1153.88,941.77 1154.64,900.31 1155.41,905.65 1156.17,917.43 1156.94,942.38 1157.7,956.21 1158.47,935.06 1159.23,934.49 1160,972.62 1160.76,973.63 1161.53,954.55 1162.29,929.17 1163.06,924.24 1163.83,974 1164.59,944.39 1165.36,957.1 1166.12,968.5 1166.89,949 1167.65,918.98 1168.42,935.61 1169.18,949.91 1169.95,919.2 1170.71,917.58 1171.48,918.32 1172.24,922.55 1173.01,935.58 1173.77,956.88 1174.54,925.48 1175.3,935.03 1176.07,915.47 1176.83,946.64 1177.6,935.91" fill="none" stroke="#93e0ff" stroke-width="1.25"/><polyline points="719.2,933.9 719.97,962.34 720.73,924.52 721.5,938.77 722.26,909.29 723.03,942.02 723.79,927.08 724.56,937.22 725.32,924.39 726.09,915 726.85,913.14 727.62,961.74 728.38,917.83 729.15,953.7 729.91,919.38 730.68,963.62 731.44,956.93 732.21,926.05 732.97,897.66 733.74,961.83 734.51,943.77 735.27,917.79 736.04,921.11 736.8,927.77 737.57,939.51 738.33,961.09 739.1,920.19 739.86,927.52 740.63,942.65 741.39,946.02 742.16,941.56 742.92,914.93 743.69,928.62 744.45,928.68 745.22,926.11 745.98,948.89 746.75,945.18 747.52,915.64 748.28,949.67 749.05,923.29 749.81,917.79 750.58,954.24 751.34,973.98 752.11,957.08 752.87,905.87 753.64,927.1 754.4,946.73 755.17,969.8 755.93,950.38 756.7,926.74 757.46,945.75 758.23,928.83 758.99,944.43 759.76,930.77 760.52,947.4 761.29,967.18 762.06,923.5 762.82,940.88 763.59,948.78 764.35,957.21 765.12,910.68 765.88,950.33 766.65,947.85 767.41,937.22 768.18,936.01 768.94,924.55 769.71,932.54 770.47,949.09 771.24,924.56 772,953.11 772.77,925.44 773.53,936.95 774.3,951.46 775.07,960.93 775.83,913.07 776.6,918 777.36,961.1 778.13,943.08 778.89,905.35 779.66,952.06 780.42,969.24 781.19,936.29 781.95,908.42 782.72,948.83 783.48,941.14 784.25,938.49 785.01,928.51 785.78,954.23 786.54,937 787.31,914.82 788.07,923.01 788.84,912.54 789.61,911.8 790.37,946.34 791.14,927.3 791.9,909.73 792.67,921.9 793.43,912.74 794.2,890.82 794.96,932.59 795.73,944.34 796.49,965.3 797.26,935.62 798.02,956.82 798.79,938.13 799.55,960.57 800.32,936.04 801.08,935.67 801.85,887.11 802.62,889.02 803.38,934.71 804.15,924.42 804.91,935.42 805.68,927.36 806.44,948.57 807.21,940.87 807.97,939.42 808.74,888.87 809.5,915.13 810.27,892.55 811.03,954.76 811.8,947.25 812.56,944.04 813.33,915.27 814.09,935.94 814.86,957.36 815.62,956.81 816.39,900.38 817.16,932.01 817.92,943.11 818.69,914.46 819.45,948.61 820.22,930.48 820.98,930.56 821.75,920.88 822.51,921.91 823.28,918.89 824.04,966.44 824.81,929.44 825.57,926.26 826.34,924.91 827.1,934.6 827.87,916.93 828.63,931.06 829.4,927.96 830.16,925.2 830.93,938.37 831.7,930.45 832.46,922.46 833.23,945.71 833.99,945.68 834.76,933.34 835.52,902.54 836.29,941.68 837.05,885.9 837.82,933.44 838.58,928.48 839.35,906.72 840.11,888.97 840.88,923 841.64,948.87 842.41,958.73 843.17,934.14 843.94,951.54 844.71,889.14 845.47,929.27 846.24,885.89 847,940.81 847.77,931.14 848.53,954.69 849.3,957.07 850.06,962.93 850.83,923.03 851.59,922.95 852.36,955.04 853.12,961.46 853.89,911.34 854.65,933.11 855.42,926.72 856.18,916.18 856.95,930.84 857.71,931.59 858.48,959.84 859.25,943.09 860.01,920.16 860.78,962.54 861.54,922.6 862.31,915.49 863.07,926.73 863.84,947.61 864.6,935.34 865.37,922.97 866.13,939.07 866.9,893.61 867.66,940.41 868.43,972.5 869.19,905.48 869.96,942.29 870.72,939.71 871.49,932.6 872.26,927.94 873.02,959.38 873.79,942.12 874.55,948.94 875.32,933.29 876.08,936.52 876.85,925.93 877.61,946.2 878.38,950.95 879.14,883.41 879.91,946.93 880.67,909.82 881.44,902.85 882.2,937.41 882.97,907.04 883.73,925.65 884.5,901.32 885.26,925.34 886.03,945.74 886.8,907.03 887.56,890.77 888.33,942.01 889.09,910.99 889.86,908.58 890.62,904.87 891.39,916.31 892.15,939.99 892.92,941.14 893.68,944.57 894.45,909.53 895.21,908.99 895.98,936.21 896.74,935.98 897.51,945.67 898.27,905.79 899.04,891.4 899.81,935.55 900.57,932.45 901.34,905.89 902.1,881.56 902.87,931.98 903.63,912.49 904.4,949.05 905.16,910.74 905.93,938.38 906.69,909.76 907.46,918.66 908.22,887.9 908.99,915.12 909.75,935.36 910.52,941.16 911.28,926.64 912.05,935.58 912.81,951.2 913.58,898.7 914.35,915.14 915.11,942.17 915.88,956.75 916.64,946.76 917.41,908.12 918.17,932.83 918.94,920.68 919.7,916.07 920.47,928.38 921.23,909.05 922,946.22 922.76,938.06 923.53,940.02 924.29,887.51 925.06,922.91 925.82,908.33 926.59,946.21 927.35,891.69 928.12,927.76 928.89,948.91 929.65,924.85 930.42,920.71 931.18,925.04 931.95,933.26 932.71,922.96 933.48,927.17 934.24,945.16 935.01,945.63 935.77,910.29 936.54,928.65 937.3,968.75 938.07,964.35 938.83,914.27 939.6,935.22 940.36,971.07 941.13,928.3 941.9,930.1 942.66,943.99 943.43,890.14 944.19,917.23 944.96,960.72 945.72,929.33 946.49,900.07 947.25,932.21 948.02,962.23 948.78,953.7 949.55,957.62 950.31,948.07 951.08,897.15 951.84,929.08 952.61,964.52 953.37,965.56 954.14,905.67 954.9,917.33 955.67,920.02 956.44,927.11 957.2,931.18 957.97,930.52 958.73,918.16 959.5,929.53 960.26,931.31 961.03,930.44 961.79,940.4 962.56,916.57 963.32,918.5 964.09,954.58 964.85,912.61 965.62,949.23 966.38,916.64 967.15,938.94 967.91,913.91 968.68,953.39 969.45,955.62 970.21,923.36 970.98,951.2 971.74,906.28 972.51,950.33 973.27,907.83 974.04,932.79 974.8,863.06 975.57,930.67 976.33,941.32 977.1,966.82 977.86,898.25 978.63,927.51 979.39,964.59 980.16,940.52 980.92,965.76 981.69,934.27 982.45,936.66 983.22,943.82 983.99,957.09 984.75,916.62 985.52,915.88 986.28,926.94 987.05,947.91 987.81,929.41 988.58,933.21 989.34,964.42 990.11,930.83 990.87,953.3 991.64,916.11 992.4,959.08 993.17,928.25 993.93,920.79 994.7,897.4 995.46,954.96 996.23,934.58 996.99,945.37 997.76,930.88 998.53,912.01 999.29,901.61 1000.06,950.78 1000.82,948.68 1001.59,942.93 1002.35,949.54 1003.12,915 1003.88,902.19 1004.65,916.88 1005.41,930.42 1006.18,929.09 1006.94,868.61 1007.71,932.03 1008.47,912.2 1009.24,918.75 1010,902.86 1010.77,951.96 1011.54,950.4 1012.3,927 1013.07,927.49 1013.83,950.28 1014.6,953.24 1015.36,905.18 1016.13,910.19 1016.89,938.91 1017.66,909.7 1018.42,907.68 1019.19,941.93 1019.95,913.83 1020.72,940.54 1021.48,889.61 1022.25,939.34 1023.01,929.86 1023.78,959.88 1024.54,951.02 1025.31,926.75 1026.08,908.25 1026.84,956.13 1027.61,945.08 1028.37,925.46 1029.14,962.68 1029.9,911.7 1030.67,897.17 1031.43,944.2 1032.2,962.38 1032.96,923.12 1033.73,922.52 1034.49,952.63 1035.26,952.32 1036.02,950.97 1036.79,954.72 1037.55,937.9 1038.32,931.2 1039.09,950.31 1039.85,876.01 1040.62,928.94 1041.38,945.89 1042.15,920.57 1042.91,935.54 1043.68,940.48 1044.44,935.58 1045.21,955.99 1045.97,930.66 1046.74,910.84 1047.5,933.58 1048.27,949.35 1049.03,877.86 1049.8,918.1 1050.56,912.18 1051.33,945.37 1052.09,915.37 1052.86,944.46 1053.63,905.73 1054.39,900.31 1055.16,919.26 1055.92,941.71 1056.69,931.35 1057.45,920.88 1058.22,934.89 1058.98,920.37 1059.75,911.85 1060.51,967.28 1061.28,932.89 1062.04,919.18 1062.81,966.46 1063.57,926.02 1064.34,916.58 1065.1,947.05 1065.87,920.36 1066.64,931.55 1067.4,951.08 1068.17,943.07 1068.93,945.57 1069.7,950.58 1070.46,925.68 1071.23,967.87 1071.99,946.91 1072.76,946.05 1073.52,939.63 1074.29,931.03 1075.05,925.06 1075.82,881.56 1076.58,940.64 1077.35,908.33 1078.11,923.87 1078.88,944.28 1079.64,940.12 1080.41,903.25 1081.18,944.31 1081.94,930.76 1082.71,959.1 1083.47,918.17 1084.24,969.04 1085,897.03 1085.77,929.39 1086.53,905.33 1087.3,944.6 1088.06,939.54 1088.83,928.79 1089.59,935.62 1090.36,944.15 1091.12,965.73 1091.89,938.32 1092.65,953.55 1093.42,937.41 1094.18,961.28 1094.95,936.15 1095.72,939.05 1096.48,928.1 1097.25,923.68 1098.01,945.23 1098.78,937.94 1099.54,948.45 1100.31,954.23 1101.07,942.52 1101.84,969.56 1102.6,933.28 1103.37,920.12 1104.13,940.6 1104.9,933.65 1105.66,935.72 1106.43,947.44 1107.19,888.04 1107.96,928.93 1108.73,944.78 1109.49,927.27 1110.26,916.97 1111.02,891.89 1111.79,923.06 1112.55,908.82 1113.32,935.14 1114.08,969.52 1114.85,918.55 1115.61,962.15 1116.38,914.79 1117.14,917.81 1117.91,908.18 1118.67,945.67 1119.44,953.53 1120.2,929.45 1120.97,971.02 1121.73,920.55 1122.5,904.86 1123.27,972.35 1124.03,937.15 1124.8,940.85 1125.56,918.45 1126.33,944.64 1127.09,912.6 1127.86,968.55 1128.62,949.3 1129.39,916.76 1130.15,929.63 1130.92,958.08 1131.68,936.74 1132.45,927.05 1133.21,938.31 1133.98,970.21 1134.74,960.73 1135.51,921.5 1136.28,916.28 1137.04,973 1137.81,942.09 1138.57,922.4 1139.34,919.04 1140.1,939.79 1140.87,950.84 1141.63,967.79 1142.4,914.13 1143.16,946.32 1143.93,916.63 1144.69,964.59 1145.46,965.55 1146.22,945.36 1146.99,926.2 1147.75,946.48 1148.52,938.07 1149.28,964.16 1150.05,944.57 1150.82,936.96 1151.58,939.48 1152.35,935.43 1153.11,943.75 1153.88,950.34 1154.64,908.56 1155.41,969.91 1156.17,941.72 1156.94,932.3 1157.7,932.63 1158.47,946.96 1159.23,931.04 1160,916.45 1160.76,961.07 1161.53,907.08 1162.29,920.25 1163.06,909.34 1163.83,901.18 1164.59,946.93 1165.36,897.3 1166.12,942.01 1166.89,938.75 1167.65,955.76 1168.42,936.37 1169.18,938.93 1169.95,904.35 1170.71,953.25 1171.48,916.79 1172.24,930.03 1173.01,872.31 1173.77,897.04 1174.54,902.1 1175.3,908.48 1176.07,897.63 1176.83,928.07 1177.6,957.55" fill="none" stroke="#27ae50" stroke-width="1.6"/></g>
<g><text transform="translate(753.9 999) scale(0.953 1)" font-size="8.3" fill="#d3d8df">05:30</text><text transform="translate(811.1 999) scale(0.953 1)" font-size="8.3" fill="#d3d8df">07:00</text><text transform="translate(868.3 999) scale(0.953 1)" font-size="8.3" fill="#d3d8df">08:30</text><text transform="translate(925.5 999) scale(0.953 1)" font-size="8.3" fill="#d3d8df">10:00</text><text transform="translate(982.7 999) scale(0.982 1)" font-size="8.3" fill="#d3d8df">11:30</text><text transform="translate(1039.9 999) scale(0.953 1)" font-size="8.3" fill="#d3d8df">13:00</text><text transform="translate(1097.1 999) scale(0.953 1)" font-size="8.3" fill="#d3d8df">14:30</text><text transform="translate(1154.3 999) scale(0.953 1)" font-size="8.3" fill="#d3d8df">16:00</text><text transform="translate(691.4 849) scale(1.004 1)" font-size="9" fill="#d3d8df">150k</text><text transform="translate(691.4 895.6) scale(1.004 1)" font-size="9" fill="#d3d8df">100k</text><text transform="translate(696 941.9) scale(1.034 1)" font-size="9" fill="#d3d8df">50k</text><text x="711" y="987.8" font-size="9" fill="#d3d8df" text-anchor="end">0</text></g>
<circle cx="695.7" cy="1013.3" r="3.9" fill="#0d5f8e"/>
<text transform="translate(703.7 1017) scale(0.932 1)" font-size="9.6" fill="#cfd6de">Last Week</text>
<circle cx="757.9" cy="1013.3" r="3.9" fill="#93e0ff"/>
<text transform="translate(766.1 1017) scale(0.925 1)" font-size="9.6" fill="#cfd6de">Today</text>
<circle cx="801.5" cy="1013.3" r="3.9" fill="#27ae50"/>
<text transform="translate(809.7 1017) scale(0.928 1)" font-size="9.6" fill="#cfd6de">Yesterday</text>
</svg></section>
<section class="panel" id="p10" style="left:1201px;top:808px;width:591px;height:226px">
<h3 class="t" style="left:8.9px;top:8px;font-size:10.8px;line-height:12px;color:#a4bbcc;transform:scaleX(1.009);">DynamoDB Average Write Capacity</h3>
<svg width="591" height="226" viewBox="1201 808 591 226">
<path d="M1402.1 968.2A93.9 93.9 0 0 1 1589.9 968.2L1570.6 968.2A74.6 74.6 0 0 0 1421.4 968.2Z" fill="#32435f"/>
<path d="M1402.1 968.2A93.9 93.9 0 0 1 1456.23 883.14L1464.41 900.62A74.6 74.6 0 0 0 1421.4 968.2Z" fill="#4f7a05"/>
<path d="M1396.95 968.2A99.05 99.05 0 0 1 1566.04 898.16L1563.14 901.06A94.95 94.95 0 0 0 1401.05 968.2Z" fill="#4f7a05"/>
<path d="M1566.04 898.16A99.05 99.05 0 0 1 1584.25 923.23L1580.6 925.09A94.95 94.95 0 0 0 1563.14 901.06Z" fill="#c9791b"/>
<path d="M1584.25 923.23A99.05 99.05 0 0 1 1595.05 968.2L1590.95 968.2A94.95 94.95 0 0 0 1580.6 925.09Z" fill="#b25a1a"/>
<text transform="translate(1449.55 966) scale(0.982 1)" font-size="37.8" fill="#557f06" stroke="#557f06" stroke-width="0.8">36.08</text>
<text x="1409.7" y="980.9" font-size="9.2" fill="#e8e8e8" text-anchor="middle" class="sf">0</text>
<text x="1582.7" y="980.9" font-size="9.2" fill="#e8e8e8" text-anchor="middle" class="sf">100</text>
<text transform="translate(1440.6 1005.4) scale(0.999 1)" font-size="14.6" fill="#ffffff" stroke="#ffffff" stroke-width="0.45">% Write Capacity</text>
</svg></section>
</div></body></html>
